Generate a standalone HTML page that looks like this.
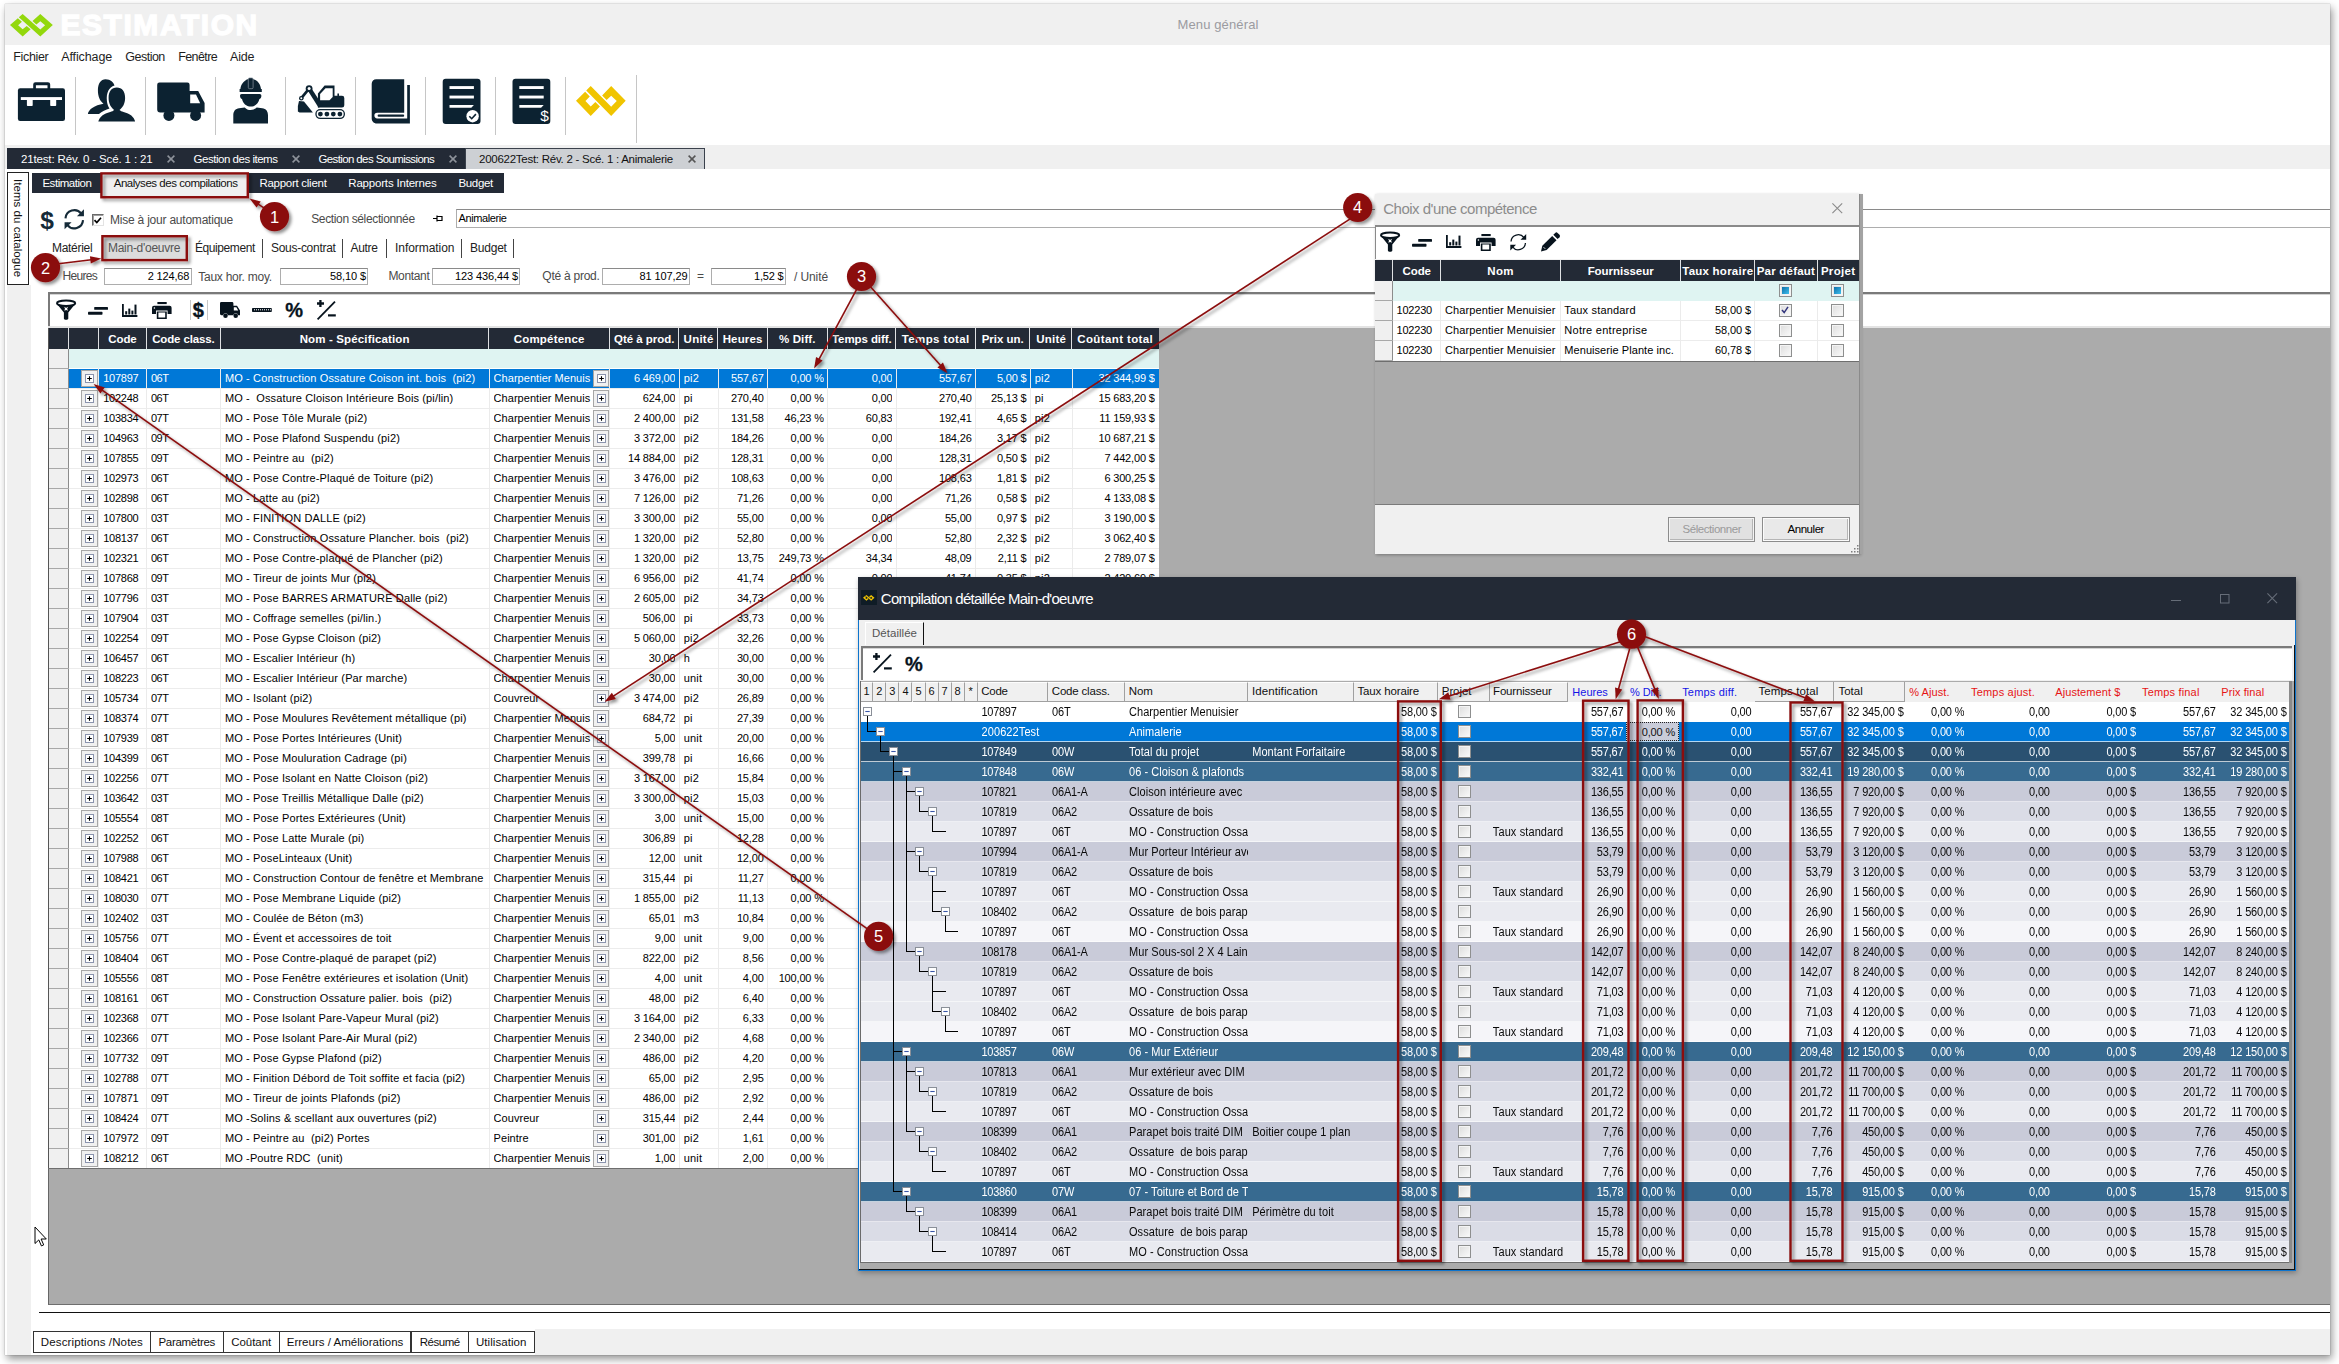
<!DOCTYPE html>
<html><head><meta charset="utf-8"><title>Estimation</title><style>html,body{margin:0;padding:0;background:#fff}
body{width:2339px;height:1364px;position:relative;overflow:hidden;font-family:"Liberation Sans",sans-serif}
#r{position:absolute;left:0;top:0;width:2339px;height:1364px;overflow:hidden}
#r div{position:absolute}
#r svg{pointer-events:none}
.t{white-space:nowrap;color:#000}
.d{height:20px;line-height:20px;font-size:11px;white-space:pre;overflow:hidden;transform:scaleY(1.11);transform-origin:50% 70%}
.g{height:20px;line-height:20px;font-size:11px;white-space:pre;overflow:hidden}
</style></head><body><div id="r">
<div style="left:5px;top:4px;width:2325px;height:1351px;background:#fff;box-shadow:0 0 1px rgba(0,0,0,.4),2px 4px 8px rgba(0,0,0,.42);"></div>
<div style="left:5px;top:4px;width:2325px;height:41px;background:#f0f0f0;"></div>
<div class="t" style="left:60.4px;top:8px;width:230px;height:34px;line-height:34px;font-size:30px;color:#fff;font-weight:bold;letter-spacing:1.57px;-webkit-text-stroke:1.300px #fff;">ESTIMATION</div>
<div class="t" style="left:1118px;top:15px;width:200px;height:20px;line-height:20px;font-size:13px;color:#9b9ba0;text-align:center;letter-spacing:0.13px;">Menu général</div>
<div class="t" style="left:13.3px;top:47px;width:80px;height:20px;line-height:20px;font-size:12.5px;color:#1e1e1e;letter-spacing:-0.36px;">Fichier</div>
<div class="t" style="left:61.2px;top:47px;width:80px;height:20px;line-height:20px;font-size:12.5px;color:#1e1e1e;letter-spacing:-0.1px;">Affichage</div>
<div class="t" style="left:125.3px;top:47px;width:80px;height:20px;line-height:20px;font-size:12.5px;color:#1e1e1e;letter-spacing:-0.51px;">Gestion</div>
<div class="t" style="left:178.2px;top:47px;width:80px;height:20px;line-height:20px;font-size:12.5px;color:#1e1e1e;letter-spacing:-0.58px;">Fenêtre</div>
<div class="t" style="left:230px;top:47px;width:80px;height:20px;line-height:20px;font-size:12.5px;color:#1e1e1e;letter-spacing:-0.18px;">Aide</div>
<div style="left:75px;top:77px;width:1px;height:58px;background:#c6c6c6;"></div>
<div style="left:145px;top:77px;width:1px;height:58px;background:#c6c6c6;"></div>
<div style="left:215px;top:77px;width:1px;height:58px;background:#c6c6c6;"></div>
<div style="left:285px;top:77px;width:1px;height:58px;background:#c6c6c6;"></div>
<div style="left:355px;top:77px;width:1px;height:58px;background:#c6c6c6;"></div>
<div style="left:425px;top:77px;width:1px;height:58px;background:#c6c6c6;"></div>
<div style="left:495px;top:77px;width:1px;height:58px;background:#c6c6c6;"></div>
<div style="left:565px;top:77px;width:1px;height:58px;background:#c6c6c6;"></div>
<div style="left:636px;top:75px;width:1px;height:68px;background:#c6c6c6;"></div>
<div style="left:5px;top:144.5px;width:2325px;height:24.5px;background:#f0f0f0;"></div>
<div style="left:7px;top:148px;width:458px;height:20.5px;background:#232a36;"></div>
<div style="left:464.5px;top:148px;width:240.5px;height:20.5px;background:#cdd0d4;border:1px solid #3a414c;border-bottom:none;box-sizing:border-box;"></div>
<div class="t" style="left:20.9px;top:148.5px;width:300px;height:20px;line-height:20px;font-size:11.5px;color:#fff;letter-spacing:-0.13px;">21test: Rév. 0 - Scé. 1 : 21</div>
<div class="t" style="left:193.6px;top:148.5px;width:300px;height:20px;line-height:20px;font-size:11.5px;color:#fff;letter-spacing:-0.48px;">Gestion des items</div>
<div class="t" style="left:318.4px;top:148.5px;width:300px;height:20px;line-height:20px;font-size:11.5px;color:#fff;letter-spacing:-0.61px;">Gestion des Soumissions</div>
<div class="t" style="left:479px;top:148.5px;width:300px;height:20px;line-height:20px;font-size:11.5px;color:#111;letter-spacing:-0.26px;">200622Test: Rév. 2 - Scé. 1 : Animalerie</div>
<svg style="position:absolute;left:166.7px;top:155px" width="8" height="8" viewBox="0 0 8 8"><path d="M.6 .6 7.4 7.4M7.4 .6 .6 7.4" stroke="#8e939b" stroke-width="1.5"/></svg>
<svg style="position:absolute;left:291.5px;top:155px" width="8" height="8" viewBox="0 0 8 8"><path d="M.6 .6 7.4 7.4M7.4 .6 .6 7.4" stroke="#8e939b" stroke-width="1.5"/></svg>
<svg style="position:absolute;left:448.7px;top:155px" width="8" height="8" viewBox="0 0 8 8"><path d="M.6 .6 7.4 7.4M7.4 .6 .6 7.4" stroke="#8e939b" stroke-width="1.5"/></svg>
<svg style="position:absolute;left:687.5px;top:155px" width="8" height="8" viewBox="0 0 8 8"><path d="M.6 .6 7.4 7.4M7.4 .6 .6 7.4" stroke="#555" stroke-width="1.5"/></svg>
<div style="left:6.8px;top:285px;width:24.1px;height:1070px;background:#f0f0f0;"></div>
<div style="left:7px;top:172px;width:22px;height:113px;background:#fff;border:1px solid #222;box-sizing:border-box;"></div>
<div class="t" style="left:7px;top:179.400px;width:22px;height:104px;writing-mode:vertical-rl;font-size:11.500px;line-height:22px;color:#111;letter-spacing:0.05px">Items du catalogue</div>
<div style="left:32px;top:172.5px;width:472px;height:20.5px;background:#232a36;"></div>
<div style="left:101px;top:173px;width:147.5px;height:25px;background:#f0f0f0;"></div>
<div class="t" style="left:42.4px;top:172.5px;width:200px;height:20.5px;line-height:20.5px;font-size:11.5px;color:#fff;letter-spacing:-0.46px;">Estimation</div>
<div class="t" style="left:113.7px;top:172.5px;width:200px;height:20.5px;line-height:20.5px;font-size:11.5px;color:#111;letter-spacing:-0.47px;">Analyses des compilations</div>
<div class="t" style="left:259.4px;top:172.5px;width:200px;height:20.5px;line-height:20.5px;font-size:11.5px;color:#fff;letter-spacing:-0.27px;">Rapport client</div>
<div class="t" style="left:348.3px;top:172.5px;width:200px;height:20.5px;line-height:20.5px;font-size:11.5px;color:#fff;letter-spacing:-0.19px;">Rapports Internes</div>
<div class="t" style="left:458.5px;top:172.5px;width:200px;height:20.5px;line-height:20.5px;font-size:11.5px;color:#fff;letter-spacing:-0.36px;">Budget</div>
<div style="left:534.6px;top:1329px;width:1795.4px;height:26px;background:#f0f0f0;"></div>
<div style="left:39px;top:1312px;width:2291px;height:1px;background:#111;"></div>
<div style="left:33px;top:1331px;width:117.7px;height:22px;background:#fff;border:1px solid #333;box-sizing:border-box;"></div>
<div class="t" style="left:33px;top:1331px;width:117.7px;height:22px;line-height:22px;font-size:11.5px;color:#111;text-align:center;letter-spacing:0.12px;">Descriptions /Notes</div>
<div style="left:149.7px;top:1331px;width:74.1px;height:22px;background:#fff;border:1px solid #333;box-sizing:border-box;"></div>
<div class="t" style="left:149.7px;top:1331px;width:74.1px;height:22px;line-height:22px;font-size:11.5px;color:#111;text-align:center;letter-spacing:-0.29px;">Paramètres</div>
<div style="left:222.8px;top:1331px;width:56.8px;height:22px;background:#fff;border:1px solid #333;box-sizing:border-box;"></div>
<div class="t" style="left:222.8px;top:1331px;width:56.8px;height:22px;line-height:22px;font-size:11.5px;color:#111;text-align:center;letter-spacing:-0.04px;">Coûtant</div>
<div style="left:278.6px;top:1331px;width:132.9px;height:22px;background:#fff;border:1px solid #333;box-sizing:border-box;"></div>
<div class="t" style="left:278.6px;top:1331px;width:132.9px;height:22px;line-height:22px;font-size:11.5px;color:#111;text-align:center;letter-spacing:0.01px;">Erreurs / Améliorations</div>
<div style="left:410.5px;top:1331px;width:58.4px;height:22px;background:#fff;border:1px solid #333;box-sizing:border-box;"></div>
<div class="t" style="left:410.5px;top:1331px;width:58.4px;height:22px;line-height:22px;font-size:11.5px;color:#111;text-align:center;letter-spacing:-0.47px;">Résumé</div>
<div style="left:467.9px;top:1331px;width:66.7px;height:22px;background:#fff;border:1px solid #333;box-sizing:border-box;"></div>
<div class="t" style="left:467.9px;top:1331px;width:66.7px;height:22px;line-height:22px;font-size:11.5px;color:#111;text-align:center;letter-spacing:0.06px;">Utilisation</div>
<svg style="position:absolute;left:9.75px;top:13.75px;overflow:visible" width="42.8" height="22.4" viewBox="0 0 50 29.9" preserveAspectRatio="none"><g fill="#93d80c"><polygon points="0,14.8 9.2,5.8 13.9,10.4 9.5,15 14.8,20.5 19.5,15.9 24.1,20.5 14.8,29.9"/><polygon points="14.8,0 35.4,20.7 41,15 35.4,9.6 30.8,14 26.3,9.4 35.4,0 50,14.8 35.4,29.9 10.3,4.5"/></g></svg>
<svg style="position:absolute;left:0px;top:0px;overflow:visible" width="700" height="140" viewBox="0 0 700 140"><g fill="#0c2231"><rect x="17.9" y="88.2" width="47.1" height="32.7" rx="2.2"/><path d="M33.2 89V84.6a2.3 2.3 0 0 1 2.3-2.3h12.4a2.3 2.3 0 0 1 2.3 2.3V89h-2.7v-3.7H35.9V89z"/></g><g fill="#fff"><rect x="20.8" y="97.1" width="41.2" height="2.9"/><rect x="26.9" y="99" width="5.8" height="7.1" rx=".8"/><rect x="50.2" y="99" width="6" height="7.1" rx=".8"/></g><g fill="#0c2231"><path d="M105.5 79.3c5.2 0 8.2 3.2 9 6.3-5.6 1.6-8.4 7.4-7.6 15.3.4 3.4 1.2 5.6 2.6 7.6-3.6 1.2-7.7 3-10.5 5.6H87.9c.6-5 6.8-8.8 15.6-10.4-3.6-2.6-5.6-7.2-5.6-13.4 0-6.600 3-11 7.600-11z"/><path d="M116.8 87.6c5.3 0 8.300 4.100 8.300 10.300 0 5.400-2.300 9.600-5.600 12 1 .9 2.200 1.500 4 2 6.500 1.600 10.600 4.800 11.700 9.700H98.300c1.300-4.900 5.400-8.100 11.900-9.700 1.800-.5 3-1.100 4-2-3.300-2.400-5.600-6.600-5.600-12 0-6.200 3-10.300 8.200-10.300z"/></g><g fill="#0c2231"><path d="M159.400 82.600h28a2.200 2.200 0 0 1 2.200 2.200v6.200h8.600l6.400 12v9.600h-44.400a3 3 0 0 1-3-3V84.800a2.200 2.200 0 0 1 2.200-2.200z"/><circle cx="168.900" cy="115.400" r="5.500"/><circle cx="195.600" cy="115.400" r="5.500"/></g><path d="M190.200 94.400h5.800l4.200 8.800h-10z" fill="#fff"/><g fill="#0c2231"><path d="M239.600 91.900v-3h.8c.6-5.400 4.600-9.800 10.300-10.400 5.700.6 9.700 5 10.300 10.400h.8v3z"/><rect x="248.300" y="77.900" width="4.800" height="10.800" rx="1.200" stroke="#8e9aa3" stroke-width=".7"/><path d="M241.800 94.100h17.800c1.600 0 1.900 1.200 1.700 2.500-.2 1.400-1 2.300-1.900 2.400-.9 4.300-4.300 7.600-8.700 7.600s-7.800-3.300-8.700-7.600c-.9-.1-1.700-1-1.900-2.400-.2-1.300.100-2.500 1.700-2.500z"/><path d="M233.300 123.600v-8c0-4.600 2.200-7 5.800-7.400l5.600-.8c1.400 1.600 3.600 2.600 6 2.600s4.600-1 6-2.600l5.600.8c3.600.4 5.700 2.800 5.700 7.400v8z"/></g><g fill="#0c2231"><path d="M317.900 107.500V93.500l6.700-8h9.900v10.300h2.900v-2.400h1.600v2.400h3a2.300 2.300 0 0 1 2.300 2.300v7.100a2.300 2.300 0 0 1-2.300 2.300z"/><path d="M309.100 88.600 320.500 106.500" stroke="#0c2231" stroke-width="4.400" fill="none"/><path d="M309.100 88.600 301.300 98.200" stroke="#0c2231" stroke-width="2.700" fill="none"/><circle cx="309.100" cy="88.600" r="3.400"/><circle cx="301.300" cy="98.200" r="2.300"/><path d="M299 100.900l5 .7 8.900 11h-13.400l-1.600-1.100v-5.500z"/><rect x="315.300" y="109" width="29.700" height="10.100" rx="5"/></g><g fill="#fff"><circle cx="309.100" cy="88.600" r="1.500"/><circle cx="301.300" cy="98.200" r="1"/><path d="M320.100 94l5.400-5.800h7.200v8.900l-3.200 3.200h-9.400z"/><rect x="316.600" y="110.300" width="27.100" height="7.500" rx="3.700"/></g><g fill="#0c2231"><circle cx="320.400" cy="114.100" r="2.400"/><circle cx="326.900" cy="114.100" r="2.400"/><circle cx="333.300" cy="114.100" r="2.400"/><circle cx="339.900" cy="114.100" r="2.400"/></g><g fill="#0c2231"><path d="M376.200 79.200h28v33.600h-27a2.800 2.800 0 0 0 0 5.600h30v-33.400h2.700v38.600h-33.200c-2.800 0-5-2.200-5-5V83.700c0-2.500 2-4.500 4.500-4.500z"/><rect x="377.600" y="114.600" width="26.600" height="2.200" rx="1.100"/></g><rect x="442.7" y="78.700" width="37.800" height="45.300" rx="3" fill="#0c2231"/><rect x="449.5" y="86.1" width="24.400" height="2.900" fill="#fff"/><rect x="449.5" y="95.6" width="24.400" height="2.900" fill="#fff"/><path d="M449.5 104.900h24.400l-2.600 2.900h-21.800z" fill="#fff"/><rect x="512.5" y="78.700" width="37.800" height="45.300" rx="3" fill="#0c2231"/><rect x="519.3" y="86.1" width="24.400" height="2.900" fill="#fff"/><rect x="519.3" y="95.6" width="24.400" height="2.900" fill="#fff"/><path d="M519.3 104.900h24.400l-2.600 2.900h-21.800z" fill="#fff"/><circle cx="472.600" cy="116.200" r="6.200" fill="#fff"/><path d="M469.300 116.300l2.400 2.400 4.200-4.600" fill="none" stroke="#0c2231" stroke-width="1.600"/></svg>
<div class="t" style="left:537.6px;top:105.6px;width:14px;height:20px;line-height:20px;font-size:15.5px;color:#fff;text-align:center;">$</div>
<svg style="position:absolute;left:576px;top:86px;overflow:visible" width="49.7" height="30" viewBox="0 0 50 29.9" preserveAspectRatio="none"><g fill="#f0c400"><polygon points="0,14.8 9.2,5.8 13.9,10.4 9.5,15 14.8,20.5 19.5,15.9 24.1,20.5 14.8,29.9"/><polygon points="14.8,0 35.4,20.7 41,15 35.4,9.6 30.8,14 26.3,9.4 35.4,0 50,14.8 35.4,29.9 10.3,4.5"/></g></svg>
<div style="left:48px;top:327.6px;width:2282px;height:977.3px;background:#ababab;border-bottom:1px solid #6e6e6e;border-left:1px solid #666;box-sizing:border-box;"></div>
<div class="t" style="left:37px;top:206.5px;width:20px;height:27px;line-height:27px;font-size:24.5px;color:#152a38;text-align:center;font-weight:bold;">$</div>
<svg style="position:absolute;left:63px;top:207.5px;overflow:visible" width="22.5" height="22.5" viewBox="0 0 20 20"><g fill="none" stroke="#152a38" stroke-width="1.9"><path d="M2.200 9.200A7.800 7.800 0 0 1 16.200 5"/><path d="M17.800 10.800A7.800 7.800 0 0 1 3.800 15"/></g><path d="M18.600 1.200V7.400H12.400z" fill="#152a38"/><path d="M1.400 18.800V12.600H7.600z" fill="#152a38"/></svg>
<div style="left:92.3px;top:214.3px;width:11.5px;height:11.5px;background:#fff;border:1px solid #6a6a6a;border-right-color:#e3e3e3;border-bottom-color:#e3e3e3;box-shadow:inset 1px 1px 0 #a0a0a0;box-sizing:border-box;"></div>
<svg style="position:absolute;left:94.3px;top:216.6px;overflow:visible" width="7.5" height="7" viewBox="0 0 7.5 7"><path d="M.5 3.200 2.800 5.600 7 .8" fill="none" stroke="#000" stroke-width="1.700"/></svg>
<div class="t" style="left:110px;top:211px;width:200px;height:18px;line-height:18px;font-size:12px;color:#4a4a4a;letter-spacing:-0.22px;">Mise à jour automatique</div>
<div class="t" style="left:311.2px;top:210px;width:200px;height:18px;line-height:18px;font-size:12px;color:#4a4a4a;letter-spacing:-0.36px;">Section sélectionnée</div>
<svg style="position:absolute;left:433px;top:213.5px;overflow:visible" width="10" height="9" viewBox="0 0 10 9"><path d="M0 4.500H4M4 1.500V7.500M4 2.500H9V6.500H4" fill="none" stroke="#000" stroke-width="1.200"/></svg>
<div style="left:456px;top:209px;width:1874px;height:18.5px;background:#fff;border:1px solid #adadad;border-top-color:#8a8a8a;box-sizing:border-box;border-right:none;"></div>
<div class="t" style="left:458.5px;top:209px;width:1874px;height:18.5px;line-height:18.5px;font-size:11px;letter-spacing:-0.4px;">Animalerie</div>
<div style="left:102.5px;top:236.5px;width:84.5px;height:24px;background:#dcdcdc;"></div>
<div class="t" style="left:52px;top:238px;width:120px;height:20px;line-height:20px;font-size:12px;color:#222;letter-spacing:-0.3px;">Matériel</div>
<div class="t" style="left:108px;top:238px;width:120px;height:20px;line-height:20px;font-size:12px;color:#555;letter-spacing:-0.28px;">Main-d'oeuvre</div>
<div class="t" style="left:195px;top:238px;width:120px;height:20px;line-height:20px;font-size:12px;color:#222;letter-spacing:-0.42px;">Équipement</div>
<div class="t" style="left:271px;top:238px;width:120px;height:20px;line-height:20px;font-size:12px;color:#222;letter-spacing:-0.29px;">Sous-contrat</div>
<div class="t" style="left:350.5px;top:238px;width:120px;height:20px;line-height:20px;font-size:12px;color:#222;letter-spacing:-0.34px;">Autre</div>
<div class="t" style="left:395px;top:238px;width:120px;height:20px;line-height:20px;font-size:12px;color:#222;letter-spacing:-0.05px;">Information</div>
<div class="t" style="left:470px;top:238px;width:120px;height:20px;line-height:20px;font-size:12px;color:#222;letter-spacing:-0.22px;">Budget</div>
<div style="left:261.9px;top:239px;width:1.2px;height:18.5px;background:#444;"></div>
<div style="left:341.9px;top:239px;width:1.2px;height:18.5px;background:#444;"></div>
<div style="left:385.8px;top:239px;width:1.2px;height:18.5px;background:#444;"></div>
<div style="left:460.9px;top:239px;width:1.2px;height:18.5px;background:#444;"></div>
<div style="left:512.9px;top:239px;width:1.2px;height:18.5px;background:#444;"></div>
<div class="t" style="left:62.4px;top:267.5px;width:80px;height:17.2px;line-height:17.2px;font-size:12px;color:#4a4a4a;letter-spacing:-0.66px;">Heures</div>
<div style="left:104.1px;top:267.5px;width:87.6px;height:17.2px;background:#fff;border:1px solid #adadad;border-top-color:#8a8a8a;box-sizing:border-box;"></div>
<div class="t" style="left:104.1px;top:267.5px;width:85.1px;height:17.2px;line-height:17.2px;font-size:11px;text-align:right;letter-spacing:-0.17px;">2 124,68</div>
<div class="t" style="left:198.3px;top:268.5px;width:90px;height:17.2px;line-height:17.2px;font-size:12px;color:#4a4a4a;letter-spacing:-0.26px;">Taux hor. moy.</div>
<div style="left:280px;top:267.5px;width:87.6px;height:17.2px;background:#fff;border:1px solid #adadad;border-top-color:#8a8a8a;box-sizing:border-box;"></div>
<div class="t" style="left:280px;top:267.5px;width:86px;height:17.2px;line-height:17.2px;font-size:11px;text-align:right;letter-spacing:-0.1px;">58,10 $</div>
<div class="t" style="left:388.4px;top:267.5px;width:80px;height:17.2px;line-height:17.2px;font-size:12px;color:#4a4a4a;letter-spacing:-0.34px;">Montant</div>
<div style="left:432.2px;top:267.5px;width:87.4px;height:17.2px;background:#fff;border:1px solid #adadad;border-top-color:#8a8a8a;box-sizing:border-box;"></div>
<div class="t" style="left:432.2px;top:267.5px;width:85.8px;height:17.2px;line-height:17.2px;font-size:11px;text-align:right;letter-spacing:-0.1px;">123 436,44 $</div>
<div class="t" style="left:542.3px;top:267.5px;width:80px;height:17.2px;line-height:17.2px;font-size:12px;color:#4a4a4a;letter-spacing:-0.25px;">Qté à prod.</div>
<div style="left:602.3px;top:267.5px;width:87.4px;height:17.2px;background:#fff;border:1px solid #adadad;border-top-color:#8a8a8a;box-sizing:border-box;"></div>
<div class="t" style="left:602.3px;top:267.5px;width:85.2px;height:17.2px;line-height:17.2px;font-size:11px;text-align:right;letter-spacing:-0.1px;">81 107,29</div>
<div class="t" style="left:697px;top:267.5px;width:20px;height:17.2px;line-height:17.2px;font-size:12px;color:#4a4a4a;">=</div>
<div style="left:711.2px;top:267.5px;width:74.5px;height:17.2px;background:#fff;border:1px solid #adadad;border-top-color:#8a8a8a;box-sizing:border-box;"></div>
<div class="t" style="left:711.2px;top:267.5px;width:72.3px;height:17.2px;line-height:17.2px;font-size:11px;text-align:right;letter-spacing:-0.18px;">1,52 $</div>
<div class="t" style="left:794px;top:269.2px;width:60px;height:17.2px;line-height:17.2px;font-size:12px;color:#4a4a4a;letter-spacing:-0.1px;">/ Unité</div>
<div style="left:48px;top:292px;width:2282px;height:35px;background:#fff;border-top:2px solid #7a7a7a;border-left:2px solid #7a7a7a;box-sizing:border-box;"></div>
<div style="left:50px;top:294px;width:2280px;height:1px;background:#d4d4d4;"></div>
<div style="left:48px;top:326.4px;width:2282px;height:1.2px;background:#e3e3e3;"></div>
<svg style="position:absolute;left:56px;top:300px;overflow:visible" width="20.2" height="19.7" viewBox="0 0 20.2 19.7"><g fill="none" stroke="#07131d"><ellipse cx="10.100" cy="3.300" rx="9.100" ry="2.700" stroke-width="2"/></g><path d="M.8 3.800 7.900 12.400V18.500c0 .7.600 1.200 1.300 1.200h1.800c.7 0 1.300-.5 1.300-1.200V12.400L19.400 3.800c-2 1.800-5.400 2.600-9.300 2.600S2.800 5.600.8 3.800z" fill="#07131d"/><path d="M8.600 7.400l3 3m0-3l-3 3" stroke="#fff" stroke-width="1.100"/></svg>
<svg style="position:absolute;left:88px;top:306.7px;overflow:visible" width="20" height="7.7" viewBox="0 0 20 7.7"><rect x="6.200" y="0" width="13.800" height="2.800" rx=".6" fill="#07131d"/><rect x="0" y="4.800" width="14.500" height="2.900" rx=".6" fill="#07131d"/></svg>
<svg style="position:absolute;left:122.4px;top:303.8px;overflow:visible" width="15.4" height="12.9" viewBox="0 0 15.4 12.9"><path d="M.9 0V12H15.400" fill="none" stroke="#07131d" stroke-width="1.800"/><g fill="#07131d"><rect x="3.200" y="7.200" width="2" height="3.300"/><rect x="6.300" y="4.600" width="2" height="5.900"/><rect x="9.400" y="6.600" width="2" height="3.900"/><rect x="12.500" y=".6" width="2" height="9.900"/></g></svg>
<svg style="position:absolute;left:152.1px;top:301.8px;overflow:visible" width="19.6" height="17" viewBox="0 0 19.6 17"><g fill="#07131d"><rect x="5.400" y="0" width="9.300" height="2.100"/><path d="M2 3.700h15.600a2 2 0 0 1 2 2v6.200h-4v-3.400H4v3.400H0V5.700a2 2 0 0 1 2-2z"/><path d="M4.800 9.400h10v7.600h-10z M6.400 10.600v4.800h6.800v-4.800z" fill-rule="evenodd"/></g><circle cx="2.400" cy="6" r=".8" fill="#fff"/></svg>
<div style="left:190px;top:300px;width:1px;height:20px;background:#c8c8c8;"></div>
<div style="left:206.5px;top:300px;width:1px;height:20px;background:#c8c8c8;"></div>
<div class="t" style="left:190.6px;top:299px;width:15.6px;height:23px;line-height:23px;font-size:20px;color:#07131d;text-align:center;font-weight:bold;-webkit-text-stroke:.4px #07131d;">$</div>
<svg style="position:absolute;left:220px;top:302.2px;overflow:visible" width="20" height="16" viewBox="0 0 20 16"><g fill="#07131d"><path d="M1.600 0h10.400a1.400 1.400 0 0 1 1.400 1.400v2.400h3.600l3 4.800v4.600h-1.800a2.600 2.600 0 0 0-5 0H8a2.600 2.600 0 0 0-5 0H1.400A1.400 1.400 0 0 1 0 11.800V1.400A1.400 1.400 0 0 1 1.600 0z"/><circle cx="5.500" cy="13.700" r="2.300"/><circle cx="15.700" cy="13.700" r="2.300"/></g><path d="M13.800 5.200h2.600l1.800 3.400h-4.400z" fill="#fff"/></svg>
<svg style="position:absolute;left:251.9px;top:308px;overflow:visible" width="19.8" height="4" viewBox="0 0 19.8 4"><rect x="0" y="0" width="19.800" height="4" rx=".8" fill="#07131d"/><rect x="2" y="1" width=".9" height="1.400" fill="#cfd3d6"/><rect x="4" y="1" width=".9" height="1.400" fill="#cfd3d6"/><rect x="6" y="1" width=".9" height="1.400" fill="#cfd3d6"/><rect x="8" y="1" width=".9" height="1.400" fill="#cfd3d6"/><rect x="10" y="1" width=".9" height="1.400" fill="#cfd3d6"/><rect x="12" y="1" width=".9" height="1.400" fill="#cfd3d6"/><rect x="14" y="1" width=".9" height="1.400" fill="#cfd3d6"/><rect x="16" y="1" width=".9" height="1.400" fill="#cfd3d6"/><rect x="18" y="1" width=".9" height="1.400" fill="#cfd3d6"/></svg>
<div class="t" style="left:282.2px;top:299.3px;width:24px;height:22px;line-height:22px;font-size:20px;color:#07131d;text-align:center;font-weight:bold;-webkit-text-stroke:.3px #07131d;">%</div>
<svg style="position:absolute;left:317px;top:300.3px;overflow:visible" width="18.8" height="19.4" viewBox="0 0 18.8 19.4"><g stroke="#07131d" fill="none"><path d="M3.400 0V7M0 3.500H7" stroke-width="2.300"/><path d="M.6 19.400 18 1.600" stroke-width="1.800"/><path d="M11 15.400H18.800" stroke-width="2.200"/></g></svg>
<div style="left:48.4px;top:328.4px;width:1110.2px;height:839.9px;background:#fff;"></div>
<div style="left:48.4px;top:328.4px;width:1110.2px;height:20.4px;background:#232a36;"></div>
<div style="left:67.9px;top:328.4px;width:1.1px;height:20.4px;background:#dfe1e4;"></div>
<div style="left:97.9px;top:328.4px;width:1.1px;height:20.4px;background:#dfe1e4;"></div>
<div style="left:145.6px;top:328.4px;width:1.1px;height:20.4px;background:#dfe1e4;"></div>
<div style="left:219.6px;top:328.4px;width:1.1px;height:20.4px;background:#dfe1e4;"></div>
<div style="left:488.3px;top:328.4px;width:1.1px;height:20.4px;background:#dfe1e4;"></div>
<div style="left:608.6px;top:328.4px;width:1.1px;height:20.4px;background:#dfe1e4;"></div>
<div style="left:678.4px;top:328.4px;width:1.1px;height:20.4px;background:#dfe1e4;"></div>
<div style="left:717.3px;top:328.4px;width:1.1px;height:20.4px;background:#dfe1e4;"></div>
<div style="left:766.5px;top:328.4px;width:1.1px;height:20.4px;background:#dfe1e4;"></div>
<div style="left:826.7px;top:328.4px;width:1.1px;height:20.4px;background:#dfe1e4;"></div>
<div style="left:895.4px;top:328.4px;width:1.1px;height:20.4px;background:#dfe1e4;"></div>
<div style="left:974.5px;top:328.4px;width:1.1px;height:20.4px;background:#dfe1e4;"></div>
<div style="left:1029.4px;top:328.4px;width:1.1px;height:20.4px;background:#dfe1e4;"></div>
<div style="left:1071.4px;top:328.4px;width:1.1px;height:20.4px;background:#dfe1e4;"></div>
<div class="t" style="left:98.9px;top:329.4px;width:47.2px;height:20.4px;line-height:20.4px;font-size:11.5px;color:#fff;text-align:center;font-weight:bold;letter-spacing:-0.11px;white-space:nowrap;">Code</div>
<div class="t" style="left:146.6px;top:329.4px;width:73.5px;height:20.4px;line-height:20.4px;font-size:11.5px;color:#fff;text-align:center;font-weight:bold;letter-spacing:-0.15px;white-space:nowrap;">Code class.</div>
<div class="t" style="left:220.6px;top:329.4px;width:268.2px;height:20.4px;line-height:20.4px;font-size:11.5px;color:#fff;text-align:center;font-weight:bold;letter-spacing:0.14px;white-space:nowrap;">Nom - Spécification</div>
<div class="t" style="left:489.3px;top:329.4px;width:119.8px;height:20.4px;line-height:20.4px;font-size:11.5px;color:#fff;text-align:center;font-weight:bold;letter-spacing:0.2px;white-space:nowrap;">Compétence</div>
<div class="t" style="left:609.6px;top:329.4px;width:69.3px;height:20.4px;line-height:20.4px;font-size:11.5px;color:#fff;text-align:center;font-weight:bold;letter-spacing:-0.02px;white-space:nowrap;">Qté à prod.</div>
<div class="t" style="left:679.4px;top:329.4px;width:38.4px;height:20.4px;line-height:20.4px;font-size:11.5px;color:#fff;text-align:center;font-weight:bold;letter-spacing:0.25px;white-space:nowrap;">Unité</div>
<div class="t" style="left:718.3px;top:329.4px;width:48.7px;height:20.4px;line-height:20.4px;font-size:11.5px;color:#fff;text-align:center;font-weight:bold;letter-spacing:0.17px;white-space:nowrap;">Heures</div>
<div class="t" style="left:767.5px;top:329.4px;width:59.7px;height:20.4px;line-height:20.4px;font-size:11.5px;color:#fff;text-align:center;font-weight:bold;letter-spacing:0.1px;white-space:nowrap;">% Diff.</div>
<div class="t" style="left:827.7px;top:329.4px;width:68.2px;height:20.4px;line-height:20.4px;font-size:11.5px;color:#fff;text-align:center;font-weight:bold;letter-spacing:-0.09px;white-space:nowrap;">Temps diff.</div>
<div class="t" style="left:896.4px;top:329.4px;width:78.6px;height:20.4px;line-height:20.4px;font-size:11.5px;color:#fff;text-align:center;font-weight:bold;letter-spacing:0.39px;white-space:nowrap;">Temps total</div>
<div class="t" style="left:975.5px;top:329.4px;width:54.4px;height:20.4px;line-height:20.4px;font-size:11.5px;color:#fff;text-align:center;font-weight:bold;letter-spacing:-0.02px;white-space:nowrap;">Prix un.</div>
<div class="t" style="left:1030.4px;top:329.4px;width:41.5px;height:20.4px;line-height:20.4px;font-size:11.5px;color:#fff;text-align:center;font-weight:bold;letter-spacing:0.25px;white-space:nowrap;">Unité</div>
<div class="t" style="left:1072.4px;top:329.4px;width:85.7px;height:20.4px;line-height:20.4px;font-size:11.5px;color:#fff;text-align:center;font-weight:bold;letter-spacing:0.39px;white-space:nowrap;">Coûtant total</div>
<div style="left:68.9px;top:348.8px;width:1089.7px;height:19.5px;background:#dff4f2;"></div>
<div style="left:48.4px;top:348.8px;width:20.5px;height:819.5px;background:#f0f0f0;border-right:1px solid #8c8c8c;box-sizing:border-box;"></div>
<div style="left:48.4px;top:367.8px;width:20.5px;height:1px;background:#a8a8a8"></div><div style="left:48.4px;top:387.8px;width:20.5px;height:1px;background:#a8a8a8"></div><div style="left:68.9px;top:387.8px;width:1089.7px;height:1px;background:#ececec"></div><div style="left:48.4px;top:407.8px;width:20.5px;height:1px;background:#a8a8a8"></div><div style="left:68.9px;top:407.8px;width:1089.7px;height:1px;background:#ececec"></div><div style="left:48.4px;top:427.8px;width:20.5px;height:1px;background:#a8a8a8"></div><div style="left:68.9px;top:427.8px;width:1089.7px;height:1px;background:#ececec"></div><div style="left:48.4px;top:447.8px;width:20.5px;height:1px;background:#a8a8a8"></div><div style="left:68.9px;top:447.8px;width:1089.7px;height:1px;background:#ececec"></div><div style="left:48.4px;top:467.8px;width:20.5px;height:1px;background:#a8a8a8"></div><div style="left:68.9px;top:467.8px;width:1089.7px;height:1px;background:#ececec"></div><div style="left:48.4px;top:487.8px;width:20.5px;height:1px;background:#a8a8a8"></div><div style="left:68.9px;top:487.8px;width:1089.7px;height:1px;background:#ececec"></div><div style="left:48.4px;top:507.8px;width:20.5px;height:1px;background:#a8a8a8"></div><div style="left:68.9px;top:507.8px;width:1089.7px;height:1px;background:#ececec"></div><div style="left:48.4px;top:527.8px;width:20.5px;height:1px;background:#a8a8a8"></div><div style="left:68.9px;top:527.8px;width:1089.7px;height:1px;background:#ececec"></div><div style="left:48.4px;top:547.8px;width:20.5px;height:1px;background:#a8a8a8"></div><div style="left:68.9px;top:547.8px;width:1089.7px;height:1px;background:#ececec"></div><div style="left:48.4px;top:567.8px;width:20.5px;height:1px;background:#a8a8a8"></div><div style="left:68.9px;top:567.8px;width:1089.7px;height:1px;background:#ececec"></div><div style="left:48.4px;top:587.8px;width:20.5px;height:1px;background:#a8a8a8"></div><div style="left:68.9px;top:587.8px;width:1089.7px;height:1px;background:#ececec"></div><div style="left:48.4px;top:607.8px;width:20.5px;height:1px;background:#a8a8a8"></div><div style="left:68.9px;top:607.8px;width:1089.7px;height:1px;background:#ececec"></div><div style="left:48.4px;top:627.8px;width:20.5px;height:1px;background:#a8a8a8"></div><div style="left:68.9px;top:627.8px;width:1089.7px;height:1px;background:#ececec"></div><div style="left:48.4px;top:647.8px;width:20.5px;height:1px;background:#a8a8a8"></div><div style="left:68.9px;top:647.8px;width:1089.7px;height:1px;background:#ececec"></div><div style="left:48.4px;top:667.8px;width:20.5px;height:1px;background:#a8a8a8"></div><div style="left:68.9px;top:667.8px;width:1089.7px;height:1px;background:#ececec"></div><div style="left:48.4px;top:687.8px;width:20.5px;height:1px;background:#a8a8a8"></div><div style="left:68.9px;top:687.8px;width:1089.7px;height:1px;background:#ececec"></div><div style="left:48.4px;top:707.8px;width:20.5px;height:1px;background:#a8a8a8"></div><div style="left:68.9px;top:707.8px;width:1089.7px;height:1px;background:#ececec"></div><div style="left:48.4px;top:727.8px;width:20.5px;height:1px;background:#a8a8a8"></div><div style="left:68.9px;top:727.8px;width:1089.7px;height:1px;background:#ececec"></div><div style="left:48.4px;top:747.8px;width:20.5px;height:1px;background:#a8a8a8"></div><div style="left:68.9px;top:747.8px;width:1089.7px;height:1px;background:#ececec"></div><div style="left:48.4px;top:767.8px;width:20.5px;height:1px;background:#a8a8a8"></div><div style="left:68.9px;top:767.8px;width:1089.7px;height:1px;background:#ececec"></div><div style="left:48.4px;top:787.8px;width:20.5px;height:1px;background:#a8a8a8"></div><div style="left:68.9px;top:787.8px;width:1089.7px;height:1px;background:#ececec"></div><div style="left:48.4px;top:807.8px;width:20.5px;height:1px;background:#a8a8a8"></div><div style="left:68.9px;top:807.8px;width:1089.7px;height:1px;background:#ececec"></div><div style="left:48.4px;top:827.8px;width:20.5px;height:1px;background:#a8a8a8"></div><div style="left:68.9px;top:827.8px;width:1089.7px;height:1px;background:#ececec"></div><div style="left:48.4px;top:847.8px;width:20.5px;height:1px;background:#a8a8a8"></div><div style="left:68.9px;top:847.8px;width:1089.7px;height:1px;background:#ececec"></div><div style="left:48.4px;top:867.8px;width:20.5px;height:1px;background:#a8a8a8"></div><div style="left:68.9px;top:867.8px;width:1089.7px;height:1px;background:#ececec"></div><div style="left:48.4px;top:887.8px;width:20.5px;height:1px;background:#a8a8a8"></div><div style="left:68.9px;top:887.8px;width:1089.7px;height:1px;background:#ececec"></div><div style="left:48.4px;top:907.8px;width:20.5px;height:1px;background:#a8a8a8"></div><div style="left:68.9px;top:907.8px;width:1089.7px;height:1px;background:#ececec"></div><div style="left:48.4px;top:927.8px;width:20.5px;height:1px;background:#a8a8a8"></div><div style="left:68.9px;top:927.8px;width:1089.7px;height:1px;background:#ececec"></div><div style="left:48.4px;top:947.8px;width:20.5px;height:1px;background:#a8a8a8"></div><div style="left:68.9px;top:947.8px;width:1089.7px;height:1px;background:#ececec"></div><div style="left:48.4px;top:967.8px;width:20.5px;height:1px;background:#a8a8a8"></div><div style="left:68.9px;top:967.8px;width:1089.7px;height:1px;background:#ececec"></div><div style="left:48.4px;top:987.8px;width:20.5px;height:1px;background:#a8a8a8"></div><div style="left:68.9px;top:987.8px;width:1089.7px;height:1px;background:#ececec"></div><div style="left:48.4px;top:1007.8px;width:20.5px;height:1px;background:#a8a8a8"></div><div style="left:68.9px;top:1007.8px;width:1089.7px;height:1px;background:#ececec"></div><div style="left:48.4px;top:1027.8px;width:20.5px;height:1px;background:#a8a8a8"></div><div style="left:68.9px;top:1027.8px;width:1089.7px;height:1px;background:#ececec"></div><div style="left:48.4px;top:1047.8px;width:20.5px;height:1px;background:#a8a8a8"></div><div style="left:68.9px;top:1047.8px;width:1089.7px;height:1px;background:#ececec"></div><div style="left:48.4px;top:1067.8px;width:20.5px;height:1px;background:#a8a8a8"></div><div style="left:68.9px;top:1067.8px;width:1089.7px;height:1px;background:#ececec"></div><div style="left:48.4px;top:1087.8px;width:20.5px;height:1px;background:#a8a8a8"></div><div style="left:68.9px;top:1087.8px;width:1089.7px;height:1px;background:#ececec"></div><div style="left:48.4px;top:1107.8px;width:20.5px;height:1px;background:#a8a8a8"></div><div style="left:68.9px;top:1107.8px;width:1089.7px;height:1px;background:#ececec"></div><div style="left:48.4px;top:1127.8px;width:20.5px;height:1px;background:#a8a8a8"></div><div style="left:68.9px;top:1127.8px;width:1089.7px;height:1px;background:#ececec"></div><div style="left:48.4px;top:1147.8px;width:20.5px;height:1px;background:#a8a8a8"></div><div style="left:68.9px;top:1147.8px;width:1089.7px;height:1px;background:#ececec"></div><div style="left:48.4px;top:1167.8px;width:20.5px;height:1px;background:#a8a8a8"></div>
<div style="left:68.9px;top:369.1px;width:1089.7px;height:19.2px;background:#0078d7;"></div>
<div style="left:98.1px;top:368.3px;width:1px;height:800px;background:#ebebeb;"></div>
<div style="left:145.8px;top:368.3px;width:1px;height:800px;background:#ebebeb;"></div>
<div style="left:219.8px;top:368.3px;width:1px;height:800px;background:#ebebeb;"></div>
<div style="left:488.5px;top:368.3px;width:1px;height:800px;background:#ebebeb;"></div>
<div style="left:608.8px;top:368.3px;width:1px;height:800px;background:#ebebeb;"></div>
<div style="left:678.6px;top:368.3px;width:1px;height:800px;background:#ebebeb;"></div>
<div style="left:717.5px;top:368.3px;width:1px;height:800px;background:#ebebeb;"></div>
<div style="left:766.7px;top:368.3px;width:1px;height:800px;background:#ebebeb;"></div>
<div style="left:826.9px;top:368.3px;width:1px;height:800px;background:#ebebeb;"></div>
<div style="left:895.6px;top:368.3px;width:1px;height:800px;background:#ebebeb;"></div>
<div style="left:974.7px;top:368.3px;width:1px;height:800px;background:#ebebeb;"></div>
<div style="left:1029.6px;top:368.3px;width:1px;height:800px;background:#ebebeb;"></div>
<div style="left:1071.6px;top:368.3px;width:1px;height:800px;background:#ebebeb;"></div>
<div style="left:47.9px;top:328.4px;width:1px;height:839.9px;background:#555;"></div>
<div style="left:48.4px;top:1168px;width:1110.2px;height:1.1px;background:#6e6e6e;"></div>
<div style="left:81.3px;top:369.6px;width:16.6px;height:17.6px;background:#f0f0f0;border:1px solid #a6a6a6;box-sizing:border-box;"></div>
<svg style="position:absolute;left:85.2px;top:374px;overflow:visible" width="9" height="9" viewBox="0 0 9 9"><rect x=".5" y=".5" width="8" height="8" fill="#fff" stroke="#8a93ad"/><path d="M2.200 4.500H6.800M4.500 2.200V6.800" stroke="#000" stroke-width="1.100"/></svg>
<div style="left:592.6px;top:369.6px;width:16.6px;height:17.6px;background:#f0f0f0;border:1px solid #a6a6a6;box-sizing:border-box;"></div>
<svg style="position:absolute;left:596.5px;top:374px;overflow:visible" width="9" height="9" viewBox="0 0 9 9"><rect x=".5" y=".5" width="8" height="8" fill="#fff" stroke="#8a93ad"/><path d="M2.200 4.500H6.800M4.500 2.200V6.800" stroke="#000" stroke-width="1.100"/></svg>
<div class="t g" style="left:103.2px;top:368.3px;width:43.7px;color:#fff;letter-spacing:-0.25px;">107897</div>
<div class="t g" style="left:150.9px;top:368.3px;width:70px;color:#fff;letter-spacing:-0.4px;">06T</div>
<div class="t g" style="left:224.9px;top:368.3px;width:264.7px;color:#fff;letter-spacing:0.14px;">MO - Construction Ossature Coison int. bois  (pi2)</div>
<div class="t g" style="left:493.6px;top:368.3px;width:98.7px;color:#fff;letter-spacing:0.04px;">Charpentier Menuis</div>
<div class="t g" style="left:609.6px;top:368.3px;width:65.9px;color:#fff;text-align:right;letter-spacing:-0.17px;">6 469,00</div>
<div class="t g" style="left:683.7px;top:368.3px;width:34.9px;color:#fff;letter-spacing:0.2px;">pi2</div>
<div class="t g" style="left:718.3px;top:368.3px;width:45.3px;color:#fff;text-align:right;letter-spacing:-0.17px;">557,67</div>
<div class="t g" style="left:767.5px;top:368.3px;width:56.3px;color:#fff;text-align:right;letter-spacing:-0.17px;">0,00 %</div>
<div class="t g" style="left:827.7px;top:368.3px;width:64.8px;color:#fff;text-align:right;letter-spacing:-0.17px;">0,00</div>
<div class="t g" style="left:896.4px;top:368.3px;width:75.2px;color:#fff;text-align:right;letter-spacing:-0.17px;">557,67</div>
<div class="t g" style="left:975.5px;top:368.3px;width:51px;color:#fff;text-align:right;letter-spacing:-0.17px;">5,00 $</div>
<div class="t g" style="left:1034.7px;top:368.3px;width:38px;color:#fff;letter-spacing:0.2px;">pi2</div>
<div class="t g" style="left:1072.4px;top:368.3px;width:82.3px;color:#fff;text-align:right;letter-spacing:-0.17px;">32 344,99 $</div>
<div style="left:81.3px;top:389.6px;width:16.6px;height:17.6px;background:#f0f0f0;border:1px solid #a6a6a6;box-sizing:border-box;"></div>
<svg style="position:absolute;left:85.2px;top:394px;overflow:visible" width="9" height="9" viewBox="0 0 9 9"><rect x=".5" y=".5" width="8" height="8" fill="#fff" stroke="#8a93ad"/><path d="M2.200 4.500H6.800M4.500 2.200V6.800" stroke="#000" stroke-width="1.100"/></svg>
<div style="left:592.6px;top:389.6px;width:16.6px;height:17.6px;background:#f0f0f0;border:1px solid #a6a6a6;box-sizing:border-box;"></div>
<svg style="position:absolute;left:596.5px;top:394px;overflow:visible" width="9" height="9" viewBox="0 0 9 9"><rect x=".5" y=".5" width="8" height="8" fill="#fff" stroke="#8a93ad"/><path d="M2.200 4.500H6.800M4.500 2.200V6.800" stroke="#000" stroke-width="1.100"/></svg>
<div class="t g" style="left:103.2px;top:388.3px;width:43.7px;letter-spacing:-0.25px;">102248</div>
<div class="t g" style="left:150.9px;top:388.3px;width:70px;letter-spacing:-0.4px;">06T</div>
<div class="t g" style="left:224.9px;top:388.3px;width:264.7px;letter-spacing:0.14px;">MO -  Ossature Cloison Intérieure Bois (pi/lin)</div>
<div class="t g" style="left:493.6px;top:388.3px;width:98.7px;letter-spacing:0.04px;">Charpentier Menuis</div>
<div class="t g" style="left:609.6px;top:388.3px;width:65.9px;text-align:right;letter-spacing:-0.17px;">624,00</div>
<div class="t g" style="left:683.7px;top:388.3px;width:34.9px;letter-spacing:0.2px;">pi</div>
<div class="t g" style="left:718.3px;top:388.3px;width:45.3px;text-align:right;letter-spacing:-0.17px;">270,40</div>
<div class="t g" style="left:767.5px;top:388.3px;width:56.3px;text-align:right;letter-spacing:-0.17px;">0,00 %</div>
<div class="t g" style="left:827.7px;top:388.3px;width:64.8px;text-align:right;letter-spacing:-0.17px;">0,00</div>
<div class="t g" style="left:896.4px;top:388.3px;width:75.2px;text-align:right;letter-spacing:-0.17px;">270,40</div>
<div class="t g" style="left:975.5px;top:388.3px;width:51px;text-align:right;letter-spacing:-0.17px;">25,13 $</div>
<div class="t g" style="left:1034.7px;top:388.3px;width:38px;letter-spacing:0.2px;">pi</div>
<div class="t g" style="left:1072.4px;top:388.3px;width:82.3px;text-align:right;letter-spacing:-0.17px;">15 683,20 $</div>
<div style="left:81.3px;top:409.6px;width:16.6px;height:17.6px;background:#f0f0f0;border:1px solid #a6a6a6;box-sizing:border-box;"></div>
<svg style="position:absolute;left:85.2px;top:414px;overflow:visible" width="9" height="9" viewBox="0 0 9 9"><rect x=".5" y=".5" width="8" height="8" fill="#fff" stroke="#8a93ad"/><path d="M2.200 4.500H6.800M4.500 2.200V6.800" stroke="#000" stroke-width="1.100"/></svg>
<div style="left:592.6px;top:409.6px;width:16.6px;height:17.6px;background:#f0f0f0;border:1px solid #a6a6a6;box-sizing:border-box;"></div>
<svg style="position:absolute;left:596.5px;top:414px;overflow:visible" width="9" height="9" viewBox="0 0 9 9"><rect x=".5" y=".5" width="8" height="8" fill="#fff" stroke="#8a93ad"/><path d="M2.200 4.500H6.800M4.500 2.200V6.800" stroke="#000" stroke-width="1.100"/></svg>
<div class="t g" style="left:103.2px;top:408.3px;width:43.7px;letter-spacing:-0.25px;">103834</div>
<div class="t g" style="left:150.9px;top:408.3px;width:70px;letter-spacing:-0.4px;">07T</div>
<div class="t g" style="left:224.9px;top:408.3px;width:264.7px;letter-spacing:0.14px;">MO - Pose Tôle Murale (pi2)</div>
<div class="t g" style="left:493.6px;top:408.3px;width:98.7px;letter-spacing:0.04px;">Charpentier Menuis</div>
<div class="t g" style="left:609.6px;top:408.3px;width:65.9px;text-align:right;letter-spacing:-0.17px;">2 400,00</div>
<div class="t g" style="left:683.7px;top:408.3px;width:34.9px;letter-spacing:0.2px;">pi2</div>
<div class="t g" style="left:718.3px;top:408.3px;width:45.3px;text-align:right;letter-spacing:-0.17px;">131,58</div>
<div class="t g" style="left:767.5px;top:408.3px;width:56.3px;text-align:right;letter-spacing:-0.17px;">46,23 %</div>
<div class="t g" style="left:827.7px;top:408.3px;width:64.8px;text-align:right;letter-spacing:-0.17px;">60,83</div>
<div class="t g" style="left:896.4px;top:408.3px;width:75.2px;text-align:right;letter-spacing:-0.17px;">192,41</div>
<div class="t g" style="left:975.5px;top:408.3px;width:51px;text-align:right;letter-spacing:-0.17px;">4,65 $</div>
<div class="t g" style="left:1034.7px;top:408.3px;width:38px;letter-spacing:0.2px;">pi2</div>
<div class="t g" style="left:1072.4px;top:408.3px;width:82.3px;text-align:right;letter-spacing:-0.17px;">11 159,93 $</div>
<div style="left:81.3px;top:429.6px;width:16.6px;height:17.6px;background:#f0f0f0;border:1px solid #a6a6a6;box-sizing:border-box;"></div>
<svg style="position:absolute;left:85.2px;top:434px;overflow:visible" width="9" height="9" viewBox="0 0 9 9"><rect x=".5" y=".5" width="8" height="8" fill="#fff" stroke="#8a93ad"/><path d="M2.200 4.500H6.800M4.500 2.200V6.800" stroke="#000" stroke-width="1.100"/></svg>
<div style="left:592.6px;top:429.6px;width:16.6px;height:17.6px;background:#f0f0f0;border:1px solid #a6a6a6;box-sizing:border-box;"></div>
<svg style="position:absolute;left:596.5px;top:434px;overflow:visible" width="9" height="9" viewBox="0 0 9 9"><rect x=".5" y=".5" width="8" height="8" fill="#fff" stroke="#8a93ad"/><path d="M2.200 4.500H6.800M4.500 2.200V6.800" stroke="#000" stroke-width="1.100"/></svg>
<div class="t g" style="left:103.2px;top:428.3px;width:43.7px;letter-spacing:-0.25px;">104963</div>
<div class="t g" style="left:150.9px;top:428.3px;width:70px;letter-spacing:-0.4px;">09T</div>
<div class="t g" style="left:224.9px;top:428.3px;width:264.7px;letter-spacing:0.14px;">MO - Pose Plafond Suspendu (pi2)</div>
<div class="t g" style="left:493.6px;top:428.3px;width:98.7px;letter-spacing:0.04px;">Charpentier Menuis</div>
<div class="t g" style="left:609.6px;top:428.3px;width:65.9px;text-align:right;letter-spacing:-0.17px;">3 372,00</div>
<div class="t g" style="left:683.7px;top:428.3px;width:34.9px;letter-spacing:0.2px;">pi2</div>
<div class="t g" style="left:718.3px;top:428.3px;width:45.3px;text-align:right;letter-spacing:-0.17px;">184,26</div>
<div class="t g" style="left:767.5px;top:428.3px;width:56.3px;text-align:right;letter-spacing:-0.17px;">0,00 %</div>
<div class="t g" style="left:827.7px;top:428.3px;width:64.8px;text-align:right;letter-spacing:-0.17px;">0,00</div>
<div class="t g" style="left:896.4px;top:428.3px;width:75.2px;text-align:right;letter-spacing:-0.17px;">184,26</div>
<div class="t g" style="left:975.5px;top:428.3px;width:51px;text-align:right;letter-spacing:-0.17px;">3,17 $</div>
<div class="t g" style="left:1034.7px;top:428.3px;width:38px;letter-spacing:0.2px;">pi2</div>
<div class="t g" style="left:1072.4px;top:428.3px;width:82.3px;text-align:right;letter-spacing:-0.17px;">10 687,21 $</div>
<div style="left:81.3px;top:449.6px;width:16.6px;height:17.6px;background:#f0f0f0;border:1px solid #a6a6a6;box-sizing:border-box;"></div>
<svg style="position:absolute;left:85.2px;top:454px;overflow:visible" width="9" height="9" viewBox="0 0 9 9"><rect x=".5" y=".5" width="8" height="8" fill="#fff" stroke="#8a93ad"/><path d="M2.200 4.500H6.800M4.500 2.200V6.800" stroke="#000" stroke-width="1.100"/></svg>
<div style="left:592.6px;top:449.6px;width:16.6px;height:17.6px;background:#f0f0f0;border:1px solid #a6a6a6;box-sizing:border-box;"></div>
<svg style="position:absolute;left:596.5px;top:454px;overflow:visible" width="9" height="9" viewBox="0 0 9 9"><rect x=".5" y=".5" width="8" height="8" fill="#fff" stroke="#8a93ad"/><path d="M2.200 4.500H6.800M4.500 2.200V6.800" stroke="#000" stroke-width="1.100"/></svg>
<div class="t g" style="left:103.2px;top:448.3px;width:43.7px;letter-spacing:-0.25px;">107855</div>
<div class="t g" style="left:150.9px;top:448.3px;width:70px;letter-spacing:-0.4px;">09T</div>
<div class="t g" style="left:224.9px;top:448.3px;width:264.7px;letter-spacing:0.14px;">MO - Peintre au  (pi2)</div>
<div class="t g" style="left:493.6px;top:448.3px;width:98.7px;letter-spacing:0.04px;">Charpentier Menuis</div>
<div class="t g" style="left:609.6px;top:448.3px;width:65.9px;text-align:right;letter-spacing:-0.17px;">14 884,00</div>
<div class="t g" style="left:683.7px;top:448.3px;width:34.9px;letter-spacing:0.2px;">pi2</div>
<div class="t g" style="left:718.3px;top:448.3px;width:45.3px;text-align:right;letter-spacing:-0.17px;">128,31</div>
<div class="t g" style="left:767.5px;top:448.3px;width:56.3px;text-align:right;letter-spacing:-0.17px;">0,00 %</div>
<div class="t g" style="left:827.7px;top:448.3px;width:64.8px;text-align:right;letter-spacing:-0.17px;">0,00</div>
<div class="t g" style="left:896.4px;top:448.3px;width:75.2px;text-align:right;letter-spacing:-0.17px;">128,31</div>
<div class="t g" style="left:975.5px;top:448.3px;width:51px;text-align:right;letter-spacing:-0.17px;">0,50 $</div>
<div class="t g" style="left:1034.7px;top:448.3px;width:38px;letter-spacing:0.2px;">pi2</div>
<div class="t g" style="left:1072.4px;top:448.3px;width:82.3px;text-align:right;letter-spacing:-0.17px;">7 442,00 $</div>
<div style="left:81.3px;top:469.6px;width:16.6px;height:17.6px;background:#f0f0f0;border:1px solid #a6a6a6;box-sizing:border-box;"></div>
<svg style="position:absolute;left:85.2px;top:474px;overflow:visible" width="9" height="9" viewBox="0 0 9 9"><rect x=".5" y=".5" width="8" height="8" fill="#fff" stroke="#8a93ad"/><path d="M2.200 4.500H6.800M4.500 2.200V6.800" stroke="#000" stroke-width="1.100"/></svg>
<div style="left:592.6px;top:469.6px;width:16.6px;height:17.6px;background:#f0f0f0;border:1px solid #a6a6a6;box-sizing:border-box;"></div>
<svg style="position:absolute;left:596.5px;top:474px;overflow:visible" width="9" height="9" viewBox="0 0 9 9"><rect x=".5" y=".5" width="8" height="8" fill="#fff" stroke="#8a93ad"/><path d="M2.200 4.500H6.800M4.500 2.200V6.800" stroke="#000" stroke-width="1.100"/></svg>
<div class="t g" style="left:103.2px;top:468.3px;width:43.7px;letter-spacing:-0.25px;">102973</div>
<div class="t g" style="left:150.9px;top:468.3px;width:70px;letter-spacing:-0.4px;">06T</div>
<div class="t g" style="left:224.9px;top:468.3px;width:264.7px;letter-spacing:0.14px;">MO - Pose Contre-Plaqué de Toiture (pi2)</div>
<div class="t g" style="left:493.6px;top:468.3px;width:98.7px;letter-spacing:0.04px;">Charpentier Menuis</div>
<div class="t g" style="left:609.6px;top:468.3px;width:65.9px;text-align:right;letter-spacing:-0.17px;">3 476,00</div>
<div class="t g" style="left:683.7px;top:468.3px;width:34.9px;letter-spacing:0.2px;">pi2</div>
<div class="t g" style="left:718.3px;top:468.3px;width:45.3px;text-align:right;letter-spacing:-0.17px;">108,63</div>
<div class="t g" style="left:767.5px;top:468.3px;width:56.3px;text-align:right;letter-spacing:-0.17px;">0,00 %</div>
<div class="t g" style="left:827.7px;top:468.3px;width:64.8px;text-align:right;letter-spacing:-0.17px;">0,00</div>
<div class="t g" style="left:896.4px;top:468.3px;width:75.2px;text-align:right;letter-spacing:-0.17px;">108,63</div>
<div class="t g" style="left:975.5px;top:468.3px;width:51px;text-align:right;letter-spacing:-0.17px;">1,81 $</div>
<div class="t g" style="left:1034.7px;top:468.3px;width:38px;letter-spacing:0.2px;">pi2</div>
<div class="t g" style="left:1072.4px;top:468.3px;width:82.3px;text-align:right;letter-spacing:-0.17px;">6 300,25 $</div>
<div style="left:81.3px;top:489.6px;width:16.6px;height:17.6px;background:#f0f0f0;border:1px solid #a6a6a6;box-sizing:border-box;"></div>
<svg style="position:absolute;left:85.2px;top:494px;overflow:visible" width="9" height="9" viewBox="0 0 9 9"><rect x=".5" y=".5" width="8" height="8" fill="#fff" stroke="#8a93ad"/><path d="M2.200 4.500H6.800M4.500 2.200V6.800" stroke="#000" stroke-width="1.100"/></svg>
<div style="left:592.6px;top:489.6px;width:16.6px;height:17.6px;background:#f0f0f0;border:1px solid #a6a6a6;box-sizing:border-box;"></div>
<svg style="position:absolute;left:596.5px;top:494px;overflow:visible" width="9" height="9" viewBox="0 0 9 9"><rect x=".5" y=".5" width="8" height="8" fill="#fff" stroke="#8a93ad"/><path d="M2.200 4.500H6.800M4.500 2.200V6.800" stroke="#000" stroke-width="1.100"/></svg>
<div class="t g" style="left:103.2px;top:488.3px;width:43.7px;letter-spacing:-0.25px;">102898</div>
<div class="t g" style="left:150.9px;top:488.3px;width:70px;letter-spacing:-0.4px;">06T</div>
<div class="t g" style="left:224.9px;top:488.3px;width:264.7px;letter-spacing:0.14px;">MO - Latte au (pi2)</div>
<div class="t g" style="left:493.6px;top:488.3px;width:98.7px;letter-spacing:0.04px;">Charpentier Menuis</div>
<div class="t g" style="left:609.6px;top:488.3px;width:65.9px;text-align:right;letter-spacing:-0.17px;">7 126,00</div>
<div class="t g" style="left:683.7px;top:488.3px;width:34.9px;letter-spacing:0.2px;">pi2</div>
<div class="t g" style="left:718.3px;top:488.3px;width:45.3px;text-align:right;letter-spacing:-0.17px;">71,26</div>
<div class="t g" style="left:767.5px;top:488.3px;width:56.3px;text-align:right;letter-spacing:-0.17px;">0,00 %</div>
<div class="t g" style="left:827.7px;top:488.3px;width:64.8px;text-align:right;letter-spacing:-0.17px;">0,00</div>
<div class="t g" style="left:896.4px;top:488.3px;width:75.2px;text-align:right;letter-spacing:-0.17px;">71,26</div>
<div class="t g" style="left:975.5px;top:488.3px;width:51px;text-align:right;letter-spacing:-0.17px;">0,58 $</div>
<div class="t g" style="left:1034.7px;top:488.3px;width:38px;letter-spacing:0.2px;">pi2</div>
<div class="t g" style="left:1072.4px;top:488.3px;width:82.3px;text-align:right;letter-spacing:-0.17px;">4 133,08 $</div>
<div style="left:81.3px;top:509.6px;width:16.6px;height:17.6px;background:#f0f0f0;border:1px solid #a6a6a6;box-sizing:border-box;"></div>
<svg style="position:absolute;left:85.2px;top:514px;overflow:visible" width="9" height="9" viewBox="0 0 9 9"><rect x=".5" y=".5" width="8" height="8" fill="#fff" stroke="#8a93ad"/><path d="M2.200 4.500H6.800M4.500 2.200V6.800" stroke="#000" stroke-width="1.100"/></svg>
<div style="left:592.6px;top:509.6px;width:16.6px;height:17.6px;background:#f0f0f0;border:1px solid #a6a6a6;box-sizing:border-box;"></div>
<svg style="position:absolute;left:596.5px;top:514px;overflow:visible" width="9" height="9" viewBox="0 0 9 9"><rect x=".5" y=".5" width="8" height="8" fill="#fff" stroke="#8a93ad"/><path d="M2.200 4.500H6.800M4.500 2.200V6.800" stroke="#000" stroke-width="1.100"/></svg>
<div class="t g" style="left:103.2px;top:508.3px;width:43.7px;letter-spacing:-0.25px;">107800</div>
<div class="t g" style="left:150.9px;top:508.3px;width:70px;letter-spacing:-0.4px;">03T</div>
<div class="t g" style="left:224.9px;top:508.3px;width:264.7px;letter-spacing:0.14px;">MO - FINITION DALLE (pi2)</div>
<div class="t g" style="left:493.6px;top:508.3px;width:98.7px;letter-spacing:0.04px;">Charpentier Menuis</div>
<div class="t g" style="left:609.6px;top:508.3px;width:65.9px;text-align:right;letter-spacing:-0.17px;">3 300,00</div>
<div class="t g" style="left:683.7px;top:508.3px;width:34.9px;letter-spacing:0.2px;">pi2</div>
<div class="t g" style="left:718.3px;top:508.3px;width:45.3px;text-align:right;letter-spacing:-0.17px;">55,00</div>
<div class="t g" style="left:767.5px;top:508.3px;width:56.3px;text-align:right;letter-spacing:-0.17px;">0,00 %</div>
<div class="t g" style="left:827.7px;top:508.3px;width:64.8px;text-align:right;letter-spacing:-0.17px;">0,00</div>
<div class="t g" style="left:896.4px;top:508.3px;width:75.2px;text-align:right;letter-spacing:-0.17px;">55,00</div>
<div class="t g" style="left:975.5px;top:508.3px;width:51px;text-align:right;letter-spacing:-0.17px;">0,97 $</div>
<div class="t g" style="left:1034.7px;top:508.3px;width:38px;letter-spacing:0.2px;">pi2</div>
<div class="t g" style="left:1072.4px;top:508.3px;width:82.3px;text-align:right;letter-spacing:-0.17px;">3 190,00 $</div>
<div style="left:81.3px;top:529.6px;width:16.6px;height:17.6px;background:#f0f0f0;border:1px solid #a6a6a6;box-sizing:border-box;"></div>
<svg style="position:absolute;left:85.2px;top:534px;overflow:visible" width="9" height="9" viewBox="0 0 9 9"><rect x=".5" y=".5" width="8" height="8" fill="#fff" stroke="#8a93ad"/><path d="M2.200 4.500H6.800M4.500 2.200V6.800" stroke="#000" stroke-width="1.100"/></svg>
<div style="left:592.6px;top:529.6px;width:16.6px;height:17.6px;background:#f0f0f0;border:1px solid #a6a6a6;box-sizing:border-box;"></div>
<svg style="position:absolute;left:596.5px;top:534px;overflow:visible" width="9" height="9" viewBox="0 0 9 9"><rect x=".5" y=".5" width="8" height="8" fill="#fff" stroke="#8a93ad"/><path d="M2.200 4.500H6.800M4.500 2.200V6.800" stroke="#000" stroke-width="1.100"/></svg>
<div class="t g" style="left:103.2px;top:528.3px;width:43.7px;letter-spacing:-0.25px;">108137</div>
<div class="t g" style="left:150.9px;top:528.3px;width:70px;letter-spacing:-0.4px;">06T</div>
<div class="t g" style="left:224.9px;top:528.3px;width:264.7px;letter-spacing:0.14px;">MO - Construction Ossature Plancher. bois  (pi2)</div>
<div class="t g" style="left:493.6px;top:528.3px;width:98.7px;letter-spacing:0.04px;">Charpentier Menuis</div>
<div class="t g" style="left:609.6px;top:528.3px;width:65.9px;text-align:right;letter-spacing:-0.17px;">1 320,00</div>
<div class="t g" style="left:683.7px;top:528.3px;width:34.9px;letter-spacing:0.2px;">pi2</div>
<div class="t g" style="left:718.3px;top:528.3px;width:45.3px;text-align:right;letter-spacing:-0.17px;">52,80</div>
<div class="t g" style="left:767.5px;top:528.3px;width:56.3px;text-align:right;letter-spacing:-0.17px;">0,00 %</div>
<div class="t g" style="left:827.7px;top:528.3px;width:64.8px;text-align:right;letter-spacing:-0.17px;">0,00</div>
<div class="t g" style="left:896.4px;top:528.3px;width:75.2px;text-align:right;letter-spacing:-0.17px;">52,80</div>
<div class="t g" style="left:975.5px;top:528.3px;width:51px;text-align:right;letter-spacing:-0.17px;">2,32 $</div>
<div class="t g" style="left:1034.7px;top:528.3px;width:38px;letter-spacing:0.2px;">pi2</div>
<div class="t g" style="left:1072.4px;top:528.3px;width:82.3px;text-align:right;letter-spacing:-0.17px;">3 062,40 $</div>
<div style="left:81.3px;top:549.6px;width:16.6px;height:17.6px;background:#f0f0f0;border:1px solid #a6a6a6;box-sizing:border-box;"></div>
<svg style="position:absolute;left:85.2px;top:554px;overflow:visible" width="9" height="9" viewBox="0 0 9 9"><rect x=".5" y=".5" width="8" height="8" fill="#fff" stroke="#8a93ad"/><path d="M2.200 4.500H6.800M4.500 2.200V6.800" stroke="#000" stroke-width="1.100"/></svg>
<div style="left:592.6px;top:549.6px;width:16.6px;height:17.6px;background:#f0f0f0;border:1px solid #a6a6a6;box-sizing:border-box;"></div>
<svg style="position:absolute;left:596.5px;top:554px;overflow:visible" width="9" height="9" viewBox="0 0 9 9"><rect x=".5" y=".5" width="8" height="8" fill="#fff" stroke="#8a93ad"/><path d="M2.200 4.500H6.800M4.500 2.200V6.800" stroke="#000" stroke-width="1.100"/></svg>
<div class="t g" style="left:103.2px;top:548.3px;width:43.7px;letter-spacing:-0.25px;">102321</div>
<div class="t g" style="left:150.9px;top:548.3px;width:70px;letter-spacing:-0.4px;">06T</div>
<div class="t g" style="left:224.9px;top:548.3px;width:264.7px;letter-spacing:0.14px;">MO - Pose Contre-plaqué de Plancher (pi2)</div>
<div class="t g" style="left:493.6px;top:548.3px;width:98.7px;letter-spacing:0.04px;">Charpentier Menuis</div>
<div class="t g" style="left:609.6px;top:548.3px;width:65.9px;text-align:right;letter-spacing:-0.17px;">1 320,00</div>
<div class="t g" style="left:683.7px;top:548.3px;width:34.9px;letter-spacing:0.2px;">pi2</div>
<div class="t g" style="left:718.3px;top:548.3px;width:45.3px;text-align:right;letter-spacing:-0.17px;">13,75</div>
<div class="t g" style="left:767.5px;top:548.3px;width:56.3px;text-align:right;letter-spacing:-0.17px;">249,73 %</div>
<div class="t g" style="left:827.7px;top:548.3px;width:64.8px;text-align:right;letter-spacing:-0.17px;">34,34</div>
<div class="t g" style="left:896.4px;top:548.3px;width:75.2px;text-align:right;letter-spacing:-0.17px;">48,09</div>
<div class="t g" style="left:975.5px;top:548.3px;width:51px;text-align:right;letter-spacing:-0.17px;">2,11 $</div>
<div class="t g" style="left:1034.7px;top:548.3px;width:38px;letter-spacing:0.2px;">pi2</div>
<div class="t g" style="left:1072.4px;top:548.3px;width:82.3px;text-align:right;letter-spacing:-0.17px;">2 789,07 $</div>
<div style="left:81.3px;top:569.6px;width:16.6px;height:17.6px;background:#f0f0f0;border:1px solid #a6a6a6;box-sizing:border-box;"></div>
<svg style="position:absolute;left:85.2px;top:574px;overflow:visible" width="9" height="9" viewBox="0 0 9 9"><rect x=".5" y=".5" width="8" height="8" fill="#fff" stroke="#8a93ad"/><path d="M2.200 4.500H6.800M4.500 2.200V6.800" stroke="#000" stroke-width="1.100"/></svg>
<div style="left:592.6px;top:569.6px;width:16.6px;height:17.6px;background:#f0f0f0;border:1px solid #a6a6a6;box-sizing:border-box;"></div>
<svg style="position:absolute;left:596.5px;top:574px;overflow:visible" width="9" height="9" viewBox="0 0 9 9"><rect x=".5" y=".5" width="8" height="8" fill="#fff" stroke="#8a93ad"/><path d="M2.200 4.500H6.800M4.500 2.200V6.800" stroke="#000" stroke-width="1.100"/></svg>
<div class="t g" style="left:103.2px;top:568.3px;width:43.7px;letter-spacing:-0.25px;">107868</div>
<div class="t g" style="left:150.9px;top:568.3px;width:70px;letter-spacing:-0.4px;">09T</div>
<div class="t g" style="left:224.9px;top:568.3px;width:264.7px;letter-spacing:0.14px;">MO - Tireur de joints Mur (pi2)</div>
<div class="t g" style="left:493.6px;top:568.3px;width:98.7px;letter-spacing:0.04px;">Charpentier Menuis</div>
<div class="t g" style="left:609.6px;top:568.3px;width:65.9px;text-align:right;letter-spacing:-0.17px;">6 956,00</div>
<div class="t g" style="left:683.7px;top:568.3px;width:34.9px;letter-spacing:0.2px;">pi2</div>
<div class="t g" style="left:718.3px;top:568.3px;width:45.3px;text-align:right;letter-spacing:-0.17px;">41,74</div>
<div class="t g" style="left:767.5px;top:568.3px;width:56.3px;text-align:right;letter-spacing:-0.17px;">0,00 %</div>
<div class="t g" style="left:827.7px;top:568.3px;width:64.8px;text-align:right;letter-spacing:-0.17px;">0,00</div>
<div class="t g" style="left:896.4px;top:568.3px;width:75.2px;text-align:right;letter-spacing:-0.17px;">41,74</div>
<div class="t g" style="left:975.5px;top:568.3px;width:51px;text-align:right;letter-spacing:-0.17px;">0,35 $</div>
<div class="t g" style="left:1034.7px;top:568.3px;width:38px;letter-spacing:0.2px;">pi2</div>
<div class="t g" style="left:1072.4px;top:568.3px;width:82.3px;text-align:right;letter-spacing:-0.17px;">2 420,69 $</div>
<div style="left:81.3px;top:589.6px;width:16.6px;height:17.6px;background:#f0f0f0;border:1px solid #a6a6a6;box-sizing:border-box;"></div>
<svg style="position:absolute;left:85.2px;top:594px;overflow:visible" width="9" height="9" viewBox="0 0 9 9"><rect x=".5" y=".5" width="8" height="8" fill="#fff" stroke="#8a93ad"/><path d="M2.200 4.500H6.800M4.500 2.200V6.800" stroke="#000" stroke-width="1.100"/></svg>
<div style="left:592.6px;top:589.6px;width:16.6px;height:17.6px;background:#f0f0f0;border:1px solid #a6a6a6;box-sizing:border-box;"></div>
<svg style="position:absolute;left:596.5px;top:594px;overflow:visible" width="9" height="9" viewBox="0 0 9 9"><rect x=".5" y=".5" width="8" height="8" fill="#fff" stroke="#8a93ad"/><path d="M2.200 4.500H6.800M4.500 2.200V6.800" stroke="#000" stroke-width="1.100"/></svg>
<div class="t g" style="left:103.2px;top:588.3px;width:43.7px;letter-spacing:-0.25px;">107796</div>
<div class="t g" style="left:150.9px;top:588.3px;width:70px;letter-spacing:-0.4px;">03T</div>
<div class="t g" style="left:224.9px;top:588.3px;width:264.7px;letter-spacing:0.14px;">MO - Pose BARRES ARMATURE Dalle (pi2)</div>
<div class="t g" style="left:493.6px;top:588.3px;width:98.7px;letter-spacing:0.04px;">Charpentier Menuis</div>
<div class="t g" style="left:609.6px;top:588.3px;width:65.9px;text-align:right;letter-spacing:-0.17px;">2 605,00</div>
<div class="t g" style="left:683.7px;top:588.3px;width:34.9px;letter-spacing:0.2px;">pi2</div>
<div class="t g" style="left:718.3px;top:588.3px;width:45.3px;text-align:right;letter-spacing:-0.17px;">34,73</div>
<div class="t g" style="left:767.5px;top:588.3px;width:56.3px;text-align:right;letter-spacing:-0.17px;">0,00 %</div>
<div class="t g" style="left:827.7px;top:588.3px;width:64.8px;text-align:right;letter-spacing:-0.17px;">0,00</div>
<div class="t g" style="left:896.4px;top:588.3px;width:75.2px;text-align:right;letter-spacing:-0.17px;">34,73</div>
<div class="t g" style="left:975.5px;top:588.3px;width:51px;text-align:right;letter-spacing:-0.17px;">0,77 $</div>
<div class="t g" style="left:1034.7px;top:588.3px;width:38px;letter-spacing:0.2px;">pi2</div>
<div class="t g" style="left:1072.4px;top:588.3px;width:82.3px;text-align:right;letter-spacing:-0.17px;">2 014,34 $</div>
<div style="left:81.3px;top:609.6px;width:16.6px;height:17.6px;background:#f0f0f0;border:1px solid #a6a6a6;box-sizing:border-box;"></div>
<svg style="position:absolute;left:85.2px;top:614px;overflow:visible" width="9" height="9" viewBox="0 0 9 9"><rect x=".5" y=".5" width="8" height="8" fill="#fff" stroke="#8a93ad"/><path d="M2.200 4.500H6.800M4.500 2.200V6.800" stroke="#000" stroke-width="1.100"/></svg>
<div style="left:592.6px;top:609.6px;width:16.6px;height:17.6px;background:#f0f0f0;border:1px solid #a6a6a6;box-sizing:border-box;"></div>
<svg style="position:absolute;left:596.5px;top:614px;overflow:visible" width="9" height="9" viewBox="0 0 9 9"><rect x=".5" y=".5" width="8" height="8" fill="#fff" stroke="#8a93ad"/><path d="M2.200 4.500H6.800M4.500 2.200V6.800" stroke="#000" stroke-width="1.100"/></svg>
<div class="t g" style="left:103.2px;top:608.3px;width:43.7px;letter-spacing:-0.25px;">107904</div>
<div class="t g" style="left:150.9px;top:608.3px;width:70px;letter-spacing:-0.4px;">03T</div>
<div class="t g" style="left:224.9px;top:608.3px;width:264.7px;letter-spacing:0.14px;">MO - Coffrage semelles (pi/lin.)</div>
<div class="t g" style="left:493.6px;top:608.3px;width:98.7px;letter-spacing:0.04px;">Charpentier Menuis</div>
<div class="t g" style="left:609.6px;top:608.3px;width:65.9px;text-align:right;letter-spacing:-0.17px;">506,00</div>
<div class="t g" style="left:683.7px;top:608.3px;width:34.9px;letter-spacing:0.2px;">pi</div>
<div class="t g" style="left:718.3px;top:608.3px;width:45.3px;text-align:right;letter-spacing:-0.17px;">33,73</div>
<div class="t g" style="left:767.5px;top:608.3px;width:56.3px;text-align:right;letter-spacing:-0.17px;">0,00 %</div>
<div class="t g" style="left:827.7px;top:608.3px;width:64.8px;text-align:right;letter-spacing:-0.17px;">0,00</div>
<div class="t g" style="left:896.4px;top:608.3px;width:75.2px;text-align:right;letter-spacing:-0.17px;">33,73</div>
<div class="t g" style="left:975.5px;top:608.3px;width:51px;text-align:right;letter-spacing:-0.17px;">3,87 $</div>
<div class="t g" style="left:1034.7px;top:608.3px;width:38px;letter-spacing:0.2px;">pi</div>
<div class="t g" style="left:1072.4px;top:608.3px;width:82.3px;text-align:right;letter-spacing:-0.17px;">1 956,34 $</div>
<div style="left:81.3px;top:629.6px;width:16.6px;height:17.6px;background:#f0f0f0;border:1px solid #a6a6a6;box-sizing:border-box;"></div>
<svg style="position:absolute;left:85.2px;top:634px;overflow:visible" width="9" height="9" viewBox="0 0 9 9"><rect x=".5" y=".5" width="8" height="8" fill="#fff" stroke="#8a93ad"/><path d="M2.200 4.500H6.800M4.500 2.200V6.800" stroke="#000" stroke-width="1.100"/></svg>
<div style="left:592.6px;top:629.6px;width:16.6px;height:17.6px;background:#f0f0f0;border:1px solid #a6a6a6;box-sizing:border-box;"></div>
<svg style="position:absolute;left:596.5px;top:634px;overflow:visible" width="9" height="9" viewBox="0 0 9 9"><rect x=".5" y=".5" width="8" height="8" fill="#fff" stroke="#8a93ad"/><path d="M2.200 4.500H6.800M4.500 2.200V6.800" stroke="#000" stroke-width="1.100"/></svg>
<div class="t g" style="left:103.2px;top:628.3px;width:43.7px;letter-spacing:-0.25px;">102254</div>
<div class="t g" style="left:150.9px;top:628.3px;width:70px;letter-spacing:-0.4px;">09T</div>
<div class="t g" style="left:224.9px;top:628.3px;width:264.7px;letter-spacing:0.14px;">MO - Pose Gypse Cloison (pi2)</div>
<div class="t g" style="left:493.6px;top:628.3px;width:98.7px;letter-spacing:0.04px;">Charpentier Menuis</div>
<div class="t g" style="left:609.6px;top:628.3px;width:65.9px;text-align:right;letter-spacing:-0.17px;">5 060,00</div>
<div class="t g" style="left:683.7px;top:628.3px;width:34.9px;letter-spacing:0.2px;">pi2</div>
<div class="t g" style="left:718.3px;top:628.3px;width:45.3px;text-align:right;letter-spacing:-0.17px;">32,26</div>
<div class="t g" style="left:767.5px;top:628.3px;width:56.3px;text-align:right;letter-spacing:-0.17px;">0,00 %</div>
<div class="t g" style="left:827.7px;top:628.3px;width:64.8px;text-align:right;letter-spacing:-0.17px;">0,00</div>
<div class="t g" style="left:896.4px;top:628.3px;width:75.2px;text-align:right;letter-spacing:-0.17px;">32,26</div>
<div class="t g" style="left:975.5px;top:628.3px;width:51px;text-align:right;letter-spacing:-0.17px;">0,37 $</div>
<div class="t g" style="left:1034.7px;top:628.3px;width:38px;letter-spacing:0.2px;">pi2</div>
<div class="t g" style="left:1072.4px;top:628.3px;width:82.3px;text-align:right;letter-spacing:-0.17px;">1 871,08 $</div>
<div style="left:81.3px;top:649.6px;width:16.6px;height:17.6px;background:#f0f0f0;border:1px solid #a6a6a6;box-sizing:border-box;"></div>
<svg style="position:absolute;left:85.2px;top:654px;overflow:visible" width="9" height="9" viewBox="0 0 9 9"><rect x=".5" y=".5" width="8" height="8" fill="#fff" stroke="#8a93ad"/><path d="M2.200 4.500H6.800M4.500 2.200V6.800" stroke="#000" stroke-width="1.100"/></svg>
<div style="left:592.6px;top:649.6px;width:16.6px;height:17.6px;background:#f0f0f0;border:1px solid #a6a6a6;box-sizing:border-box;"></div>
<svg style="position:absolute;left:596.5px;top:654px;overflow:visible" width="9" height="9" viewBox="0 0 9 9"><rect x=".5" y=".5" width="8" height="8" fill="#fff" stroke="#8a93ad"/><path d="M2.200 4.500H6.800M4.500 2.200V6.800" stroke="#000" stroke-width="1.100"/></svg>
<div class="t g" style="left:103.2px;top:648.3px;width:43.7px;letter-spacing:-0.25px;">106457</div>
<div class="t g" style="left:150.9px;top:648.3px;width:70px;letter-spacing:-0.4px;">06T</div>
<div class="t g" style="left:224.9px;top:648.3px;width:264.7px;letter-spacing:0.14px;">MO - Escalier Intérieur (h)</div>
<div class="t g" style="left:493.6px;top:648.3px;width:98.7px;letter-spacing:0.04px;">Charpentier Menuis</div>
<div class="t g" style="left:609.6px;top:648.3px;width:65.9px;text-align:right;letter-spacing:-0.17px;">30,00</div>
<div class="t g" style="left:683.7px;top:648.3px;width:34.9px;letter-spacing:0.2px;">h</div>
<div class="t g" style="left:718.3px;top:648.3px;width:45.3px;text-align:right;letter-spacing:-0.17px;">30,00</div>
<div class="t g" style="left:767.5px;top:648.3px;width:56.3px;text-align:right;letter-spacing:-0.17px;">0,00 %</div>
<div class="t g" style="left:827.7px;top:648.3px;width:64.8px;text-align:right;letter-spacing:-0.17px;">0,00</div>
<div class="t g" style="left:896.4px;top:648.3px;width:75.2px;text-align:right;letter-spacing:-0.17px;">30,00</div>
<div class="t g" style="left:975.5px;top:648.3px;width:51px;text-align:right;letter-spacing:-0.17px;">58,00 $</div>
<div class="t g" style="left:1034.7px;top:648.3px;width:38px;letter-spacing:0.2px;">h</div>
<div class="t g" style="left:1072.4px;top:648.3px;width:82.3px;text-align:right;letter-spacing:-0.17px;">1 740,00 $</div>
<div style="left:81.3px;top:669.6px;width:16.6px;height:17.6px;background:#f0f0f0;border:1px solid #a6a6a6;box-sizing:border-box;"></div>
<svg style="position:absolute;left:85.2px;top:674px;overflow:visible" width="9" height="9" viewBox="0 0 9 9"><rect x=".5" y=".5" width="8" height="8" fill="#fff" stroke="#8a93ad"/><path d="M2.200 4.500H6.800M4.500 2.200V6.800" stroke="#000" stroke-width="1.100"/></svg>
<div style="left:592.6px;top:669.6px;width:16.6px;height:17.6px;background:#f0f0f0;border:1px solid #a6a6a6;box-sizing:border-box;"></div>
<svg style="position:absolute;left:596.5px;top:674px;overflow:visible" width="9" height="9" viewBox="0 0 9 9"><rect x=".5" y=".5" width="8" height="8" fill="#fff" stroke="#8a93ad"/><path d="M2.200 4.500H6.800M4.500 2.200V6.800" stroke="#000" stroke-width="1.100"/></svg>
<div class="t g" style="left:103.2px;top:668.3px;width:43.7px;letter-spacing:-0.25px;">108223</div>
<div class="t g" style="left:150.9px;top:668.3px;width:70px;letter-spacing:-0.4px;">06T</div>
<div class="t g" style="left:224.9px;top:668.3px;width:264.7px;letter-spacing:0.14px;">MO - Escalier Intérieur (Par marche)</div>
<div class="t g" style="left:493.6px;top:668.3px;width:98.7px;letter-spacing:0.04px;">Charpentier Menuis</div>
<div class="t g" style="left:609.6px;top:668.3px;width:65.9px;text-align:right;letter-spacing:-0.17px;">30,00</div>
<div class="t g" style="left:683.7px;top:668.3px;width:34.9px;letter-spacing:0.2px;">unit</div>
<div class="t g" style="left:718.3px;top:668.3px;width:45.3px;text-align:right;letter-spacing:-0.17px;">30,00</div>
<div class="t g" style="left:767.5px;top:668.3px;width:56.3px;text-align:right;letter-spacing:-0.17px;">0,00 %</div>
<div class="t g" style="left:827.7px;top:668.3px;width:64.8px;text-align:right;letter-spacing:-0.17px;">0,00</div>
<div class="t g" style="left:896.4px;top:668.3px;width:75.2px;text-align:right;letter-spacing:-0.17px;">30,00</div>
<div class="t g" style="left:975.5px;top:668.3px;width:51px;text-align:right;letter-spacing:-0.17px;">58,00 $</div>
<div class="t g" style="left:1034.7px;top:668.3px;width:38px;letter-spacing:0.2px;">unit</div>
<div class="t g" style="left:1072.4px;top:668.3px;width:82.3px;text-align:right;letter-spacing:-0.17px;">1 740,00 $</div>
<div style="left:81.3px;top:689.6px;width:16.6px;height:17.6px;background:#f0f0f0;border:1px solid #a6a6a6;box-sizing:border-box;"></div>
<svg style="position:absolute;left:85.2px;top:694px;overflow:visible" width="9" height="9" viewBox="0 0 9 9"><rect x=".5" y=".5" width="8" height="8" fill="#fff" stroke="#8a93ad"/><path d="M2.200 4.500H6.800M4.500 2.200V6.800" stroke="#000" stroke-width="1.100"/></svg>
<div style="left:592.6px;top:689.6px;width:16.6px;height:17.6px;background:#f0f0f0;border:1px solid #a6a6a6;box-sizing:border-box;"></div>
<svg style="position:absolute;left:596.5px;top:694px;overflow:visible" width="9" height="9" viewBox="0 0 9 9"><rect x=".5" y=".5" width="8" height="8" fill="#fff" stroke="#8a93ad"/><path d="M2.200 4.500H6.800M4.500 2.200V6.800" stroke="#000" stroke-width="1.100"/></svg>
<div class="t g" style="left:103.2px;top:688.3px;width:43.7px;letter-spacing:-0.25px;">105734</div>
<div class="t g" style="left:150.9px;top:688.3px;width:70px;letter-spacing:-0.4px;">07T</div>
<div class="t g" style="left:224.9px;top:688.3px;width:264.7px;letter-spacing:0.14px;">MO - Isolant (pi2)</div>
<div class="t g" style="left:493.6px;top:688.3px;width:98.7px;letter-spacing:0.04px;">Couvreur</div>
<div class="t g" style="left:609.6px;top:688.3px;width:65.9px;text-align:right;letter-spacing:-0.17px;">3 474,00</div>
<div class="t g" style="left:683.7px;top:688.3px;width:34.9px;letter-spacing:0.2px;">pi2</div>
<div class="t g" style="left:718.3px;top:688.3px;width:45.3px;text-align:right;letter-spacing:-0.17px;">26,89</div>
<div class="t g" style="left:767.5px;top:688.3px;width:56.3px;text-align:right;letter-spacing:-0.17px;">0,00 %</div>
<div class="t g" style="left:827.7px;top:688.3px;width:64.8px;text-align:right;letter-spacing:-0.17px;">0,00</div>
<div class="t g" style="left:896.4px;top:688.3px;width:75.2px;text-align:right;letter-spacing:-0.17px;">26,89</div>
<div class="t g" style="left:975.5px;top:688.3px;width:51px;text-align:right;letter-spacing:-0.17px;">0,45 $</div>
<div class="t g" style="left:1034.7px;top:688.3px;width:38px;letter-spacing:0.2px;">pi2</div>
<div class="t g" style="left:1072.4px;top:688.3px;width:82.3px;text-align:right;letter-spacing:-0.17px;">1 559,62 $</div>
<div style="left:81.3px;top:709.6px;width:16.6px;height:17.6px;background:#f0f0f0;border:1px solid #a6a6a6;box-sizing:border-box;"></div>
<svg style="position:absolute;left:85.2px;top:714px;overflow:visible" width="9" height="9" viewBox="0 0 9 9"><rect x=".5" y=".5" width="8" height="8" fill="#fff" stroke="#8a93ad"/><path d="M2.200 4.500H6.800M4.500 2.200V6.800" stroke="#000" stroke-width="1.100"/></svg>
<div style="left:592.6px;top:709.6px;width:16.6px;height:17.6px;background:#f0f0f0;border:1px solid #a6a6a6;box-sizing:border-box;"></div>
<svg style="position:absolute;left:596.5px;top:714px;overflow:visible" width="9" height="9" viewBox="0 0 9 9"><rect x=".5" y=".5" width="8" height="8" fill="#fff" stroke="#8a93ad"/><path d="M2.200 4.500H6.800M4.500 2.200V6.800" stroke="#000" stroke-width="1.100"/></svg>
<div class="t g" style="left:103.2px;top:708.3px;width:43.7px;letter-spacing:-0.25px;">108374</div>
<div class="t g" style="left:150.9px;top:708.3px;width:70px;letter-spacing:-0.4px;">07T</div>
<div class="t g" style="left:224.9px;top:708.3px;width:264.7px;letter-spacing:0.14px;">MO - Pose Moulures Revêtement métallique (pi)</div>
<div class="t g" style="left:493.6px;top:708.3px;width:98.7px;letter-spacing:0.04px;">Charpentier Menuis</div>
<div class="t g" style="left:609.6px;top:708.3px;width:65.9px;text-align:right;letter-spacing:-0.17px;">684,72</div>
<div class="t g" style="left:683.7px;top:708.3px;width:34.9px;letter-spacing:0.2px;">pi</div>
<div class="t g" style="left:718.3px;top:708.3px;width:45.3px;text-align:right;letter-spacing:-0.17px;">27,39</div>
<div class="t g" style="left:767.5px;top:708.3px;width:56.3px;text-align:right;letter-spacing:-0.17px;">0,00 %</div>
<div class="t g" style="left:827.7px;top:708.3px;width:64.8px;text-align:right;letter-spacing:-0.17px;">0,00</div>
<div class="t g" style="left:896.4px;top:708.3px;width:75.2px;text-align:right;letter-spacing:-0.17px;">27,39</div>
<div class="t g" style="left:975.5px;top:708.3px;width:51px;text-align:right;letter-spacing:-0.17px;">2,32 $</div>
<div class="t g" style="left:1034.7px;top:708.3px;width:38px;letter-spacing:0.2px;">pi</div>
<div class="t g" style="left:1072.4px;top:708.3px;width:82.3px;text-align:right;letter-spacing:-0.17px;">1 588,62 $</div>
<div style="left:81.3px;top:729.6px;width:16.6px;height:17.6px;background:#f0f0f0;border:1px solid #a6a6a6;box-sizing:border-box;"></div>
<svg style="position:absolute;left:85.2px;top:734px;overflow:visible" width="9" height="9" viewBox="0 0 9 9"><rect x=".5" y=".5" width="8" height="8" fill="#fff" stroke="#8a93ad"/><path d="M2.200 4.500H6.800M4.500 2.200V6.800" stroke="#000" stroke-width="1.100"/></svg>
<div style="left:592.6px;top:729.6px;width:16.6px;height:17.6px;background:#f0f0f0;border:1px solid #a6a6a6;box-sizing:border-box;"></div>
<svg style="position:absolute;left:596.5px;top:734px;overflow:visible" width="9" height="9" viewBox="0 0 9 9"><rect x=".5" y=".5" width="8" height="8" fill="#fff" stroke="#8a93ad"/><path d="M2.200 4.500H6.800M4.500 2.200V6.800" stroke="#000" stroke-width="1.100"/></svg>
<div class="t g" style="left:103.2px;top:728.3px;width:43.7px;letter-spacing:-0.25px;">107939</div>
<div class="t g" style="left:150.9px;top:728.3px;width:70px;letter-spacing:-0.4px;">08T</div>
<div class="t g" style="left:224.9px;top:728.3px;width:264.7px;letter-spacing:0.14px;">MO - Pose Portes Intérieures (Unit)</div>
<div class="t g" style="left:493.6px;top:728.3px;width:98.7px;letter-spacing:0.04px;">Charpentier Menuis</div>
<div class="t g" style="left:609.6px;top:728.3px;width:65.9px;text-align:right;letter-spacing:-0.17px;">5,00</div>
<div class="t g" style="left:683.7px;top:728.3px;width:34.9px;letter-spacing:0.2px;">unit</div>
<div class="t g" style="left:718.3px;top:728.3px;width:45.3px;text-align:right;letter-spacing:-0.17px;">20,00</div>
<div class="t g" style="left:767.5px;top:728.3px;width:56.3px;text-align:right;letter-spacing:-0.17px;">0,00 %</div>
<div class="t g" style="left:827.7px;top:728.3px;width:64.8px;text-align:right;letter-spacing:-0.17px;">0,00</div>
<div class="t g" style="left:896.4px;top:728.3px;width:75.2px;text-align:right;letter-spacing:-0.17px;">20,00</div>
<div class="t g" style="left:975.5px;top:728.3px;width:51px;text-align:right;letter-spacing:-0.17px;">232,00 $</div>
<div class="t g" style="left:1034.7px;top:728.3px;width:38px;letter-spacing:0.2px;">unit</div>
<div class="t g" style="left:1072.4px;top:728.3px;width:82.3px;text-align:right;letter-spacing:-0.17px;">1 160,00 $</div>
<div style="left:81.3px;top:749.6px;width:16.6px;height:17.6px;background:#f0f0f0;border:1px solid #a6a6a6;box-sizing:border-box;"></div>
<svg style="position:absolute;left:85.2px;top:754px;overflow:visible" width="9" height="9" viewBox="0 0 9 9"><rect x=".5" y=".5" width="8" height="8" fill="#fff" stroke="#8a93ad"/><path d="M2.200 4.500H6.800M4.500 2.200V6.800" stroke="#000" stroke-width="1.100"/></svg>
<div style="left:592.6px;top:749.6px;width:16.6px;height:17.6px;background:#f0f0f0;border:1px solid #a6a6a6;box-sizing:border-box;"></div>
<svg style="position:absolute;left:596.5px;top:754px;overflow:visible" width="9" height="9" viewBox="0 0 9 9"><rect x=".5" y=".5" width="8" height="8" fill="#fff" stroke="#8a93ad"/><path d="M2.200 4.500H6.800M4.500 2.200V6.800" stroke="#000" stroke-width="1.100"/></svg>
<div class="t g" style="left:103.2px;top:748.3px;width:43.7px;letter-spacing:-0.25px;">104399</div>
<div class="t g" style="left:150.9px;top:748.3px;width:70px;letter-spacing:-0.4px;">06T</div>
<div class="t g" style="left:224.9px;top:748.3px;width:264.7px;letter-spacing:0.14px;">MO - Pose Mouluration Cadrage (pi)</div>
<div class="t g" style="left:493.6px;top:748.3px;width:98.7px;letter-spacing:0.04px;">Charpentier Menuis</div>
<div class="t g" style="left:609.6px;top:748.3px;width:65.9px;text-align:right;letter-spacing:-0.17px;">399,78</div>
<div class="t g" style="left:683.7px;top:748.3px;width:34.9px;letter-spacing:0.2px;">pi</div>
<div class="t g" style="left:718.3px;top:748.3px;width:45.3px;text-align:right;letter-spacing:-0.17px;">16,66</div>
<div class="t g" style="left:767.5px;top:748.3px;width:56.3px;text-align:right;letter-spacing:-0.17px;">0,00 %</div>
<div class="t g" style="left:827.7px;top:748.3px;width:64.8px;text-align:right;letter-spacing:-0.17px;">0,00</div>
<div class="t g" style="left:896.4px;top:748.3px;width:75.2px;text-align:right;letter-spacing:-0.17px;">16,66</div>
<div class="t g" style="left:975.5px;top:748.3px;width:51px;text-align:right;letter-spacing:-0.17px;">2,42 $</div>
<div class="t g" style="left:1034.7px;top:748.3px;width:38px;letter-spacing:0.2px;">pi</div>
<div class="t g" style="left:1072.4px;top:748.3px;width:82.3px;text-align:right;letter-spacing:-0.17px;">966,28 $</div>
<div style="left:81.3px;top:769.6px;width:16.6px;height:17.6px;background:#f0f0f0;border:1px solid #a6a6a6;box-sizing:border-box;"></div>
<svg style="position:absolute;left:85.2px;top:774px;overflow:visible" width="9" height="9" viewBox="0 0 9 9"><rect x=".5" y=".5" width="8" height="8" fill="#fff" stroke="#8a93ad"/><path d="M2.200 4.500H6.800M4.500 2.200V6.800" stroke="#000" stroke-width="1.100"/></svg>
<div style="left:592.6px;top:769.6px;width:16.6px;height:17.6px;background:#f0f0f0;border:1px solid #a6a6a6;box-sizing:border-box;"></div>
<svg style="position:absolute;left:596.5px;top:774px;overflow:visible" width="9" height="9" viewBox="0 0 9 9"><rect x=".5" y=".5" width="8" height="8" fill="#fff" stroke="#8a93ad"/><path d="M2.200 4.500H6.800M4.500 2.200V6.800" stroke="#000" stroke-width="1.100"/></svg>
<div class="t g" style="left:103.2px;top:768.3px;width:43.7px;letter-spacing:-0.25px;">102256</div>
<div class="t g" style="left:150.9px;top:768.3px;width:70px;letter-spacing:-0.4px;">07T</div>
<div class="t g" style="left:224.9px;top:768.3px;width:264.7px;letter-spacing:0.14px;">MO - Pose Isolant en Natte Cloison (pi2)</div>
<div class="t g" style="left:493.6px;top:768.3px;width:98.7px;letter-spacing:0.04px;">Charpentier Menuis</div>
<div class="t g" style="left:609.6px;top:768.3px;width:65.9px;text-align:right;letter-spacing:-0.17px;">3 167,00</div>
<div class="t g" style="left:683.7px;top:768.3px;width:34.9px;letter-spacing:0.2px;">pi2</div>
<div class="t g" style="left:718.3px;top:768.3px;width:45.3px;text-align:right;letter-spacing:-0.17px;">15,84</div>
<div class="t g" style="left:767.5px;top:768.3px;width:56.3px;text-align:right;letter-spacing:-0.17px;">0,00 %</div>
<div class="t g" style="left:827.7px;top:768.3px;width:64.8px;text-align:right;letter-spacing:-0.17px;">0,00</div>
<div class="t g" style="left:896.4px;top:768.3px;width:75.2px;text-align:right;letter-spacing:-0.17px;">15,84</div>
<div class="t g" style="left:975.5px;top:768.3px;width:51px;text-align:right;letter-spacing:-0.17px;">0,29 $</div>
<div class="t g" style="left:1034.7px;top:768.3px;width:38px;letter-spacing:0.2px;">pi2</div>
<div class="t g" style="left:1072.4px;top:768.3px;width:82.3px;text-align:right;letter-spacing:-0.17px;">918,72 $</div>
<div style="left:81.3px;top:789.6px;width:16.6px;height:17.6px;background:#f0f0f0;border:1px solid #a6a6a6;box-sizing:border-box;"></div>
<svg style="position:absolute;left:85.2px;top:794px;overflow:visible" width="9" height="9" viewBox="0 0 9 9"><rect x=".5" y=".5" width="8" height="8" fill="#fff" stroke="#8a93ad"/><path d="M2.200 4.500H6.800M4.500 2.200V6.800" stroke="#000" stroke-width="1.100"/></svg>
<div style="left:592.6px;top:789.6px;width:16.6px;height:17.6px;background:#f0f0f0;border:1px solid #a6a6a6;box-sizing:border-box;"></div>
<svg style="position:absolute;left:596.5px;top:794px;overflow:visible" width="9" height="9" viewBox="0 0 9 9"><rect x=".5" y=".5" width="8" height="8" fill="#fff" stroke="#8a93ad"/><path d="M2.200 4.500H6.800M4.500 2.200V6.800" stroke="#000" stroke-width="1.100"/></svg>
<div class="t g" style="left:103.2px;top:788.3px;width:43.7px;letter-spacing:-0.25px;">103642</div>
<div class="t g" style="left:150.9px;top:788.3px;width:70px;letter-spacing:-0.4px;">03T</div>
<div class="t g" style="left:224.9px;top:788.3px;width:264.7px;letter-spacing:0.14px;">MO - Pose Treillis Métallique Dalle (pi2)</div>
<div class="t g" style="left:493.6px;top:788.3px;width:98.7px;letter-spacing:0.04px;">Charpentier Menuis</div>
<div class="t g" style="left:609.6px;top:788.3px;width:65.9px;text-align:right;letter-spacing:-0.17px;">3 300,00</div>
<div class="t g" style="left:683.7px;top:788.3px;width:34.9px;letter-spacing:0.2px;">pi2</div>
<div class="t g" style="left:718.3px;top:788.3px;width:45.3px;text-align:right;letter-spacing:-0.17px;">15,03</div>
<div class="t g" style="left:767.5px;top:788.3px;width:56.3px;text-align:right;letter-spacing:-0.17px;">0,00 %</div>
<div class="t g" style="left:827.7px;top:788.3px;width:64.8px;text-align:right;letter-spacing:-0.17px;">0,00</div>
<div class="t g" style="left:896.4px;top:788.3px;width:75.2px;text-align:right;letter-spacing:-0.17px;">15,03</div>
<div class="t g" style="left:975.5px;top:788.3px;width:51px;text-align:right;letter-spacing:-0.17px;">0,26 $</div>
<div class="t g" style="left:1034.7px;top:788.3px;width:38px;letter-spacing:0.2px;">pi2</div>
<div class="t g" style="left:1072.4px;top:788.3px;width:82.3px;text-align:right;letter-spacing:-0.17px;">871,74 $</div>
<div style="left:81.3px;top:809.6px;width:16.6px;height:17.6px;background:#f0f0f0;border:1px solid #a6a6a6;box-sizing:border-box;"></div>
<svg style="position:absolute;left:85.2px;top:814px;overflow:visible" width="9" height="9" viewBox="0 0 9 9"><rect x=".5" y=".5" width="8" height="8" fill="#fff" stroke="#8a93ad"/><path d="M2.200 4.500H6.800M4.500 2.200V6.800" stroke="#000" stroke-width="1.100"/></svg>
<div style="left:592.6px;top:809.6px;width:16.6px;height:17.6px;background:#f0f0f0;border:1px solid #a6a6a6;box-sizing:border-box;"></div>
<svg style="position:absolute;left:596.5px;top:814px;overflow:visible" width="9" height="9" viewBox="0 0 9 9"><rect x=".5" y=".5" width="8" height="8" fill="#fff" stroke="#8a93ad"/><path d="M2.200 4.500H6.800M4.500 2.200V6.800" stroke="#000" stroke-width="1.100"/></svg>
<div class="t g" style="left:103.2px;top:808.3px;width:43.7px;letter-spacing:-0.25px;">105554</div>
<div class="t g" style="left:150.9px;top:808.3px;width:70px;letter-spacing:-0.4px;">08T</div>
<div class="t g" style="left:224.9px;top:808.3px;width:264.7px;letter-spacing:0.14px;">MO - Pose Portes Extérieures (Unit)</div>
<div class="t g" style="left:493.6px;top:808.3px;width:98.7px;letter-spacing:0.04px;">Charpentier Menuis</div>
<div class="t g" style="left:609.6px;top:808.3px;width:65.9px;text-align:right;letter-spacing:-0.17px;">3,00</div>
<div class="t g" style="left:683.7px;top:808.3px;width:34.9px;letter-spacing:0.2px;">unit</div>
<div class="t g" style="left:718.3px;top:808.3px;width:45.3px;text-align:right;letter-spacing:-0.17px;">15,00</div>
<div class="t g" style="left:767.5px;top:808.3px;width:56.3px;text-align:right;letter-spacing:-0.17px;">0,00 %</div>
<div class="t g" style="left:827.7px;top:808.3px;width:64.8px;text-align:right;letter-spacing:-0.17px;">0,00</div>
<div class="t g" style="left:896.4px;top:808.3px;width:75.2px;text-align:right;letter-spacing:-0.17px;">15,00</div>
<div class="t g" style="left:975.5px;top:808.3px;width:51px;text-align:right;letter-spacing:-0.17px;">290,00 $</div>
<div class="t g" style="left:1034.7px;top:808.3px;width:38px;letter-spacing:0.2px;">unit</div>
<div class="t g" style="left:1072.4px;top:808.3px;width:82.3px;text-align:right;letter-spacing:-0.17px;">870,00 $</div>
<div style="left:81.3px;top:829.6px;width:16.6px;height:17.6px;background:#f0f0f0;border:1px solid #a6a6a6;box-sizing:border-box;"></div>
<svg style="position:absolute;left:85.2px;top:834px;overflow:visible" width="9" height="9" viewBox="0 0 9 9"><rect x=".5" y=".5" width="8" height="8" fill="#fff" stroke="#8a93ad"/><path d="M2.200 4.500H6.800M4.500 2.200V6.800" stroke="#000" stroke-width="1.100"/></svg>
<div style="left:592.6px;top:829.6px;width:16.6px;height:17.6px;background:#f0f0f0;border:1px solid #a6a6a6;box-sizing:border-box;"></div>
<svg style="position:absolute;left:596.5px;top:834px;overflow:visible" width="9" height="9" viewBox="0 0 9 9"><rect x=".5" y=".5" width="8" height="8" fill="#fff" stroke="#8a93ad"/><path d="M2.200 4.500H6.800M4.500 2.200V6.800" stroke="#000" stroke-width="1.100"/></svg>
<div class="t g" style="left:103.2px;top:828.3px;width:43.7px;letter-spacing:-0.25px;">102252</div>
<div class="t g" style="left:150.9px;top:828.3px;width:70px;letter-spacing:-0.4px;">06T</div>
<div class="t g" style="left:224.9px;top:828.3px;width:264.7px;letter-spacing:0.14px;">MO - Pose Latte Murale (pi)</div>
<div class="t g" style="left:493.6px;top:828.3px;width:98.7px;letter-spacing:0.04px;">Charpentier Menuis</div>
<div class="t g" style="left:609.6px;top:828.3px;width:65.9px;text-align:right;letter-spacing:-0.17px;">306,89</div>
<div class="t g" style="left:683.7px;top:828.3px;width:34.9px;letter-spacing:0.2px;">pi</div>
<div class="t g" style="left:718.3px;top:828.3px;width:45.3px;text-align:right;letter-spacing:-0.17px;">12,28</div>
<div class="t g" style="left:767.5px;top:828.3px;width:56.3px;text-align:right;letter-spacing:-0.17px;">0,00 %</div>
<div class="t g" style="left:827.7px;top:828.3px;width:64.8px;text-align:right;letter-spacing:-0.17px;">0,00</div>
<div class="t g" style="left:896.4px;top:828.3px;width:75.2px;text-align:right;letter-spacing:-0.17px;">12,28</div>
<div class="t g" style="left:975.5px;top:828.3px;width:51px;text-align:right;letter-spacing:-0.17px;">2,32 $</div>
<div class="t g" style="left:1034.7px;top:828.3px;width:38px;letter-spacing:0.2px;">pi</div>
<div class="t g" style="left:1072.4px;top:828.3px;width:82.3px;text-align:right;letter-spacing:-0.17px;">712,24 $</div>
<div style="left:81.3px;top:849.6px;width:16.6px;height:17.6px;background:#f0f0f0;border:1px solid #a6a6a6;box-sizing:border-box;"></div>
<svg style="position:absolute;left:85.2px;top:854px;overflow:visible" width="9" height="9" viewBox="0 0 9 9"><rect x=".5" y=".5" width="8" height="8" fill="#fff" stroke="#8a93ad"/><path d="M2.200 4.500H6.800M4.500 2.200V6.800" stroke="#000" stroke-width="1.100"/></svg>
<div style="left:592.6px;top:849.6px;width:16.6px;height:17.6px;background:#f0f0f0;border:1px solid #a6a6a6;box-sizing:border-box;"></div>
<svg style="position:absolute;left:596.5px;top:854px;overflow:visible" width="9" height="9" viewBox="0 0 9 9"><rect x=".5" y=".5" width="8" height="8" fill="#fff" stroke="#8a93ad"/><path d="M2.200 4.500H6.800M4.500 2.200V6.800" stroke="#000" stroke-width="1.100"/></svg>
<div class="t g" style="left:103.2px;top:848.3px;width:43.7px;letter-spacing:-0.25px;">107988</div>
<div class="t g" style="left:150.9px;top:848.3px;width:70px;letter-spacing:-0.4px;">06T</div>
<div class="t g" style="left:224.9px;top:848.3px;width:264.7px;letter-spacing:0.14px;">MO - PoseLinteaux (Unit)</div>
<div class="t g" style="left:493.6px;top:848.3px;width:98.7px;letter-spacing:0.04px;">Charpentier Menuis</div>
<div class="t g" style="left:609.6px;top:848.3px;width:65.9px;text-align:right;letter-spacing:-0.17px;">12,00</div>
<div class="t g" style="left:683.7px;top:848.3px;width:34.9px;letter-spacing:0.2px;">unit</div>
<div class="t g" style="left:718.3px;top:848.3px;width:45.3px;text-align:right;letter-spacing:-0.17px;">12,00</div>
<div class="t g" style="left:767.5px;top:848.3px;width:56.3px;text-align:right;letter-spacing:-0.17px;">0,00 %</div>
<div class="t g" style="left:827.7px;top:848.3px;width:64.8px;text-align:right;letter-spacing:-0.17px;">0,00</div>
<div class="t g" style="left:896.4px;top:848.3px;width:75.2px;text-align:right;letter-spacing:-0.17px;">12,00</div>
<div class="t g" style="left:975.5px;top:848.3px;width:51px;text-align:right;letter-spacing:-0.17px;">58,00 $</div>
<div class="t g" style="left:1034.7px;top:848.3px;width:38px;letter-spacing:0.2px;">unit</div>
<div class="t g" style="left:1072.4px;top:848.3px;width:82.3px;text-align:right;letter-spacing:-0.17px;">696,00 $</div>
<div style="left:81.3px;top:869.6px;width:16.6px;height:17.6px;background:#f0f0f0;border:1px solid #a6a6a6;box-sizing:border-box;"></div>
<svg style="position:absolute;left:85.2px;top:874px;overflow:visible" width="9" height="9" viewBox="0 0 9 9"><rect x=".5" y=".5" width="8" height="8" fill="#fff" stroke="#8a93ad"/><path d="M2.200 4.500H6.800M4.500 2.200V6.800" stroke="#000" stroke-width="1.100"/></svg>
<div style="left:592.6px;top:869.6px;width:16.6px;height:17.6px;background:#f0f0f0;border:1px solid #a6a6a6;box-sizing:border-box;"></div>
<svg style="position:absolute;left:596.5px;top:874px;overflow:visible" width="9" height="9" viewBox="0 0 9 9"><rect x=".5" y=".5" width="8" height="8" fill="#fff" stroke="#8a93ad"/><path d="M2.200 4.500H6.800M4.500 2.200V6.800" stroke="#000" stroke-width="1.100"/></svg>
<div class="t g" style="left:103.2px;top:868.3px;width:43.7px;letter-spacing:-0.25px;">108421</div>
<div class="t g" style="left:150.9px;top:868.3px;width:70px;letter-spacing:-0.4px;">06T</div>
<div class="t g" style="left:224.9px;top:868.3px;width:264.7px;letter-spacing:0.14px;">MO - Construction Contour de fenêtre et Membrane</div>
<div class="t g" style="left:493.6px;top:868.3px;width:98.7px;letter-spacing:0.04px;">Charpentier Menuis</div>
<div class="t g" style="left:609.6px;top:868.3px;width:65.9px;text-align:right;letter-spacing:-0.17px;">315,44</div>
<div class="t g" style="left:683.7px;top:868.3px;width:34.9px;letter-spacing:0.2px;">pi</div>
<div class="t g" style="left:718.3px;top:868.3px;width:45.3px;text-align:right;letter-spacing:-0.17px;">11,27</div>
<div class="t g" style="left:767.5px;top:868.3px;width:56.3px;text-align:right;letter-spacing:-0.17px;">0,00 %</div>
<div class="t g" style="left:827.7px;top:868.3px;width:64.8px;text-align:right;letter-spacing:-0.17px;">0,00</div>
<div class="t g" style="left:896.4px;top:868.3px;width:75.2px;text-align:right;letter-spacing:-0.17px;">11,27</div>
<div class="t g" style="left:975.5px;top:868.3px;width:51px;text-align:right;letter-spacing:-0.17px;">2,07 $</div>
<div class="t g" style="left:1034.7px;top:868.3px;width:38px;letter-spacing:0.2px;">pi</div>
<div class="t g" style="left:1072.4px;top:868.3px;width:82.3px;text-align:right;letter-spacing:-0.17px;">653,66 $</div>
<div style="left:81.3px;top:889.6px;width:16.6px;height:17.6px;background:#f0f0f0;border:1px solid #a6a6a6;box-sizing:border-box;"></div>
<svg style="position:absolute;left:85.2px;top:894px;overflow:visible" width="9" height="9" viewBox="0 0 9 9"><rect x=".5" y=".5" width="8" height="8" fill="#fff" stroke="#8a93ad"/><path d="M2.200 4.500H6.800M4.500 2.200V6.800" stroke="#000" stroke-width="1.100"/></svg>
<div style="left:592.6px;top:889.6px;width:16.6px;height:17.6px;background:#f0f0f0;border:1px solid #a6a6a6;box-sizing:border-box;"></div>
<svg style="position:absolute;left:596.5px;top:894px;overflow:visible" width="9" height="9" viewBox="0 0 9 9"><rect x=".5" y=".5" width="8" height="8" fill="#fff" stroke="#8a93ad"/><path d="M2.200 4.500H6.800M4.500 2.200V6.800" stroke="#000" stroke-width="1.100"/></svg>
<div class="t g" style="left:103.2px;top:888.3px;width:43.7px;letter-spacing:-0.25px;">108030</div>
<div class="t g" style="left:150.9px;top:888.3px;width:70px;letter-spacing:-0.4px;">07T</div>
<div class="t g" style="left:224.9px;top:888.3px;width:264.7px;letter-spacing:0.14px;">MO - Pose Membrane Liquide (pi2)</div>
<div class="t g" style="left:493.6px;top:888.3px;width:98.7px;letter-spacing:0.04px;">Charpentier Menuis</div>
<div class="t g" style="left:609.6px;top:888.3px;width:65.9px;text-align:right;letter-spacing:-0.17px;">1 855,00</div>
<div class="t g" style="left:683.7px;top:888.3px;width:34.9px;letter-spacing:0.2px;">pi2</div>
<div class="t g" style="left:718.3px;top:888.3px;width:45.3px;text-align:right;letter-spacing:-0.17px;">11,13</div>
<div class="t g" style="left:767.5px;top:888.3px;width:56.3px;text-align:right;letter-spacing:-0.17px;">0,00 %</div>
<div class="t g" style="left:827.7px;top:888.3px;width:64.8px;text-align:right;letter-spacing:-0.17px;">0,00</div>
<div class="t g" style="left:896.4px;top:888.3px;width:75.2px;text-align:right;letter-spacing:-0.17px;">11,13</div>
<div class="t g" style="left:975.5px;top:888.3px;width:51px;text-align:right;letter-spacing:-0.17px;">0,35 $</div>
<div class="t g" style="left:1034.7px;top:888.3px;width:38px;letter-spacing:0.2px;">pi2</div>
<div class="t g" style="left:1072.4px;top:888.3px;width:82.3px;text-align:right;letter-spacing:-0.17px;">645,54 $</div>
<div style="left:81.3px;top:909.6px;width:16.6px;height:17.6px;background:#f0f0f0;border:1px solid #a6a6a6;box-sizing:border-box;"></div>
<svg style="position:absolute;left:85.2px;top:914px;overflow:visible" width="9" height="9" viewBox="0 0 9 9"><rect x=".5" y=".5" width="8" height="8" fill="#fff" stroke="#8a93ad"/><path d="M2.200 4.500H6.800M4.500 2.200V6.800" stroke="#000" stroke-width="1.100"/></svg>
<div style="left:592.6px;top:909.6px;width:16.6px;height:17.6px;background:#f0f0f0;border:1px solid #a6a6a6;box-sizing:border-box;"></div>
<svg style="position:absolute;left:596.5px;top:914px;overflow:visible" width="9" height="9" viewBox="0 0 9 9"><rect x=".5" y=".5" width="8" height="8" fill="#fff" stroke="#8a93ad"/><path d="M2.200 4.500H6.800M4.500 2.200V6.800" stroke="#000" stroke-width="1.100"/></svg>
<div class="t g" style="left:103.2px;top:908.3px;width:43.7px;letter-spacing:-0.25px;">102402</div>
<div class="t g" style="left:150.9px;top:908.3px;width:70px;letter-spacing:-0.4px;">03T</div>
<div class="t g" style="left:224.9px;top:908.3px;width:264.7px;letter-spacing:0.14px;">MO - Coulée de Béton (m3)</div>
<div class="t g" style="left:493.6px;top:908.3px;width:98.7px;letter-spacing:0.04px;">Charpentier Menuis</div>
<div class="t g" style="left:609.6px;top:908.3px;width:65.9px;text-align:right;letter-spacing:-0.17px;">65,01</div>
<div class="t g" style="left:683.7px;top:908.3px;width:34.9px;letter-spacing:0.2px;">m3</div>
<div class="t g" style="left:718.3px;top:908.3px;width:45.3px;text-align:right;letter-spacing:-0.17px;">10,84</div>
<div class="t g" style="left:767.5px;top:908.3px;width:56.3px;text-align:right;letter-spacing:-0.17px;">0,00 %</div>
<div class="t g" style="left:827.7px;top:908.3px;width:64.8px;text-align:right;letter-spacing:-0.17px;">0,00</div>
<div class="t g" style="left:896.4px;top:908.3px;width:75.2px;text-align:right;letter-spacing:-0.17px;">10,84</div>
<div class="t g" style="left:975.5px;top:908.3px;width:51px;text-align:right;letter-spacing:-0.17px;">9,67 $</div>
<div class="t g" style="left:1034.7px;top:908.3px;width:38px;letter-spacing:0.2px;">m3</div>
<div class="t g" style="left:1072.4px;top:908.3px;width:82.3px;text-align:right;letter-spacing:-0.17px;">628,72 $</div>
<div style="left:81.3px;top:929.6px;width:16.6px;height:17.6px;background:#f0f0f0;border:1px solid #a6a6a6;box-sizing:border-box;"></div>
<svg style="position:absolute;left:85.2px;top:934px;overflow:visible" width="9" height="9" viewBox="0 0 9 9"><rect x=".5" y=".5" width="8" height="8" fill="#fff" stroke="#8a93ad"/><path d="M2.200 4.500H6.800M4.500 2.200V6.800" stroke="#000" stroke-width="1.100"/></svg>
<div style="left:592.6px;top:929.6px;width:16.6px;height:17.6px;background:#f0f0f0;border:1px solid #a6a6a6;box-sizing:border-box;"></div>
<svg style="position:absolute;left:596.5px;top:934px;overflow:visible" width="9" height="9" viewBox="0 0 9 9"><rect x=".5" y=".5" width="8" height="8" fill="#fff" stroke="#8a93ad"/><path d="M2.200 4.500H6.800M4.500 2.200V6.800" stroke="#000" stroke-width="1.100"/></svg>
<div class="t g" style="left:103.2px;top:928.3px;width:43.7px;letter-spacing:-0.25px;">105756</div>
<div class="t g" style="left:150.9px;top:928.3px;width:70px;letter-spacing:-0.4px;">07T</div>
<div class="t g" style="left:224.9px;top:928.3px;width:264.7px;letter-spacing:0.14px;">MO - Évent et accessoires de toit</div>
<div class="t g" style="left:493.6px;top:928.3px;width:98.7px;letter-spacing:0.04px;">Charpentier Menuis</div>
<div class="t g" style="left:609.6px;top:928.3px;width:65.9px;text-align:right;letter-spacing:-0.17px;">9,00</div>
<div class="t g" style="left:683.7px;top:928.3px;width:34.9px;letter-spacing:0.2px;">unit</div>
<div class="t g" style="left:718.3px;top:928.3px;width:45.3px;text-align:right;letter-spacing:-0.17px;">9,00</div>
<div class="t g" style="left:767.5px;top:928.3px;width:56.3px;text-align:right;letter-spacing:-0.17px;">0,00 %</div>
<div class="t g" style="left:827.7px;top:928.3px;width:64.8px;text-align:right;letter-spacing:-0.17px;">0,00</div>
<div class="t g" style="left:896.4px;top:928.3px;width:75.2px;text-align:right;letter-spacing:-0.17px;">9,00</div>
<div class="t g" style="left:975.5px;top:928.3px;width:51px;text-align:right;letter-spacing:-0.17px;">58,00 $</div>
<div class="t g" style="left:1034.7px;top:928.3px;width:38px;letter-spacing:0.2px;">unit</div>
<div class="t g" style="left:1072.4px;top:928.3px;width:82.3px;text-align:right;letter-spacing:-0.17px;">522,00 $</div>
<div style="left:81.3px;top:949.6px;width:16.6px;height:17.6px;background:#f0f0f0;border:1px solid #a6a6a6;box-sizing:border-box;"></div>
<svg style="position:absolute;left:85.2px;top:954px;overflow:visible" width="9" height="9" viewBox="0 0 9 9"><rect x=".5" y=".5" width="8" height="8" fill="#fff" stroke="#8a93ad"/><path d="M2.200 4.500H6.800M4.500 2.200V6.800" stroke="#000" stroke-width="1.100"/></svg>
<div style="left:592.6px;top:949.6px;width:16.6px;height:17.6px;background:#f0f0f0;border:1px solid #a6a6a6;box-sizing:border-box;"></div>
<svg style="position:absolute;left:596.5px;top:954px;overflow:visible" width="9" height="9" viewBox="0 0 9 9"><rect x=".5" y=".5" width="8" height="8" fill="#fff" stroke="#8a93ad"/><path d="M2.200 4.500H6.800M4.500 2.200V6.800" stroke="#000" stroke-width="1.100"/></svg>
<div class="t g" style="left:103.2px;top:948.3px;width:43.7px;letter-spacing:-0.25px;">108404</div>
<div class="t g" style="left:150.9px;top:948.3px;width:70px;letter-spacing:-0.4px;">06T</div>
<div class="t g" style="left:224.9px;top:948.3px;width:264.7px;letter-spacing:0.14px;">MO - Pose Contre-plaqué de parapet (pi2)</div>
<div class="t g" style="left:493.6px;top:948.3px;width:98.7px;letter-spacing:0.04px;">Charpentier Menuis</div>
<div class="t g" style="left:609.6px;top:948.3px;width:65.9px;text-align:right;letter-spacing:-0.17px;">822,00</div>
<div class="t g" style="left:683.7px;top:948.3px;width:34.9px;letter-spacing:0.2px;">pi2</div>
<div class="t g" style="left:718.3px;top:948.3px;width:45.3px;text-align:right;letter-spacing:-0.17px;">8,56</div>
<div class="t g" style="left:767.5px;top:948.3px;width:56.3px;text-align:right;letter-spacing:-0.17px;">0,00 %</div>
<div class="t g" style="left:827.7px;top:948.3px;width:64.8px;text-align:right;letter-spacing:-0.17px;">0,00</div>
<div class="t g" style="left:896.4px;top:948.3px;width:75.2px;text-align:right;letter-spacing:-0.17px;">8,56</div>
<div class="t g" style="left:975.5px;top:948.3px;width:51px;text-align:right;letter-spacing:-0.17px;">0,60 $</div>
<div class="t g" style="left:1034.7px;top:948.3px;width:38px;letter-spacing:0.2px;">pi2</div>
<div class="t g" style="left:1072.4px;top:948.3px;width:82.3px;text-align:right;letter-spacing:-0.17px;">496,48 $</div>
<div style="left:81.3px;top:969.6px;width:16.6px;height:17.6px;background:#f0f0f0;border:1px solid #a6a6a6;box-sizing:border-box;"></div>
<svg style="position:absolute;left:85.2px;top:974px;overflow:visible" width="9" height="9" viewBox="0 0 9 9"><rect x=".5" y=".5" width="8" height="8" fill="#fff" stroke="#8a93ad"/><path d="M2.200 4.500H6.800M4.500 2.200V6.800" stroke="#000" stroke-width="1.100"/></svg>
<div style="left:592.6px;top:969.6px;width:16.6px;height:17.6px;background:#f0f0f0;border:1px solid #a6a6a6;box-sizing:border-box;"></div>
<svg style="position:absolute;left:596.5px;top:974px;overflow:visible" width="9" height="9" viewBox="0 0 9 9"><rect x=".5" y=".5" width="8" height="8" fill="#fff" stroke="#8a93ad"/><path d="M2.200 4.500H6.800M4.500 2.200V6.800" stroke="#000" stroke-width="1.100"/></svg>
<div class="t g" style="left:103.2px;top:968.3px;width:43.7px;letter-spacing:-0.25px;">105556</div>
<div class="t g" style="left:150.9px;top:968.3px;width:70px;letter-spacing:-0.4px;">08T</div>
<div class="t g" style="left:224.9px;top:968.3px;width:264.7px;letter-spacing:0.14px;">MO - Pose Fenêtre extérieures et isolation (Unit)</div>
<div class="t g" style="left:493.6px;top:968.3px;width:98.7px;letter-spacing:0.04px;">Charpentier Menuis</div>
<div class="t g" style="left:609.6px;top:968.3px;width:65.9px;text-align:right;letter-spacing:-0.17px;">4,00</div>
<div class="t g" style="left:683.7px;top:968.3px;width:34.9px;letter-spacing:0.2px;">unit</div>
<div class="t g" style="left:718.3px;top:968.3px;width:45.3px;text-align:right;letter-spacing:-0.17px;">4,00</div>
<div class="t g" style="left:767.5px;top:968.3px;width:56.3px;text-align:right;letter-spacing:-0.17px;">100,00 %</div>
<div class="t g" style="left:827.7px;top:968.3px;width:64.8px;text-align:right;letter-spacing:-0.17px;">4,00</div>
<div class="t g" style="left:896.4px;top:968.3px;width:75.2px;text-align:right;letter-spacing:-0.17px;">8,00</div>
<div class="t g" style="left:975.5px;top:968.3px;width:51px;text-align:right;letter-spacing:-0.17px;">116,00 $</div>
<div class="t g" style="left:1034.7px;top:968.3px;width:38px;letter-spacing:0.2px;">unit</div>
<div class="t g" style="left:1072.4px;top:968.3px;width:82.3px;text-align:right;letter-spacing:-0.17px;">464,00 $</div>
<div style="left:81.3px;top:989.6px;width:16.6px;height:17.6px;background:#f0f0f0;border:1px solid #a6a6a6;box-sizing:border-box;"></div>
<svg style="position:absolute;left:85.2px;top:994px;overflow:visible" width="9" height="9" viewBox="0 0 9 9"><rect x=".5" y=".5" width="8" height="8" fill="#fff" stroke="#8a93ad"/><path d="M2.200 4.500H6.800M4.500 2.200V6.800" stroke="#000" stroke-width="1.100"/></svg>
<div style="left:592.6px;top:989.6px;width:16.6px;height:17.6px;background:#f0f0f0;border:1px solid #a6a6a6;box-sizing:border-box;"></div>
<svg style="position:absolute;left:596.5px;top:994px;overflow:visible" width="9" height="9" viewBox="0 0 9 9"><rect x=".5" y=".5" width="8" height="8" fill="#fff" stroke="#8a93ad"/><path d="M2.200 4.500H6.800M4.500 2.200V6.800" stroke="#000" stroke-width="1.100"/></svg>
<div class="t g" style="left:103.2px;top:988.3px;width:43.7px;letter-spacing:-0.25px;">108161</div>
<div class="t g" style="left:150.9px;top:988.3px;width:70px;letter-spacing:-0.4px;">06T</div>
<div class="t g" style="left:224.9px;top:988.3px;width:264.7px;letter-spacing:0.14px;">MO - Construction Ossature palier. bois  (pi2)</div>
<div class="t g" style="left:493.6px;top:988.3px;width:98.7px;letter-spacing:0.04px;">Charpentier Menuis</div>
<div class="t g" style="left:609.6px;top:988.3px;width:65.9px;text-align:right;letter-spacing:-0.17px;">48,00</div>
<div class="t g" style="left:683.7px;top:988.3px;width:34.9px;letter-spacing:0.2px;">pi2</div>
<div class="t g" style="left:718.3px;top:988.3px;width:45.3px;text-align:right;letter-spacing:-0.17px;">6,40</div>
<div class="t g" style="left:767.5px;top:988.3px;width:56.3px;text-align:right;letter-spacing:-0.17px;">0,00 %</div>
<div class="t g" style="left:827.7px;top:988.3px;width:64.8px;text-align:right;letter-spacing:-0.17px;">0,00</div>
<div class="t g" style="left:896.4px;top:988.3px;width:75.2px;text-align:right;letter-spacing:-0.17px;">6,40</div>
<div class="t g" style="left:975.5px;top:988.3px;width:51px;text-align:right;letter-spacing:-0.17px;">7,73 $</div>
<div class="t g" style="left:1034.7px;top:988.3px;width:38px;letter-spacing:0.2px;">pi2</div>
<div class="t g" style="left:1072.4px;top:988.3px;width:82.3px;text-align:right;letter-spacing:-0.17px;">371,20 $</div>
<div style="left:81.3px;top:1009.6px;width:16.6px;height:17.6px;background:#f0f0f0;border:1px solid #a6a6a6;box-sizing:border-box;"></div>
<svg style="position:absolute;left:85.2px;top:1014px;overflow:visible" width="9" height="9" viewBox="0 0 9 9"><rect x=".5" y=".5" width="8" height="8" fill="#fff" stroke="#8a93ad"/><path d="M2.200 4.500H6.800M4.500 2.200V6.800" stroke="#000" stroke-width="1.100"/></svg>
<div style="left:592.6px;top:1009.6px;width:16.6px;height:17.6px;background:#f0f0f0;border:1px solid #a6a6a6;box-sizing:border-box;"></div>
<svg style="position:absolute;left:596.5px;top:1014px;overflow:visible" width="9" height="9" viewBox="0 0 9 9"><rect x=".5" y=".5" width="8" height="8" fill="#fff" stroke="#8a93ad"/><path d="M2.200 4.500H6.800M4.500 2.200V6.800" stroke="#000" stroke-width="1.100"/></svg>
<div class="t g" style="left:103.2px;top:1008.3px;width:43.7px;letter-spacing:-0.25px;">102368</div>
<div class="t g" style="left:150.9px;top:1008.3px;width:70px;letter-spacing:-0.4px;">07T</div>
<div class="t g" style="left:224.9px;top:1008.3px;width:264.7px;letter-spacing:0.14px;">MO - Pose Isolant Pare-Vapeur Mural (pi2)</div>
<div class="t g" style="left:493.6px;top:1008.3px;width:98.7px;letter-spacing:0.04px;">Charpentier Menuis</div>
<div class="t g" style="left:609.6px;top:1008.3px;width:65.9px;text-align:right;letter-spacing:-0.17px;">3 164,00</div>
<div class="t g" style="left:683.7px;top:1008.3px;width:34.9px;letter-spacing:0.2px;">pi2</div>
<div class="t g" style="left:718.3px;top:1008.3px;width:45.3px;text-align:right;letter-spacing:-0.17px;">6,33</div>
<div class="t g" style="left:767.5px;top:1008.3px;width:56.3px;text-align:right;letter-spacing:-0.17px;">0,00 %</div>
<div class="t g" style="left:827.7px;top:1008.3px;width:64.8px;text-align:right;letter-spacing:-0.17px;">0,00</div>
<div class="t g" style="left:896.4px;top:1008.3px;width:75.2px;text-align:right;letter-spacing:-0.17px;">6,33</div>
<div class="t g" style="left:975.5px;top:1008.3px;width:51px;text-align:right;letter-spacing:-0.17px;">0,12 $</div>
<div class="t g" style="left:1034.7px;top:1008.3px;width:38px;letter-spacing:0.2px;">pi2</div>
<div class="t g" style="left:1072.4px;top:1008.3px;width:82.3px;text-align:right;letter-spacing:-0.17px;">367,14 $</div>
<div style="left:81.3px;top:1029.6px;width:16.6px;height:17.6px;background:#f0f0f0;border:1px solid #a6a6a6;box-sizing:border-box;"></div>
<svg style="position:absolute;left:85.2px;top:1034px;overflow:visible" width="9" height="9" viewBox="0 0 9 9"><rect x=".5" y=".5" width="8" height="8" fill="#fff" stroke="#8a93ad"/><path d="M2.200 4.500H6.800M4.500 2.200V6.800" stroke="#000" stroke-width="1.100"/></svg>
<div style="left:592.6px;top:1029.6px;width:16.6px;height:17.6px;background:#f0f0f0;border:1px solid #a6a6a6;box-sizing:border-box;"></div>
<svg style="position:absolute;left:596.5px;top:1034px;overflow:visible" width="9" height="9" viewBox="0 0 9 9"><rect x=".5" y=".5" width="8" height="8" fill="#fff" stroke="#8a93ad"/><path d="M2.200 4.500H6.800M4.500 2.200V6.800" stroke="#000" stroke-width="1.100"/></svg>
<div class="t g" style="left:103.2px;top:1028.3px;width:43.7px;letter-spacing:-0.25px;">102366</div>
<div class="t g" style="left:150.9px;top:1028.3px;width:70px;letter-spacing:-0.4px;">07T</div>
<div class="t g" style="left:224.9px;top:1028.3px;width:264.7px;letter-spacing:0.14px;">MO - Pose Isolant Pare-Air Mural (pi2)</div>
<div class="t g" style="left:493.6px;top:1028.3px;width:98.7px;letter-spacing:0.04px;">Charpentier Menuis</div>
<div class="t g" style="left:609.6px;top:1028.3px;width:65.9px;text-align:right;letter-spacing:-0.17px;">2 340,00</div>
<div class="t g" style="left:683.7px;top:1028.3px;width:34.9px;letter-spacing:0.2px;">pi2</div>
<div class="t g" style="left:718.3px;top:1028.3px;width:45.3px;text-align:right;letter-spacing:-0.17px;">4,68</div>
<div class="t g" style="left:767.5px;top:1028.3px;width:56.3px;text-align:right;letter-spacing:-0.17px;">0,00 %</div>
<div class="t g" style="left:827.7px;top:1028.3px;width:64.8px;text-align:right;letter-spacing:-0.17px;">0,00</div>
<div class="t g" style="left:896.4px;top:1028.3px;width:75.2px;text-align:right;letter-spacing:-0.17px;">4,68</div>
<div class="t g" style="left:975.5px;top:1028.3px;width:51px;text-align:right;letter-spacing:-0.17px;">0,12 $</div>
<div class="t g" style="left:1034.7px;top:1028.3px;width:38px;letter-spacing:0.2px;">pi2</div>
<div class="t g" style="left:1072.4px;top:1028.3px;width:82.3px;text-align:right;letter-spacing:-0.17px;">271,44 $</div>
<div style="left:81.3px;top:1049.6px;width:16.6px;height:17.6px;background:#f0f0f0;border:1px solid #a6a6a6;box-sizing:border-box;"></div>
<svg style="position:absolute;left:85.2px;top:1054px;overflow:visible" width="9" height="9" viewBox="0 0 9 9"><rect x=".5" y=".5" width="8" height="8" fill="#fff" stroke="#8a93ad"/><path d="M2.200 4.500H6.800M4.500 2.200V6.800" stroke="#000" stroke-width="1.100"/></svg>
<div style="left:592.6px;top:1049.6px;width:16.6px;height:17.6px;background:#f0f0f0;border:1px solid #a6a6a6;box-sizing:border-box;"></div>
<svg style="position:absolute;left:596.5px;top:1054px;overflow:visible" width="9" height="9" viewBox="0 0 9 9"><rect x=".5" y=".5" width="8" height="8" fill="#fff" stroke="#8a93ad"/><path d="M2.200 4.500H6.800M4.500 2.200V6.800" stroke="#000" stroke-width="1.100"/></svg>
<div class="t g" style="left:103.2px;top:1048.3px;width:43.7px;letter-spacing:-0.25px;">107732</div>
<div class="t g" style="left:150.9px;top:1048.3px;width:70px;letter-spacing:-0.4px;">09T</div>
<div class="t g" style="left:224.9px;top:1048.3px;width:264.7px;letter-spacing:0.14px;">MO - Pose Gypse Plafond (pi2)</div>
<div class="t g" style="left:493.6px;top:1048.3px;width:98.7px;letter-spacing:0.04px;">Charpentier Menuis</div>
<div class="t g" style="left:609.6px;top:1048.3px;width:65.9px;text-align:right;letter-spacing:-0.17px;">486,00</div>
<div class="t g" style="left:683.7px;top:1048.3px;width:34.9px;letter-spacing:0.2px;">pi2</div>
<div class="t g" style="left:718.3px;top:1048.3px;width:45.3px;text-align:right;letter-spacing:-0.17px;">4,20</div>
<div class="t g" style="left:767.5px;top:1048.3px;width:56.3px;text-align:right;letter-spacing:-0.17px;">0,00 %</div>
<div class="t g" style="left:827.7px;top:1048.3px;width:64.8px;text-align:right;letter-spacing:-0.17px;">0,00</div>
<div class="t g" style="left:896.4px;top:1048.3px;width:75.2px;text-align:right;letter-spacing:-0.17px;">4,20</div>
<div class="t g" style="left:975.5px;top:1048.3px;width:51px;text-align:right;letter-spacing:-0.17px;">0,50 $</div>
<div class="t g" style="left:1034.7px;top:1048.3px;width:38px;letter-spacing:0.2px;">pi2</div>
<div class="t g" style="left:1072.4px;top:1048.3px;width:82.3px;text-align:right;letter-spacing:-0.17px;">243,60 $</div>
<div style="left:81.3px;top:1069.6px;width:16.6px;height:17.6px;background:#f0f0f0;border:1px solid #a6a6a6;box-sizing:border-box;"></div>
<svg style="position:absolute;left:85.2px;top:1074px;overflow:visible" width="9" height="9" viewBox="0 0 9 9"><rect x=".5" y=".5" width="8" height="8" fill="#fff" stroke="#8a93ad"/><path d="M2.200 4.500H6.800M4.500 2.200V6.800" stroke="#000" stroke-width="1.100"/></svg>
<div style="left:592.6px;top:1069.6px;width:16.6px;height:17.6px;background:#f0f0f0;border:1px solid #a6a6a6;box-sizing:border-box;"></div>
<svg style="position:absolute;left:596.5px;top:1074px;overflow:visible" width="9" height="9" viewBox="0 0 9 9"><rect x=".5" y=".5" width="8" height="8" fill="#fff" stroke="#8a93ad"/><path d="M2.200 4.500H6.800M4.500 2.200V6.800" stroke="#000" stroke-width="1.100"/></svg>
<div class="t g" style="left:103.2px;top:1068.3px;width:43.7px;letter-spacing:-0.25px;">102788</div>
<div class="t g" style="left:150.9px;top:1068.3px;width:70px;letter-spacing:-0.4px;">07T</div>
<div class="t g" style="left:224.9px;top:1068.3px;width:264.7px;letter-spacing:0.14px;">MO - Finition Débord de Toit soffite et facia (pi2)</div>
<div class="t g" style="left:493.6px;top:1068.3px;width:98.7px;letter-spacing:0.04px;">Charpentier Menuis</div>
<div class="t g" style="left:609.6px;top:1068.3px;width:65.9px;text-align:right;letter-spacing:-0.17px;">65,00</div>
<div class="t g" style="left:683.7px;top:1068.3px;width:34.9px;letter-spacing:0.2px;">pi2</div>
<div class="t g" style="left:718.3px;top:1068.3px;width:45.3px;text-align:right;letter-spacing:-0.17px;">2,95</div>
<div class="t g" style="left:767.5px;top:1068.3px;width:56.3px;text-align:right;letter-spacing:-0.17px;">0,00 %</div>
<div class="t g" style="left:827.7px;top:1068.3px;width:64.8px;text-align:right;letter-spacing:-0.17px;">0,00</div>
<div class="t g" style="left:896.4px;top:1068.3px;width:75.2px;text-align:right;letter-spacing:-0.17px;">2,95</div>
<div class="t g" style="left:975.5px;top:1068.3px;width:51px;text-align:right;letter-spacing:-0.17px;">2,63 $</div>
<div class="t g" style="left:1034.7px;top:1068.3px;width:38px;letter-spacing:0.2px;">pi2</div>
<div class="t g" style="left:1072.4px;top:1068.3px;width:82.3px;text-align:right;letter-spacing:-0.17px;">171,10 $</div>
<div style="left:81.3px;top:1089.6px;width:16.6px;height:17.6px;background:#f0f0f0;border:1px solid #a6a6a6;box-sizing:border-box;"></div>
<svg style="position:absolute;left:85.2px;top:1094px;overflow:visible" width="9" height="9" viewBox="0 0 9 9"><rect x=".5" y=".5" width="8" height="8" fill="#fff" stroke="#8a93ad"/><path d="M2.200 4.500H6.800M4.500 2.200V6.800" stroke="#000" stroke-width="1.100"/></svg>
<div style="left:592.6px;top:1089.6px;width:16.6px;height:17.6px;background:#f0f0f0;border:1px solid #a6a6a6;box-sizing:border-box;"></div>
<svg style="position:absolute;left:596.5px;top:1094px;overflow:visible" width="9" height="9" viewBox="0 0 9 9"><rect x=".5" y=".5" width="8" height="8" fill="#fff" stroke="#8a93ad"/><path d="M2.200 4.500H6.800M4.500 2.200V6.800" stroke="#000" stroke-width="1.100"/></svg>
<div class="t g" style="left:103.2px;top:1088.3px;width:43.7px;letter-spacing:-0.25px;">107871</div>
<div class="t g" style="left:150.9px;top:1088.3px;width:70px;letter-spacing:-0.4px;">09T</div>
<div class="t g" style="left:224.9px;top:1088.3px;width:264.7px;letter-spacing:0.14px;">MO - Tireur de joints Plafonds (pi2)</div>
<div class="t g" style="left:493.6px;top:1088.3px;width:98.7px;letter-spacing:0.04px;">Charpentier Menuis</div>
<div class="t g" style="left:609.6px;top:1088.3px;width:65.9px;text-align:right;letter-spacing:-0.17px;">486,00</div>
<div class="t g" style="left:683.7px;top:1088.3px;width:34.9px;letter-spacing:0.2px;">pi2</div>
<div class="t g" style="left:718.3px;top:1088.3px;width:45.3px;text-align:right;letter-spacing:-0.17px;">2,92</div>
<div class="t g" style="left:767.5px;top:1088.3px;width:56.3px;text-align:right;letter-spacing:-0.17px;">0,00 %</div>
<div class="t g" style="left:827.7px;top:1088.3px;width:64.8px;text-align:right;letter-spacing:-0.17px;">0,00</div>
<div class="t g" style="left:896.4px;top:1088.3px;width:75.2px;text-align:right;letter-spacing:-0.17px;">2,92</div>
<div class="t g" style="left:975.5px;top:1088.3px;width:51px;text-align:right;letter-spacing:-0.17px;">0,35 $</div>
<div class="t g" style="left:1034.7px;top:1088.3px;width:38px;letter-spacing:0.2px;">pi2</div>
<div class="t g" style="left:1072.4px;top:1088.3px;width:82.3px;text-align:right;letter-spacing:-0.17px;">169,36 $</div>
<div style="left:81.3px;top:1109.6px;width:16.6px;height:17.6px;background:#f0f0f0;border:1px solid #a6a6a6;box-sizing:border-box;"></div>
<svg style="position:absolute;left:85.2px;top:1114px;overflow:visible" width="9" height="9" viewBox="0 0 9 9"><rect x=".5" y=".5" width="8" height="8" fill="#fff" stroke="#8a93ad"/><path d="M2.200 4.500H6.800M4.500 2.200V6.800" stroke="#000" stroke-width="1.100"/></svg>
<div style="left:592.6px;top:1109.6px;width:16.6px;height:17.6px;background:#f0f0f0;border:1px solid #a6a6a6;box-sizing:border-box;"></div>
<svg style="position:absolute;left:596.5px;top:1114px;overflow:visible" width="9" height="9" viewBox="0 0 9 9"><rect x=".5" y=".5" width="8" height="8" fill="#fff" stroke="#8a93ad"/><path d="M2.200 4.500H6.800M4.500 2.200V6.800" stroke="#000" stroke-width="1.100"/></svg>
<div class="t g" style="left:103.2px;top:1108.3px;width:43.7px;letter-spacing:-0.25px;">108424</div>
<div class="t g" style="left:150.9px;top:1108.3px;width:70px;letter-spacing:-0.4px;">07T</div>
<div class="t g" style="left:224.9px;top:1108.3px;width:264.7px;letter-spacing:0.14px;">MO -Solins &amp; scellant aux ouvertures (pi2)</div>
<div class="t g" style="left:493.6px;top:1108.3px;width:98.7px;letter-spacing:0.04px;">Couvreur</div>
<div class="t g" style="left:609.6px;top:1108.3px;width:65.9px;text-align:right;letter-spacing:-0.17px;">315,44</div>
<div class="t g" style="left:683.7px;top:1108.3px;width:34.9px;letter-spacing:0.2px;">pi2</div>
<div class="t g" style="left:718.3px;top:1108.3px;width:45.3px;text-align:right;letter-spacing:-0.17px;">2,44</div>
<div class="t g" style="left:767.5px;top:1108.3px;width:56.3px;text-align:right;letter-spacing:-0.17px;">0,00 %</div>
<div class="t g" style="left:827.7px;top:1108.3px;width:64.8px;text-align:right;letter-spacing:-0.17px;">0,00</div>
<div class="t g" style="left:896.4px;top:1108.3px;width:75.2px;text-align:right;letter-spacing:-0.17px;">2,44</div>
<div class="t g" style="left:975.5px;top:1108.3px;width:51px;text-align:right;letter-spacing:-0.17px;">0,45 $</div>
<div class="t g" style="left:1034.7px;top:1108.3px;width:38px;letter-spacing:0.2px;">pi2</div>
<div class="t g" style="left:1072.4px;top:1108.3px;width:82.3px;text-align:right;letter-spacing:-0.17px;">141,52 $</div>
<div style="left:81.3px;top:1129.6px;width:16.6px;height:17.6px;background:#f0f0f0;border:1px solid #a6a6a6;box-sizing:border-box;"></div>
<svg style="position:absolute;left:85.2px;top:1134px;overflow:visible" width="9" height="9" viewBox="0 0 9 9"><rect x=".5" y=".5" width="8" height="8" fill="#fff" stroke="#8a93ad"/><path d="M2.200 4.500H6.800M4.500 2.200V6.800" stroke="#000" stroke-width="1.100"/></svg>
<div style="left:592.6px;top:1129.6px;width:16.6px;height:17.6px;background:#f0f0f0;border:1px solid #a6a6a6;box-sizing:border-box;"></div>
<svg style="position:absolute;left:596.5px;top:1134px;overflow:visible" width="9" height="9" viewBox="0 0 9 9"><rect x=".5" y=".5" width="8" height="8" fill="#fff" stroke="#8a93ad"/><path d="M2.200 4.500H6.800M4.500 2.200V6.800" stroke="#000" stroke-width="1.100"/></svg>
<div class="t g" style="left:103.2px;top:1128.3px;width:43.7px;letter-spacing:-0.25px;">107972</div>
<div class="t g" style="left:150.9px;top:1128.3px;width:70px;letter-spacing:-0.4px;">09T</div>
<div class="t g" style="left:224.9px;top:1128.3px;width:264.7px;letter-spacing:0.14px;">MO - Peintre au  (pi2) Portes</div>
<div class="t g" style="left:493.6px;top:1128.3px;width:98.7px;letter-spacing:0.04px;">Peintre</div>
<div class="t g" style="left:609.6px;top:1128.3px;width:65.9px;text-align:right;letter-spacing:-0.17px;">301,00</div>
<div class="t g" style="left:683.7px;top:1128.3px;width:34.9px;letter-spacing:0.2px;">pi2</div>
<div class="t g" style="left:718.3px;top:1128.3px;width:45.3px;text-align:right;letter-spacing:-0.17px;">1,61</div>
<div class="t g" style="left:767.5px;top:1128.3px;width:56.3px;text-align:right;letter-spacing:-0.17px;">0,00 %</div>
<div class="t g" style="left:827.7px;top:1128.3px;width:64.8px;text-align:right;letter-spacing:-0.17px;">0,00</div>
<div class="t g" style="left:896.4px;top:1128.3px;width:75.2px;text-align:right;letter-spacing:-0.17px;">1,61</div>
<div class="t g" style="left:975.5px;top:1128.3px;width:51px;text-align:right;letter-spacing:-0.17px;">0,27 $</div>
<div class="t g" style="left:1034.7px;top:1128.3px;width:38px;letter-spacing:0.2px;">pi2</div>
<div class="t g" style="left:1072.4px;top:1128.3px;width:82.3px;text-align:right;letter-spacing:-0.17px;">80,50 $</div>
<div style="left:81.3px;top:1149.6px;width:16.6px;height:17.6px;background:#f0f0f0;border:1px solid #a6a6a6;box-sizing:border-box;"></div>
<svg style="position:absolute;left:85.2px;top:1154px;overflow:visible" width="9" height="9" viewBox="0 0 9 9"><rect x=".5" y=".5" width="8" height="8" fill="#fff" stroke="#8a93ad"/><path d="M2.200 4.500H6.800M4.500 2.200V6.800" stroke="#000" stroke-width="1.100"/></svg>
<div style="left:592.6px;top:1149.6px;width:16.6px;height:17.6px;background:#f0f0f0;border:1px solid #a6a6a6;box-sizing:border-box;"></div>
<svg style="position:absolute;left:596.5px;top:1154px;overflow:visible" width="9" height="9" viewBox="0 0 9 9"><rect x=".5" y=".5" width="8" height="8" fill="#fff" stroke="#8a93ad"/><path d="M2.200 4.500H6.800M4.500 2.200V6.800" stroke="#000" stroke-width="1.100"/></svg>
<div class="t g" style="left:103.2px;top:1148.3px;width:43.7px;letter-spacing:-0.25px;">108212</div>
<div class="t g" style="left:150.9px;top:1148.3px;width:70px;letter-spacing:-0.4px;">06T</div>
<div class="t g" style="left:224.9px;top:1148.3px;width:264.7px;letter-spacing:0.14px;">MO -Poutre RDC  (unit)</div>
<div class="t g" style="left:493.6px;top:1148.3px;width:98.7px;letter-spacing:0.04px;">Charpentier Menuis</div>
<div class="t g" style="left:609.6px;top:1148.3px;width:65.9px;text-align:right;letter-spacing:-0.17px;">1,00</div>
<div class="t g" style="left:683.7px;top:1148.3px;width:34.9px;letter-spacing:0.2px;">unit</div>
<div class="t g" style="left:718.3px;top:1148.3px;width:45.3px;text-align:right;letter-spacing:-0.17px;">2,00</div>
<div class="t g" style="left:767.5px;top:1148.3px;width:56.3px;text-align:right;letter-spacing:-0.17px;">0,00 %</div>
<div class="t g" style="left:827.7px;top:1148.3px;width:64.8px;text-align:right;letter-spacing:-0.17px;">0,00</div>
<div class="t g" style="left:896.4px;top:1148.3px;width:75.2px;text-align:right;letter-spacing:-0.17px;">2,00</div>
<div class="t g" style="left:975.5px;top:1148.3px;width:51px;text-align:right;letter-spacing:-0.17px;">116,00 $</div>
<div class="t g" style="left:1034.7px;top:1148.3px;width:38px;letter-spacing:0.2px;">unit</div>
<div class="t g" style="left:1072.4px;top:1148.3px;width:82.3px;text-align:right;letter-spacing:-0.17px;">116,00 $</div>
<div style="left:1375px;top:194px;width:485px;height:360px;background:#f0f0f0;box-shadow:1px 1px 3px rgba(0,0,0,.3);border-right:1px solid #8a8a8a;box-sizing:border-box;"></div>
<div class="t" style="left:1383.3px;top:193px;width:300px;height:31px;line-height:31px;font-size:15px;color:#8c8c8c;letter-spacing:-0.51px;">Choix d'une compétence</div>
<svg style="position:absolute;left:1832px;top:203px;overflow:visible" width="10.6" height="10.6" viewBox="0 0 10.6 10.6"><path d="M.4 .4 10.200 10.200M10.200 .4 .4 10.200" stroke="#8a8a8a" stroke-width="1.100"/></svg>
<div style="left:1375px;top:224.6px;width:484px;height:34.6px;background:#fff;border-top:2px solid #8a8a8a;border-left:1px solid #8a8a8a;box-sizing:border-box;"></div>
<svg style="position:absolute;left:1379.7px;top:232px;overflow:visible" width="20.2" height="19.7" viewBox="0 0 20.2 19.7"><g fill="none" stroke="#07131d"><ellipse cx="10.100" cy="3.300" rx="9.100" ry="2.700" stroke-width="2"/></g><path d="M.8 3.800 7.900 12.400V18.500c0 .7.600 1.200 1.300 1.200h1.800c.7 0 1.300-.5 1.300-1.200V12.400L19.400 3.800c-2 1.800-5.400 2.600-9.300 2.600S2.800 5.600.8 3.800z" fill="#07131d"/><path d="M8.600 7.400l3 3m0-3l-3 3" stroke="#fff" stroke-width="1.100"/></svg>
<svg style="position:absolute;left:1411.8px;top:238.5px;overflow:visible" width="20" height="7.7" viewBox="0 0 20 7.7"><rect x="6.200" y="0" width="13.800" height="2.800" rx=".6" fill="#07131d"/><rect x="0" y="4.800" width="14.500" height="2.900" rx=".6" fill="#07131d"/></svg>
<svg style="position:absolute;left:1445.8px;top:235.2px;overflow:visible" width="15.4" height="12.9" viewBox="0 0 15.4 12.9"><path d="M.9 0V12H15.400" fill="none" stroke="#07131d" stroke-width="1.800"/><g fill="#07131d"><rect x="3.200" y="7.200" width="2" height="3.300"/><rect x="6.300" y="4.600" width="2" height="5.900"/><rect x="9.400" y="6.600" width="2" height="3.900"/><rect x="12.500" y=".6" width="2" height="9.900"/></g></svg>
<svg style="position:absolute;left:1475.8px;top:233.6px;overflow:visible" width="19.6" height="17" viewBox="0 0 19.6 17"><g fill="#07131d"><rect x="5.400" y="0" width="9.300" height="2.100"/><path d="M2 3.700h15.600a2 2 0 0 1 2 2v6.200h-4v-3.400H4v3.400H0V5.700a2 2 0 0 1 2-2z"/><path d="M4.800 9.400h10v7.600h-10z M6.400 10.600v4.800h6.800v-4.800z" fill-rule="evenodd"/></g><circle cx="2.400" cy="6" r=".8" fill="#fff"/></svg>
<svg style="position:absolute;left:1508.9px;top:232.5px;overflow:visible" width="18.5" height="18.5" viewBox="0 0 20 20"><g fill="none" stroke="#07131d" stroke-width="1.4"><path d="M2.200 9.200A7.800 7.800 0 0 1 16.200 5"/><path d="M17.800 10.800A7.800 7.800 0 0 1 3.800 15"/></g><path d="M18.600 1.200V7.400H12.400z" fill="#07131d"/><path d="M1.400 18.800V12.600H7.600z" fill="#07131d"/></svg>
<svg style="position:absolute;left:1540.5px;top:232px;overflow:visible" width="19.4" height="19.4" viewBox="0 0 19.4 19.4"><g fill="#07131d"><path d="M0 19.400l1.300-5.600 9.900-9.900 4.300 4.300-9.900 9.900z"/><path d="M12.300 2.800l1.900-1.900a1.700 1.700 0 0 1 2.400 0l1.900 1.900a1.700 1.700 0 0 1 0 2.400l-1.900 1.900z"/></g><path d="M2.600 15.200l1.600 1.600" stroke="#fff" stroke-width=".9"/></svg>
<div style="left:1375px;top:260.2px;width:484px;height:21px;background:#232a36;"></div>
<div style="left:1391.8px;top:260.2px;width:1.1px;height:21px;background:#dfe1e4;"></div>
<div style="left:1440.1px;top:260.2px;width:1.1px;height:21px;background:#dfe1e4;"></div>
<div style="left:1559.5px;top:260.2px;width:1.1px;height:21px;background:#dfe1e4;"></div>
<div style="left:1680.2px;top:260.2px;width:1.1px;height:21px;background:#dfe1e4;"></div>
<div style="left:1753.7px;top:260.2px;width:1.1px;height:21px;background:#dfe1e4;"></div>
<div style="left:1816.5px;top:260.2px;width:1.1px;height:21px;background:#dfe1e4;"></div>
<div class="t" style="left:1392.6px;top:261.2px;width:48.3px;height:21px;line-height:21px;font-size:11.5px;color:#fff;text-align:center;font-weight:bold;letter-spacing:-0.11px;white-space:nowrap;">Code</div>
<div class="t" style="left:1440.9px;top:261.2px;width:119.4px;height:21px;line-height:21px;font-size:11.5px;color:#fff;text-align:center;font-weight:bold;letter-spacing:0.32px;white-space:nowrap;">Nom</div>
<div class="t" style="left:1560.3px;top:261.2px;width:120.7px;height:21px;line-height:21px;font-size:11.5px;color:#fff;text-align:center;font-weight:bold;letter-spacing:-0.04px;white-space:nowrap;">Fournisseur</div>
<div class="t" style="left:1681px;top:261.2px;width:73.5px;height:21px;line-height:21px;font-size:11.5px;color:#fff;text-align:center;font-weight:bold;letter-spacing:0.24px;white-space:nowrap;">Taux horaire</div>
<div class="t" style="left:1754.5px;top:261.2px;width:62.8px;height:21px;line-height:21px;font-size:11.5px;color:#fff;text-align:center;font-weight:bold;letter-spacing:0.23px;white-space:nowrap;">Par défaut</div>
<div class="t" style="left:1817.3px;top:261.2px;width:41.7px;height:21px;line-height:21px;font-size:11.5px;color:#fff;text-align:center;font-weight:bold;letter-spacing:0.32px;white-space:nowrap;">Projet</div>
<div style="left:1375px;top:281.2px;width:484px;height:19.6px;background:#dff4f2;"></div>
<div style="left:1375px;top:300.8px;width:484px;height:60.15px;background:#fff;"></div>
<div style="left:1375px;top:281.2px;width:17.6px;height:79.75px;background:#f0f0f0;border-right:1px solid #8c8c8c;box-sizing:border-box;"></div>
<div style="left:1375px;top:300.3px;width:17.6px;height:1px;background:#a8a8a8;"></div>
<div style="left:1375px;top:320.35px;width:17.6px;height:1px;background:#a8a8a8;"></div>
<div style="left:1392.6px;top:320.35px;width:466.4px;height:1px;background:#ececec;"></div>
<div style="left:1375px;top:340.4px;width:17.6px;height:1px;background:#a8a8a8;"></div>
<div style="left:1392.6px;top:340.4px;width:466.4px;height:1px;background:#ececec;"></div>
<div style="left:1375px;top:360.45px;width:17.6px;height:1px;background:#a8a8a8;"></div>
<div style="left:1440.1px;top:300.8px;width:1px;height:60.15px;background:#ebebeb;"></div>
<div style="left:1559.5px;top:300.8px;width:1px;height:60.15px;background:#ebebeb;"></div>
<div style="left:1680.2px;top:300.8px;width:1px;height:60.15px;background:#ebebeb;"></div>
<div style="left:1753.7px;top:300.8px;width:1px;height:60.15px;background:#ebebeb;"></div>
<div style="left:1816.5px;top:300.8px;width:1px;height:60.15px;background:#ebebeb;"></div>
<div style="left:1375px;top:360.65px;width:484px;height:1.1px;background:#6e6e6e;"></div>
<div style="left:1778.9px;top:284px;width:13px;height:13px;background:#f4f4f4;border:1px solid #8e8f8f;box-sizing:border-box;background:linear-gradient(135deg,#dcdcdc,#fbfbfb);box-shadow:inset 0 0 0 1px #f4f4f4;"></div>
<div style="left:1781.9px;top:287px;width:7px;height:7px;background:#1f9ad3;background:linear-gradient(135deg,#0f6fa8,#3fc0ee);"></div>
<div style="left:1830.9px;top:284px;width:13px;height:13px;background:#f4f4f4;border:1px solid #8e8f8f;box-sizing:border-box;background:linear-gradient(135deg,#dcdcdc,#fbfbfb);box-shadow:inset 0 0 0 1px #f4f4f4;"></div>
<div style="left:1833.9px;top:287px;width:7px;height:7px;background:#1f9ad3;background:linear-gradient(135deg,#0f6fa8,#3fc0ee);"></div>
<div class="t" style="left:1396.6px;top:299.8px;width:60px;height:20.05px;line-height:20.05px;font-size:11px;letter-spacing:-0.23px;">102230</div>
<div class="t" style="left:1444.9px;top:299.8px;width:120px;height:20.05px;line-height:20.05px;font-size:11px;letter-spacing:0.12px;">Charpentier Menuisier</div>
<div class="t" style="left:1564.3px;top:299.8px;width:120px;height:20.05px;line-height:20.05px;font-size:11px;letter-spacing:0.18px;">Taux standard</div>
<div class="t" style="left:1681px;top:299.8px;width:70px;height:20.05px;line-height:20.05px;font-size:11px;text-align:right;letter-spacing:-0.1px;">58,00 $</div>
<div style="left:1778.9px;top:303.6px;width:13px;height:13px;background:#f4f4f4;border:1px solid #8e8f8f;box-sizing:border-box;background:linear-gradient(135deg,#dcdcdc,#fbfbfb);box-shadow:inset 0 0 0 1px #f4f4f4;"></div>
<svg style="position:absolute;left:1781.4px;top:306.1px;overflow:visible" width="8" height="8" viewBox="0 0 8 8"><path d="M1 4 3.200 6.600 7 .8" fill="none" stroke="#31347c" stroke-width="1.500"/></svg>
<div style="left:1830.9px;top:303.6px;width:13px;height:13px;background:#f4f4f4;border:1px solid #8e8f8f;box-sizing:border-box;background:linear-gradient(135deg,#dcdcdc,#fbfbfb);box-shadow:inset 0 0 0 1px #f4f4f4;"></div>
<div class="t" style="left:1396.6px;top:319.85px;width:60px;height:20.05px;line-height:20.05px;font-size:11px;letter-spacing:-0.23px;">102230</div>
<div class="t" style="left:1444.9px;top:319.85px;width:120px;height:20.05px;line-height:20.05px;font-size:11px;letter-spacing:0.12px;">Charpentier Menuisier</div>
<div class="t" style="left:1564.3px;top:319.85px;width:120px;height:20.05px;line-height:20.05px;font-size:11px;letter-spacing:0.26px;">Notre entreprise</div>
<div class="t" style="left:1681px;top:319.85px;width:70px;height:20.05px;line-height:20.05px;font-size:11px;text-align:right;letter-spacing:-0.1px;">58,00 $</div>
<div style="left:1778.9px;top:323.65px;width:13px;height:13px;background:#f4f4f4;border:1px solid #8e8f8f;box-sizing:border-box;background:linear-gradient(135deg,#dcdcdc,#fbfbfb);box-shadow:inset 0 0 0 1px #f4f4f4;"></div>
<div style="left:1830.9px;top:323.65px;width:13px;height:13px;background:#f4f4f4;border:1px solid #8e8f8f;box-sizing:border-box;background:linear-gradient(135deg,#dcdcdc,#fbfbfb);box-shadow:inset 0 0 0 1px #f4f4f4;"></div>
<div class="t" style="left:1396.6px;top:339.9px;width:60px;height:20.05px;line-height:20.05px;font-size:11px;letter-spacing:-0.23px;">102230</div>
<div class="t" style="left:1444.9px;top:339.9px;width:120px;height:20.05px;line-height:20.05px;font-size:11px;letter-spacing:0.12px;">Charpentier Menuisier</div>
<div class="t" style="left:1564.3px;top:339.9px;width:120px;height:20.05px;line-height:20.05px;font-size:11px;letter-spacing:0.06px;">Menuiserie Plante inc.</div>
<div class="t" style="left:1681px;top:339.9px;width:70px;height:20.05px;line-height:20.05px;font-size:11px;text-align:right;letter-spacing:-0.1px;">60,78 $</div>
<div style="left:1778.9px;top:343.7px;width:13px;height:13px;background:#f4f4f4;border:1px solid #8e8f8f;box-sizing:border-box;background:linear-gradient(135deg,#dcdcdc,#fbfbfb);box-shadow:inset 0 0 0 1px #f4f4f4;"></div>
<div style="left:1830.9px;top:343.7px;width:13px;height:13px;background:#f4f4f4;border:1px solid #8e8f8f;box-sizing:border-box;background:linear-gradient(135deg,#dcdcdc,#fbfbfb);box-shadow:inset 0 0 0 1px #f4f4f4;"></div>
<div style="left:1859.5px;top:194px;width:3px;height:360px;background:#a3a3a3;"></div>
<div style="left:1375px;top:361.75px;width:484px;height:142.45px;background:#ababab;"></div>
<div style="left:1375px;top:504px;width:484px;height:1px;background:#7a7a7a;"></div>
<div style="left:1668.2px;top:517.2px;width:87.2px;height:24.6px;background:#e1e1e1;border:1px solid #8c8c8c;box-shadow:inset 0 0 0 1px #f4f4f4,inset -1px -1px 0 1px #b5b5b5;box-sizing:border-box;"></div>
<div class="t" style="left:1668.2px;top:517.2px;width:87.2px;height:24.6px;line-height:24.6px;font-size:11.5px;color:#9a9a9a;text-align:center;letter-spacing:-0.45px;">Sélectionner</div>
<div style="left:1762px;top:517.2px;width:87.5px;height:24.6px;background:#e9e9e9;border:1px solid #8c8c8c;box-shadow:inset 0 0 0 1px #fbfbfb,inset -1px -1px 0 1px #b5b5b5;box-sizing:border-box;"></div>
<div class="t" style="left:1762px;top:517.2px;width:87.5px;height:24.6px;line-height:24.6px;font-size:11.5px;text-align:center;letter-spacing:-0.45px;">Annuler</div>
<svg style="position:absolute;left:1851px;top:545px;overflow:visible" width="8" height="8" viewBox="0 0 8 8"><g fill="#7d7d7d"><rect x="6" y="0" width="1.500" height="1.500"/><rect x="3" y="3" width="1.500" height="1.500"/><rect x="6" y="3" width="1.500" height="1.500"/><rect x="0" y="6" width="1.500" height="1.500"/><rect x="3" y="6" width="1.500" height="1.500"/><rect x="6" y="6" width="1.500" height="1.500"/></g></svg>
<div style="left:858px;top:577px;width:1438.2px;height:694px;background:#f0f0f0;box-shadow:1px 2px 5px rgba(0,0,0,.28);border:1.200px solid #0d74cd;border-top:none;box-sizing:border-box;"></div>
<div style="left:858px;top:577px;width:1438.2px;height:42.6px;background:#232a36;"></div>
<div style="left:861px;top:590px;width:15.5px;height:15px;background:#0f1c26;"></div>
<svg style="position:absolute;left:863.2px;top:595.2px;overflow:visible" width="11.5" height="5.8" viewBox="0 0 50 29.9" preserveAspectRatio="none"><g fill="#f0c400"><polygon points="0,14.8 9.2,5.8 13.9,10.4 9.5,15 14.8,20.5 19.5,15.9 24.1,20.5 14.8,29.9"/><polygon points="14.8,0 35.4,20.7 41,15 35.4,9.6 30.8,14 26.3,9.4 35.4,0 50,14.8 35.4,29.9 10.3,4.5"/></g></svg>
<div class="t" style="left:880.8px;top:578px;width:400px;height:42px;line-height:42px;font-size:15px;color:#fff;letter-spacing:-0.74px;">Compilation détaillée Main-d'oeuvre</div>
<svg style="position:absolute;left:2171px;top:599.5px;overflow:visible" width="10" height="1" viewBox="0 0 10 1"><rect width="10" height="1" fill="#666d78"/></svg>
<svg style="position:absolute;left:2219.5px;top:594px;overflow:visible" width="9.5" height="9.5" viewBox="0 0 9.5 9.5"><rect x=".5" y=".5" width="8.500" height="8.500" fill="none" stroke="#666d78"/></svg>
<svg style="position:absolute;left:2267px;top:593px;overflow:visible" width="10.5" height="10.5" viewBox="0 0 10.5 10.5"><path d="M.4 .4 10.100 10.100M10.100 .4 .4 10.100" stroke="#666d78" stroke-width="1.100"/></svg>
<div style="left:864.5px;top:622px;width:59px;height:22.8px;background:#f0f0f0;border-right:1px solid #111;border-left:1px solid #fff;border-top:1px solid #fff;box-sizing:border-box;"></div>
<div class="t" style="left:872px;top:623px;width:60px;height:21px;line-height:21px;font-size:11.5px;color:#555;letter-spacing:0.03px;">Détaillée</div>
<div style="left:860.6px;top:645.8px;width:1431.4px;height:33.8px;background:#fff;border-top:2px solid #7a7a7a;border-left:2px solid #7a7a7a;box-sizing:border-box;"></div>
<div style="left:862.6px;top:647.8px;width:1429px;height:1px;background:#d4d4d4;"></div>
<svg style="position:absolute;left:872.6px;top:653.3px;overflow:visible" width="18.8" height="19.4" viewBox="0 0 18.8 19.4"><g stroke="#07131d" fill="none"><path d="M3.400 0V7M0 3.500H7" stroke-width="2.300"/><path d="M.6 19.400 18 1.600" stroke-width="1.800"/><path d="M11 15.400H18.800" stroke-width="2.200"/></g></svg>
<div class="t" style="left:901.8px;top:652.5px;width:24px;height:22px;line-height:22px;font-size:20px;color:#07131d;text-align:center;font-weight:bold;-webkit-text-stroke:.3px #07131d;">%</div>
<div style="left:859.2px;top:1268.7px;width:1436px;height:0.9px;background:#111;"></div>
<div style="left:2294px;top:645px;width:1px;height:624.5px;background:#111;"></div>
<div style="left:860.2px;top:681px;width:1433.8px;height:587.7px;background:#ababab;"></div>
<div style="left:860.2px;top:1261.7px;width:1429px;height:1.1px;background:#6e6e6e;"></div>
<div style="left:2289px;top:681px;width:3.2px;height:582px;background:#8a8a8a;"></div>
<div style="left:860.2px;top:681px;width:1px;height:581px;background:#6a6a6a;"></div>
<div style="left:860.6px;top:681.5px;width:1428.4px;height:20px;background:#f0f0f0;"></div>
<div style="left:860.6px;top:681.5px;width:12.8px;height:20px;background:#f0f0f0;border-right:1px solid #a0a0a0;border-bottom:1px solid #a0a0a0;border-top:1px solid #fdfdfd;box-sizing:border-box;"></div>
<div class="t" style="left:860.6px;top:680.7px;width:11.8px;height:20px;line-height:20px;font-size:11px;color:#111;text-align:center;">1</div>
<div style="left:873.4px;top:681.5px;width:13px;height:20px;background:#f0f0f0;border-right:1px solid #a0a0a0;border-bottom:1px solid #a0a0a0;border-top:1px solid #fdfdfd;box-sizing:border-box;"></div>
<div class="t" style="left:873.4px;top:680.7px;width:12px;height:20px;line-height:20px;font-size:11px;color:#111;text-align:center;">2</div>
<div style="left:886.4px;top:681.5px;width:13px;height:20px;background:#f0f0f0;border-right:1px solid #a0a0a0;border-bottom:1px solid #a0a0a0;border-top:1px solid #fdfdfd;box-sizing:border-box;"></div>
<div class="t" style="left:886.4px;top:680.7px;width:12px;height:20px;line-height:20px;font-size:11px;color:#111;text-align:center;">3</div>
<div style="left:899.4px;top:681.5px;width:13.1px;height:20px;background:#f0f0f0;border-right:1px solid #a0a0a0;border-bottom:1px solid #a0a0a0;border-top:1px solid #fdfdfd;box-sizing:border-box;"></div>
<div class="t" style="left:899.4px;top:680.7px;width:12.1px;height:20px;line-height:20px;font-size:11px;color:#111;text-align:center;">4</div>
<div style="left:912.5px;top:681.5px;width:13px;height:20px;background:#f0f0f0;border-right:1px solid #a0a0a0;border-bottom:1px solid #a0a0a0;border-top:1px solid #fdfdfd;box-sizing:border-box;"></div>
<div class="t" style="left:912.5px;top:680.7px;width:12px;height:20px;line-height:20px;font-size:11px;color:#111;text-align:center;">5</div>
<div style="left:925.5px;top:681.5px;width:13.1px;height:20px;background:#f0f0f0;border-right:1px solid #a0a0a0;border-bottom:1px solid #a0a0a0;border-top:1px solid #fdfdfd;box-sizing:border-box;"></div>
<div class="t" style="left:925.5px;top:680.7px;width:12.1px;height:20px;line-height:20px;font-size:11px;color:#111;text-align:center;">6</div>
<div style="left:938.6px;top:681.5px;width:13px;height:20px;background:#f0f0f0;border-right:1px solid #a0a0a0;border-bottom:1px solid #a0a0a0;border-top:1px solid #fdfdfd;box-sizing:border-box;"></div>
<div class="t" style="left:938.6px;top:680.7px;width:12px;height:20px;line-height:20px;font-size:11px;color:#111;text-align:center;">7</div>
<div style="left:951.6px;top:681.5px;width:13.1px;height:20px;background:#f0f0f0;border-right:1px solid #a0a0a0;border-bottom:1px solid #a0a0a0;border-top:1px solid #fdfdfd;box-sizing:border-box;"></div>
<div class="t" style="left:951.6px;top:680.7px;width:12.1px;height:20px;line-height:20px;font-size:11px;color:#111;text-align:center;">8</div>
<div style="left:964.7px;top:681.5px;width:13px;height:20px;background:#f0f0f0;border-right:1px solid #a0a0a0;border-bottom:1px solid #a0a0a0;border-top:1px solid #fdfdfd;box-sizing:border-box;"></div>
<div class="t" style="left:964.7px;top:680.7px;width:12px;height:20px;line-height:20px;font-size:11px;color:#111;text-align:center;">*</div>
<div style="left:977.7px;top:681.5px;width:70.6px;height:20px;background:#f0f0f0;border-right:1px solid #a0a0a0;border-bottom:1px solid #a0a0a0;border-top:1px solid #fdfdfd;box-sizing:border-box;"></div>
<div class="t" style="left:981.2px;top:680.7px;width:70.6px;height:20px;line-height:20px;font-size:11.5px;color:#111;letter-spacing:-0.25px;">Code</div>
<div style="left:1048.3px;top:681.5px;width:77px;height:20px;background:#f0f0f0;border-right:1px solid #a0a0a0;border-bottom:1px solid #a0a0a0;border-top:1px solid #fdfdfd;box-sizing:border-box;"></div>
<div class="t" style="left:1051.8px;top:680.7px;width:77px;height:20px;line-height:20px;font-size:11.5px;color:#111;letter-spacing:-0.19px;">Code class.</div>
<div style="left:1125.3px;top:681.5px;width:123.1px;height:20px;background:#f0f0f0;border-right:1px solid #a0a0a0;border-bottom:1px solid #a0a0a0;border-top:1px solid #fdfdfd;box-sizing:border-box;"></div>
<div class="t" style="left:1128.8px;top:680.7px;width:123.1px;height:20px;line-height:20px;font-size:11.5px;color:#111;letter-spacing:-0.09px;">Nom</div>
<div style="left:1248.4px;top:681.5px;width:105.6px;height:20px;background:#f0f0f0;border-right:1px solid #a0a0a0;border-bottom:1px solid #a0a0a0;border-top:1px solid #fdfdfd;box-sizing:border-box;"></div>
<div class="t" style="left:1251.9px;top:680.7px;width:105.6px;height:20px;line-height:20px;font-size:11.5px;color:#111;letter-spacing:0.1px;">Identification</div>
<div style="left:1354px;top:681.5px;width:84.3px;height:20px;background:#f0f0f0;border-right:1px solid #a0a0a0;border-bottom:1px solid #a0a0a0;border-top:1px solid #fdfdfd;box-sizing:border-box;"></div>
<div class="t" style="left:1357.5px;top:680.7px;width:84.3px;height:20px;line-height:20px;font-size:11.5px;color:#111;letter-spacing:-0.15px;">Taux horaire</div>
<div style="left:1438.3px;top:681.5px;width:51.3px;height:20px;background:#f0f0f0;border-right:1px solid #a0a0a0;border-bottom:1px solid #a0a0a0;border-top:1px solid #fdfdfd;box-sizing:border-box;"></div>
<div class="t" style="left:1441.8px;top:680.7px;width:51.3px;height:20px;line-height:20px;font-size:11.5px;color:#111;letter-spacing:-0.09px;">Projet</div>
<div style="left:1489.6px;top:681.5px;width:78.8px;height:20px;background:#f0f0f0;border-right:1px solid #a0a0a0;border-bottom:1px solid #a0a0a0;border-top:1px solid #fdfdfd;box-sizing:border-box;"></div>
<div class="t" style="left:1493.1px;top:680.7px;width:78.8px;height:20px;line-height:20px;font-size:11.5px;color:#111;letter-spacing:-0.2px;">Fournisseur</div>
<div style="left:1755px;top:681.5px;width:79.4px;height:20px;background:#f0f0f0;border-right:1px solid #a0a0a0;border-bottom:1px solid #a0a0a0;box-sizing:border-box;"></div>
<div style="left:1834.4px;top:681.5px;width:70.5px;height:20px;background:#f0f0f0;border-right:1px solid #a0a0a0;border-bottom:1px solid #a0a0a0;box-sizing:border-box;"></div>
<div class="t" style="left:1758.5px;top:681px;width:80px;height:20px;line-height:20px;font-size:11.5px;color:#111;letter-spacing:0.11px;">Temps total</div>
<div class="t" style="left:1838.4px;top:681px;width:60px;height:20px;line-height:20px;font-size:11.5px;color:#111;letter-spacing:0.04px;">Total</div>
<div class="t" style="left:1572.3px;top:682px;width:90px;height:20px;line-height:20px;font-size:11px;color:#1414e6;letter-spacing:0.01px;">Heures</div>
<div class="t" style="left:1630px;top:682px;width:90px;height:20px;line-height:20px;font-size:11px;color:#1414e6;letter-spacing:-0.1px;">% Diff.</div>
<div class="t" style="left:1682.2px;top:682px;width:90px;height:20px;line-height:20px;font-size:11px;color:#1414e6;letter-spacing:0.18px;">Temps diff.</div>
<div class="t" style="left:1909.2px;top:682px;width:90px;height:20px;line-height:20px;font-size:11px;color:#e61414;letter-spacing:0.09px;">% Ajust.</div>
<div class="t" style="left:1971px;top:682px;width:90px;height:20px;line-height:20px;font-size:11px;color:#e61414;letter-spacing:0.19px;">Temps ajust.</div>
<div class="t" style="left:2055.3px;top:682px;width:90px;height:20px;line-height:20px;font-size:11px;color:#e61414;letter-spacing:0.07px;">Ajustement $</div>
<div class="t" style="left:2142px;top:682px;width:90px;height:20px;line-height:20px;font-size:11px;color:#e61414;letter-spacing:0.17px;">Temps final</div>
<div class="t" style="left:2221.3px;top:682px;width:90px;height:20px;line-height:20px;font-size:11px;color:#e61414;letter-spacing:0.08px;">Prix final</div>
<div style="left:861.2px;top:701.5px;width:1427.8px;height:20px;background:#ffffff;border-bottom:1px solid #fff;box-sizing:border-box"></div><div style="left:861.2px;top:721.5px;width:1427.8px;height:20px;background:#0078d7;border-bottom:1px solid rgba(255,255,255,.7);box-sizing:border-box"></div><div style="left:861.2px;top:741.5px;width:1427.8px;height:20px;background:#2a5171;border-bottom:1px solid rgba(255,255,255,.7);box-sizing:border-box"></div><div style="left:861.2px;top:761.5px;width:1427.8px;height:20px;background:#376a90;border-bottom:1px solid rgba(255,255,255,.7);box-sizing:border-box"></div><div style="left:861.2px;top:781.5px;width:1427.8px;height:20px;background:#c9cbd9;border-bottom:1px solid rgba(255,255,255,.55);box-sizing:border-box"></div><div style="left:861.2px;top:801.5px;width:1427.8px;height:20px;background:#dadce6;border-bottom:1px solid rgba(255,255,255,.55);box-sizing:border-box"></div><div style="left:861.2px;top:821.5px;width:1427.8px;height:20px;background:#e9eaf0;border-bottom:1px solid rgba(255,255,255,.55);box-sizing:border-box"></div><div style="left:861.2px;top:841.5px;width:1427.8px;height:20px;background:#c9cbd9;border-bottom:1px solid rgba(255,255,255,.55);box-sizing:border-box"></div><div style="left:861.2px;top:861.5px;width:1427.8px;height:20px;background:#dadce6;border-bottom:1px solid rgba(255,255,255,.55);box-sizing:border-box"></div><div style="left:861.2px;top:881.5px;width:1427.8px;height:20px;background:#e9eaf0;border-bottom:1px solid rgba(255,255,255,.55);box-sizing:border-box"></div><div style="left:861.2px;top:901.5px;width:1427.8px;height:20px;background:#e9eaf0;border-bottom:1px solid rgba(255,255,255,.55);box-sizing:border-box"></div><div style="left:861.2px;top:921.5px;width:1427.8px;height:20px;background:#f5f5f9;border-bottom:1px solid rgba(255,255,255,.55);box-sizing:border-box"></div><div style="left:861.2px;top:941.5px;width:1427.8px;height:20px;background:#c9cbd9;border-bottom:1px solid rgba(255,255,255,.55);box-sizing:border-box"></div><div style="left:861.2px;top:961.5px;width:1427.8px;height:20px;background:#dadce6;border-bottom:1px solid rgba(255,255,255,.55);box-sizing:border-box"></div><div style="left:861.2px;top:981.5px;width:1427.8px;height:20px;background:#e9eaf0;border-bottom:1px solid rgba(255,255,255,.55);box-sizing:border-box"></div><div style="left:861.2px;top:1001.5px;width:1427.8px;height:20px;background:#e9eaf0;border-bottom:1px solid rgba(255,255,255,.55);box-sizing:border-box"></div><div style="left:861.2px;top:1021.5px;width:1427.8px;height:20px;background:#f5f5f9;border-bottom:1px solid rgba(255,255,255,.55);box-sizing:border-box"></div><div style="left:861.2px;top:1041.5px;width:1427.8px;height:20px;background:#376a90;border-bottom:1px solid rgba(255,255,255,.7);box-sizing:border-box"></div><div style="left:861.2px;top:1061.5px;width:1427.8px;height:20px;background:#c9cbd9;border-bottom:1px solid rgba(255,255,255,.55);box-sizing:border-box"></div><div style="left:861.2px;top:1081.5px;width:1427.8px;height:20px;background:#dadce6;border-bottom:1px solid rgba(255,255,255,.55);box-sizing:border-box"></div><div style="left:861.2px;top:1101.5px;width:1427.8px;height:20px;background:#e9eaf0;border-bottom:1px solid rgba(255,255,255,.55);box-sizing:border-box"></div><div style="left:861.2px;top:1121.5px;width:1427.8px;height:20px;background:#c9cbd9;border-bottom:1px solid rgba(255,255,255,.55);box-sizing:border-box"></div><div style="left:861.2px;top:1141.5px;width:1427.8px;height:20px;background:#dadce6;border-bottom:1px solid rgba(255,255,255,.55);box-sizing:border-box"></div><div style="left:861.2px;top:1161.5px;width:1427.8px;height:20px;background:#e9eaf0;border-bottom:1px solid rgba(255,255,255,.55);box-sizing:border-box"></div><div style="left:861.2px;top:1181.5px;width:1427.8px;height:20px;background:#376a90;border-bottom:1px solid rgba(255,255,255,.7);box-sizing:border-box"></div><div style="left:861.2px;top:1201.5px;width:1427.8px;height:20px;background:#c9cbd9;border-bottom:1px solid rgba(255,255,255,.55);box-sizing:border-box"></div><div style="left:861.2px;top:1221.5px;width:1427.8px;height:20px;background:#dadce6;border-bottom:1px solid rgba(255,255,255,.55);box-sizing:border-box"></div><div style="left:861.2px;top:1241.5px;width:1427.8px;height:20px;background:#e9eaf0;border-bottom:1px solid rgba(255,255,255,.55);box-sizing:border-box"></div>
<svg style="position:absolute;left:0px;top:0px;overflow:visible" width="2339" height="1364" viewBox="0 0 2339 1364"><g stroke="#000" stroke-width="1" fill="none" shape-rendering="crispEdges"><path d="M867.5 731.5H876.5"/><path d="M867.5 715.5V731.5"/><path d="M880.5 751.5H889.4"/><path d="M880.5 735.5V751.5"/><path d="M893.5 771.5H902.3"/><path d="M893.5 1051.5H902.3"/><path d="M893.5 1191.5H902.3"/><path d="M893.5 755.5V1191.5"/><path d="M906.5 791.5H915.2"/><path d="M906.5 851.5H915.2"/><path d="M906.5 951.5H915.2"/><path d="M906.5 775.5V951.5"/><path d="M919.5 811.5H928.1"/><path d="M919.5 795.5V811.5"/><path d="M932.5 831.5H945.5"/><path d="M932.5 815.5V831.5"/><path d="M919.5 871.5H928.1"/><path d="M919.5 855.5V871.5"/><path d="M932.5 891.5H945.5"/><path d="M932.5 911.5H941"/><path d="M932.5 875.5V911.5"/><path d="M945.5 931.5H958.4"/><path d="M945.5 915.5V931.5"/><path d="M919.5 971.5H928.1"/><path d="M919.5 955.5V971.5"/><path d="M932.5 991.5H945.5"/><path d="M932.5 1011.5H941"/><path d="M932.5 975.5V1011.5"/><path d="M945.5 1031.5H958.4"/><path d="M945.5 1015.5V1031.5"/><path d="M906.5 1071.5H915.2"/><path d="M906.5 1131.5H915.2"/><path d="M906.5 1055.5V1131.5"/><path d="M919.5 1091.5H928.1"/><path d="M919.5 1075.5V1091.5"/><path d="M932.5 1111.5H945.5"/><path d="M932.5 1095.5V1111.5"/><path d="M919.5 1151.5H928.1"/><path d="M919.5 1135.5V1151.5"/><path d="M932.5 1171.5H945.5"/><path d="M932.5 1155.5V1171.5"/><path d="M906.5 1211.5H915.2"/><path d="M906.5 1195.5V1211.5"/><path d="M919.5 1231.5H928.1"/><path d="M919.5 1215.5V1231.5"/><path d="M932.5 1251.5H945.5"/><path d="M932.5 1235.5V1251.5"/></g></svg>
<svg style="position:absolute;left:863px;top:707px;overflow:visible" width="9" height="9" viewBox="0 0 9 9"><rect x=".5" y=".5" width="8" height="8" fill="#fff" stroke="#8a8f98"/><path d="M2.300 4.500H6.700" stroke="#3b57a8" stroke-width="1.100"/></svg>
<svg style="position:absolute;left:876px;top:727px;overflow:visible" width="9" height="9" viewBox="0 0 9 9"><rect x=".5" y=".5" width="8" height="8" fill="#fff" stroke="#8a8f98"/><path d="M2.300 4.500H6.700" stroke="#3b57a8" stroke-width="1.100"/></svg>
<svg style="position:absolute;left:889px;top:747px;overflow:visible" width="9" height="9" viewBox="0 0 9 9"><rect x=".5" y=".5" width="8" height="8" fill="#fff" stroke="#8a8f98"/><path d="M2.300 4.500H6.700" stroke="#3b57a8" stroke-width="1.100"/></svg>
<svg style="position:absolute;left:902px;top:767px;overflow:visible" width="9" height="9" viewBox="0 0 9 9"><rect x=".5" y=".5" width="8" height="8" fill="#fff" stroke="#8a8f98"/><path d="M2.300 4.500H6.700" stroke="#3b57a8" stroke-width="1.100"/></svg>
<svg style="position:absolute;left:915px;top:787px;overflow:visible" width="9" height="9" viewBox="0 0 9 9"><rect x=".5" y=".5" width="8" height="8" fill="#fff" stroke="#8a8f98"/><path d="M2.300 4.500H6.700" stroke="#3b57a8" stroke-width="1.100"/></svg>
<svg style="position:absolute;left:928px;top:807px;overflow:visible" width="9" height="9" viewBox="0 0 9 9"><rect x=".5" y=".5" width="8" height="8" fill="#fff" stroke="#8a8f98"/><path d="M2.300 4.500H6.700" stroke="#3b57a8" stroke-width="1.100"/></svg>
<svg style="position:absolute;left:915px;top:847px;overflow:visible" width="9" height="9" viewBox="0 0 9 9"><rect x=".5" y=".5" width="8" height="8" fill="#fff" stroke="#8a8f98"/><path d="M2.300 4.500H6.700" stroke="#3b57a8" stroke-width="1.100"/></svg>
<svg style="position:absolute;left:928px;top:867px;overflow:visible" width="9" height="9" viewBox="0 0 9 9"><rect x=".5" y=".5" width="8" height="8" fill="#fff" stroke="#8a8f98"/><path d="M2.300 4.500H6.700" stroke="#3b57a8" stroke-width="1.100"/></svg>
<svg style="position:absolute;left:941px;top:907px;overflow:visible" width="9" height="9" viewBox="0 0 9 9"><rect x=".5" y=".5" width="8" height="8" fill="#fff" stroke="#8a8f98"/><path d="M2.300 4.500H6.700" stroke="#3b57a8" stroke-width="1.100"/></svg>
<svg style="position:absolute;left:915px;top:947px;overflow:visible" width="9" height="9" viewBox="0 0 9 9"><rect x=".5" y=".5" width="8" height="8" fill="#fff" stroke="#8a8f98"/><path d="M2.300 4.500H6.700" stroke="#3b57a8" stroke-width="1.100"/></svg>
<svg style="position:absolute;left:928px;top:967px;overflow:visible" width="9" height="9" viewBox="0 0 9 9"><rect x=".5" y=".5" width="8" height="8" fill="#fff" stroke="#8a8f98"/><path d="M2.300 4.500H6.700" stroke="#3b57a8" stroke-width="1.100"/></svg>
<svg style="position:absolute;left:941px;top:1007px;overflow:visible" width="9" height="9" viewBox="0 0 9 9"><rect x=".5" y=".5" width="8" height="8" fill="#fff" stroke="#8a8f98"/><path d="M2.300 4.500H6.700" stroke="#3b57a8" stroke-width="1.100"/></svg>
<svg style="position:absolute;left:902px;top:1047px;overflow:visible" width="9" height="9" viewBox="0 0 9 9"><rect x=".5" y=".5" width="8" height="8" fill="#fff" stroke="#8a8f98"/><path d="M2.300 4.500H6.700" stroke="#3b57a8" stroke-width="1.100"/></svg>
<svg style="position:absolute;left:915px;top:1067px;overflow:visible" width="9" height="9" viewBox="0 0 9 9"><rect x=".5" y=".5" width="8" height="8" fill="#fff" stroke="#8a8f98"/><path d="M2.300 4.500H6.700" stroke="#3b57a8" stroke-width="1.100"/></svg>
<svg style="position:absolute;left:928px;top:1087px;overflow:visible" width="9" height="9" viewBox="0 0 9 9"><rect x=".5" y=".5" width="8" height="8" fill="#fff" stroke="#8a8f98"/><path d="M2.300 4.500H6.700" stroke="#3b57a8" stroke-width="1.100"/></svg>
<svg style="position:absolute;left:915px;top:1127px;overflow:visible" width="9" height="9" viewBox="0 0 9 9"><rect x=".5" y=".5" width="8" height="8" fill="#fff" stroke="#8a8f98"/><path d="M2.300 4.500H6.700" stroke="#3b57a8" stroke-width="1.100"/></svg>
<svg style="position:absolute;left:928px;top:1147px;overflow:visible" width="9" height="9" viewBox="0 0 9 9"><rect x=".5" y=".5" width="8" height="8" fill="#fff" stroke="#8a8f98"/><path d="M2.300 4.500H6.700" stroke="#3b57a8" stroke-width="1.100"/></svg>
<svg style="position:absolute;left:902px;top:1187px;overflow:visible" width="9" height="9" viewBox="0 0 9 9"><rect x=".5" y=".5" width="8" height="8" fill="#fff" stroke="#8a8f98"/><path d="M2.300 4.500H6.700" stroke="#3b57a8" stroke-width="1.100"/></svg>
<svg style="position:absolute;left:915px;top:1207px;overflow:visible" width="9" height="9" viewBox="0 0 9 9"><rect x=".5" y=".5" width="8" height="8" fill="#fff" stroke="#8a8f98"/><path d="M2.300 4.500H6.700" stroke="#3b57a8" stroke-width="1.100"/></svg>
<svg style="position:absolute;left:928px;top:1227px;overflow:visible" width="9" height="9" viewBox="0 0 9 9"><rect x=".5" y=".5" width="8" height="8" fill="#fff" stroke="#8a8f98"/><path d="M2.300 4.500H6.700" stroke="#3b57a8" stroke-width="1.100"/></svg>
<div class="t d" style="left:981.5px;top:701.8px;width:66px;color:#0a0a0a;letter-spacing:-0.28px;">107897</div>
<div class="t d" style="left:1052px;top:701.8px;width:72px;color:#0a0a0a;letter-spacing:-0.17px;">06T</div>
<div class="t d" style="left:1129px;top:701.8px;width:119.2px;color:#0a0a0a;letter-spacing:0.06px;">Charpentier Menuisier</div>
<div class="t d" style="left:1380px;top:701.8px;width:56.8px;color:#0a0a0a;text-align:right;letter-spacing:-0.12px;">58,00 $</div>
<div style="left:1457.7px;top:705.3px;width:13px;height:13px;background:#f4f4f4;border:1px solid #8e8f8f;box-sizing:border-box;background:linear-gradient(135deg,#dcdcdc,#fbfbfb);box-shadow:inset 0 0 0 1px #f4f4f4;"></div>
<div class="t d" style="left:1543.5px;top:701.8px;width:80px;color:#0a0a0a;text-align:right;letter-spacing:-0.17px;">557,67</div>
<div class="t d" style="left:1595px;top:701.8px;width:80px;color:#0a0a0a;text-align:right;letter-spacing:-0.17px;">0,00 %</div>
<div class="t d" style="left:1671.5px;top:701.8px;width:80px;color:#0a0a0a;text-align:right;letter-spacing:-0.17px;">0,00</div>
<div class="t d" style="left:1752.5px;top:701.8px;width:80px;color:#0a0a0a;text-align:right;letter-spacing:-0.17px;">557,67</div>
<div class="t d" style="left:1823.6px;top:701.8px;width:80px;color:#0a0a0a;text-align:right;letter-spacing:-0.17px;">32 345,00 $</div>
<div class="t d" style="left:1884.3px;top:701.8px;width:80px;color:#0a0a0a;text-align:right;letter-spacing:-0.17px;">0,00 %</div>
<div class="t d" style="left:1969.8px;top:701.8px;width:80px;color:#0a0a0a;text-align:right;letter-spacing:-0.17px;">0,00</div>
<div class="t d" style="left:2056px;top:701.8px;width:80px;color:#0a0a0a;text-align:right;letter-spacing:-0.17px;">0,00 $</div>
<div class="t d" style="left:2135.7px;top:701.8px;width:80px;color:#0a0a0a;text-align:right;letter-spacing:-0.17px;">557,67</div>
<div class="t d" style="left:2206.6px;top:701.8px;width:80px;color:#0a0a0a;text-align:right;letter-spacing:-0.17px;">32 345,00 $</div>
<div class="t d" style="left:981.5px;top:721.8px;width:66px;color:#fff;letter-spacing:0.1px;">200622Test</div>
<div class="t d" style="left:1052px;top:721.8px;width:72px;color:#fff;letter-spacing:-0.17px;"></div>
<div class="t d" style="left:1129px;top:721.8px;width:119.2px;color:#fff;letter-spacing:0.06px;">Animalerie</div>
<div class="t d" style="left:1380px;top:721.8px;width:56.8px;color:#fff;text-align:right;letter-spacing:-0.12px;">58,00 $</div>
<div style="left:1457.7px;top:725.3px;width:13px;height:13px;background:#f4f4f4;border:1px solid #8e8f8f;box-sizing:border-box;background:linear-gradient(135deg,#dcdcdc,#fbfbfb);box-shadow:inset 0 0 0 1px #f4f4f4;"></div>
<div class="t d" style="left:1543.5px;top:721.8px;width:80px;color:#fff;text-align:right;letter-spacing:-0.17px;">557,67</div>
<div class="t d" style="left:1595px;top:721.8px;width:80px;color:#fff;text-align:right;letter-spacing:-0.17px;">0,00 %</div>
<div class="t d" style="left:1671.5px;top:721.8px;width:80px;color:#fff;text-align:right;letter-spacing:-0.17px;">0,00</div>
<div class="t d" style="left:1752.5px;top:721.8px;width:80px;color:#fff;text-align:right;letter-spacing:-0.17px;">557,67</div>
<div class="t d" style="left:1823.6px;top:721.8px;width:80px;color:#fff;text-align:right;letter-spacing:-0.17px;">32 345,00 $</div>
<div class="t d" style="left:1884.3px;top:721.8px;width:80px;color:#fff;text-align:right;letter-spacing:-0.17px;">0,00 %</div>
<div class="t d" style="left:1969.8px;top:721.8px;width:80px;color:#fff;text-align:right;letter-spacing:-0.17px;">0,00</div>
<div class="t d" style="left:2056px;top:721.8px;width:80px;color:#fff;text-align:right;letter-spacing:-0.17px;">0,00 $</div>
<div class="t d" style="left:2135.7px;top:721.8px;width:80px;color:#fff;text-align:right;letter-spacing:-0.17px;">557,67</div>
<div class="t d" style="left:2206.6px;top:721.8px;width:80px;color:#fff;text-align:right;letter-spacing:-0.17px;">32 345,00 $</div>
<div class="t d" style="left:981.5px;top:741.8px;width:66px;color:#fff;letter-spacing:-0.28px;">107849</div>
<div class="t d" style="left:1052px;top:741.8px;width:72px;color:#fff;letter-spacing:-0.17px;">00W</div>
<div class="t d" style="left:1129px;top:741.8px;width:119.2px;color:#fff;letter-spacing:0.06px;">Total du projet</div>
<div class="t d" style="left:1252.2px;top:741.8px;width:101.6px;color:#fff;letter-spacing:0.05px;">Montant Forfaitaire</div>
<div class="t d" style="left:1380px;top:741.8px;width:56.8px;color:#fff;text-align:right;letter-spacing:-0.12px;">58,00 $</div>
<div style="left:1457.7px;top:745.3px;width:13px;height:13px;background:#f4f4f4;border:1px solid #8e8f8f;box-sizing:border-box;background:linear-gradient(135deg,#dcdcdc,#fbfbfb);box-shadow:inset 0 0 0 1px #f4f4f4;"></div>
<div class="t d" style="left:1543.5px;top:741.8px;width:80px;color:#fff;text-align:right;letter-spacing:-0.17px;">557,67</div>
<div class="t d" style="left:1595px;top:741.8px;width:80px;color:#fff;text-align:right;letter-spacing:-0.17px;">0,00 %</div>
<div class="t d" style="left:1671.5px;top:741.8px;width:80px;color:#fff;text-align:right;letter-spacing:-0.17px;">0,00</div>
<div class="t d" style="left:1752.5px;top:741.8px;width:80px;color:#fff;text-align:right;letter-spacing:-0.17px;">557,67</div>
<div class="t d" style="left:1823.6px;top:741.8px;width:80px;color:#fff;text-align:right;letter-spacing:-0.17px;">32 345,00 $</div>
<div class="t d" style="left:1884.3px;top:741.8px;width:80px;color:#fff;text-align:right;letter-spacing:-0.17px;">0,00 %</div>
<div class="t d" style="left:1969.8px;top:741.8px;width:80px;color:#fff;text-align:right;letter-spacing:-0.17px;">0,00</div>
<div class="t d" style="left:2056px;top:741.8px;width:80px;color:#fff;text-align:right;letter-spacing:-0.17px;">0,00 $</div>
<div class="t d" style="left:2135.7px;top:741.8px;width:80px;color:#fff;text-align:right;letter-spacing:-0.17px;">557,67</div>
<div class="t d" style="left:2206.6px;top:741.8px;width:80px;color:#fff;text-align:right;letter-spacing:-0.17px;">32 345,00 $</div>
<div class="t d" style="left:981.5px;top:761.8px;width:66px;color:#fff;letter-spacing:-0.28px;">107848</div>
<div class="t d" style="left:1052px;top:761.8px;width:72px;color:#fff;letter-spacing:-0.17px;">06W</div>
<div class="t d" style="left:1129px;top:761.8px;width:119.2px;color:#fff;letter-spacing:0.06px;">06 - Cloison &amp; plafonds</div>
<div class="t d" style="left:1380px;top:761.8px;width:56.8px;color:#fff;text-align:right;letter-spacing:-0.12px;">58,00 $</div>
<div style="left:1457.7px;top:765.3px;width:13px;height:13px;background:#f4f4f4;border:1px solid #8e8f8f;box-sizing:border-box;background:linear-gradient(135deg,#dcdcdc,#fbfbfb);box-shadow:inset 0 0 0 1px #f4f4f4;"></div>
<div class="t d" style="left:1543.5px;top:761.8px;width:80px;color:#fff;text-align:right;letter-spacing:-0.17px;">332,41</div>
<div class="t d" style="left:1595px;top:761.8px;width:80px;color:#fff;text-align:right;letter-spacing:-0.17px;">0,00 %</div>
<div class="t d" style="left:1671.5px;top:761.8px;width:80px;color:#fff;text-align:right;letter-spacing:-0.17px;">0,00</div>
<div class="t d" style="left:1752.5px;top:761.8px;width:80px;color:#fff;text-align:right;letter-spacing:-0.17px;">332,41</div>
<div class="t d" style="left:1823.6px;top:761.8px;width:80px;color:#fff;text-align:right;letter-spacing:-0.17px;">19 280,00 $</div>
<div class="t d" style="left:1884.3px;top:761.8px;width:80px;color:#fff;text-align:right;letter-spacing:-0.17px;">0,00 %</div>
<div class="t d" style="left:1969.8px;top:761.8px;width:80px;color:#fff;text-align:right;letter-spacing:-0.17px;">0,00</div>
<div class="t d" style="left:2056px;top:761.8px;width:80px;color:#fff;text-align:right;letter-spacing:-0.17px;">0,00 $</div>
<div class="t d" style="left:2135.7px;top:761.8px;width:80px;color:#fff;text-align:right;letter-spacing:-0.17px;">332,41</div>
<div class="t d" style="left:2206.6px;top:761.8px;width:80px;color:#fff;text-align:right;letter-spacing:-0.17px;">19 280,00 $</div>
<div class="t d" style="left:981.5px;top:781.8px;width:66px;color:#0a0a0a;letter-spacing:-0.28px;">107821</div>
<div class="t d" style="left:1052px;top:781.8px;width:72px;color:#0a0a0a;letter-spacing:-0.17px;">06A1-A</div>
<div class="t d" style="left:1129px;top:781.8px;width:119.2px;color:#0a0a0a;letter-spacing:0.06px;">Cloison intérieure avec</div>
<div class="t d" style="left:1380px;top:781.8px;width:56.8px;color:#0a0a0a;text-align:right;letter-spacing:-0.12px;">58,00 $</div>
<div style="left:1457.7px;top:785.3px;width:13px;height:13px;background:#f4f4f4;border:1px solid #8e8f8f;box-sizing:border-box;background:linear-gradient(135deg,#dcdcdc,#fbfbfb);box-shadow:inset 0 0 0 1px #f4f4f4;"></div>
<div class="t d" style="left:1543.5px;top:781.8px;width:80px;color:#0a0a0a;text-align:right;letter-spacing:-0.17px;">136,55</div>
<div class="t d" style="left:1595px;top:781.8px;width:80px;color:#0a0a0a;text-align:right;letter-spacing:-0.17px;">0,00 %</div>
<div class="t d" style="left:1671.5px;top:781.8px;width:80px;color:#0a0a0a;text-align:right;letter-spacing:-0.17px;">0,00</div>
<div class="t d" style="left:1752.5px;top:781.8px;width:80px;color:#0a0a0a;text-align:right;letter-spacing:-0.17px;">136,55</div>
<div class="t d" style="left:1823.6px;top:781.8px;width:80px;color:#0a0a0a;text-align:right;letter-spacing:-0.17px;">7 920,00 $</div>
<div class="t d" style="left:1884.3px;top:781.8px;width:80px;color:#0a0a0a;text-align:right;letter-spacing:-0.17px;">0,00 %</div>
<div class="t d" style="left:1969.8px;top:781.8px;width:80px;color:#0a0a0a;text-align:right;letter-spacing:-0.17px;">0,00</div>
<div class="t d" style="left:2056px;top:781.8px;width:80px;color:#0a0a0a;text-align:right;letter-spacing:-0.17px;">0,00 $</div>
<div class="t d" style="left:2135.7px;top:781.8px;width:80px;color:#0a0a0a;text-align:right;letter-spacing:-0.17px;">136,55</div>
<div class="t d" style="left:2206.6px;top:781.8px;width:80px;color:#0a0a0a;text-align:right;letter-spacing:-0.17px;">7 920,00 $</div>
<div class="t d" style="left:981.5px;top:801.8px;width:66px;color:#0a0a0a;letter-spacing:-0.28px;">107819</div>
<div class="t d" style="left:1052px;top:801.8px;width:72px;color:#0a0a0a;letter-spacing:-0.17px;">06A2</div>
<div class="t d" style="left:1129px;top:801.8px;width:119.2px;color:#0a0a0a;letter-spacing:0.06px;">Ossature de bois</div>
<div class="t d" style="left:1380px;top:801.8px;width:56.8px;color:#0a0a0a;text-align:right;letter-spacing:-0.12px;">58,00 $</div>
<div style="left:1457.7px;top:805.3px;width:13px;height:13px;background:#f4f4f4;border:1px solid #8e8f8f;box-sizing:border-box;background:linear-gradient(135deg,#dcdcdc,#fbfbfb);box-shadow:inset 0 0 0 1px #f4f4f4;"></div>
<div class="t d" style="left:1543.5px;top:801.8px;width:80px;color:#0a0a0a;text-align:right;letter-spacing:-0.17px;">136,55</div>
<div class="t d" style="left:1595px;top:801.8px;width:80px;color:#0a0a0a;text-align:right;letter-spacing:-0.17px;">0,00 %</div>
<div class="t d" style="left:1671.5px;top:801.8px;width:80px;color:#0a0a0a;text-align:right;letter-spacing:-0.17px;">0,00</div>
<div class="t d" style="left:1752.5px;top:801.8px;width:80px;color:#0a0a0a;text-align:right;letter-spacing:-0.17px;">136,55</div>
<div class="t d" style="left:1823.6px;top:801.8px;width:80px;color:#0a0a0a;text-align:right;letter-spacing:-0.17px;">7 920,00 $</div>
<div class="t d" style="left:1884.3px;top:801.8px;width:80px;color:#0a0a0a;text-align:right;letter-spacing:-0.17px;">0,00 %</div>
<div class="t d" style="left:1969.8px;top:801.8px;width:80px;color:#0a0a0a;text-align:right;letter-spacing:-0.17px;">0,00</div>
<div class="t d" style="left:2056px;top:801.8px;width:80px;color:#0a0a0a;text-align:right;letter-spacing:-0.17px;">0,00 $</div>
<div class="t d" style="left:2135.7px;top:801.8px;width:80px;color:#0a0a0a;text-align:right;letter-spacing:-0.17px;">136,55</div>
<div class="t d" style="left:2206.6px;top:801.8px;width:80px;color:#0a0a0a;text-align:right;letter-spacing:-0.17px;">7 920,00 $</div>
<div class="t d" style="left:981.5px;top:821.8px;width:66px;color:#0a0a0a;letter-spacing:-0.28px;">107897</div>
<div class="t d" style="left:1052px;top:821.8px;width:72px;color:#0a0a0a;letter-spacing:-0.17px;">06T</div>
<div class="t d" style="left:1129px;top:821.8px;width:119.2px;color:#0a0a0a;letter-spacing:0.06px;">MO - Construction Ossature</div>
<div class="t d" style="left:1380px;top:821.8px;width:56.8px;color:#0a0a0a;text-align:right;letter-spacing:-0.12px;">58,00 $</div>
<div style="left:1457.7px;top:825.3px;width:13px;height:13px;background:#f4f4f4;border:1px solid #8e8f8f;box-sizing:border-box;background:linear-gradient(135deg,#dcdcdc,#fbfbfb);box-shadow:inset 0 0 0 1px #f4f4f4;"></div>
<div class="t d" style="left:1492.8px;top:821.8px;width:75px;color:#0a0a0a;letter-spacing:0.11px;">Taux standard</div>
<div class="t d" style="left:1543.5px;top:821.8px;width:80px;color:#0a0a0a;text-align:right;letter-spacing:-0.17px;">136,55</div>
<div class="t d" style="left:1595px;top:821.8px;width:80px;color:#0a0a0a;text-align:right;letter-spacing:-0.17px;">0,00 %</div>
<div class="t d" style="left:1671.5px;top:821.8px;width:80px;color:#0a0a0a;text-align:right;letter-spacing:-0.17px;">0,00</div>
<div class="t d" style="left:1752.5px;top:821.8px;width:80px;color:#0a0a0a;text-align:right;letter-spacing:-0.17px;">136,55</div>
<div class="t d" style="left:1823.6px;top:821.8px;width:80px;color:#0a0a0a;text-align:right;letter-spacing:-0.17px;">7 920,00 $</div>
<div class="t d" style="left:1884.3px;top:821.8px;width:80px;color:#0a0a0a;text-align:right;letter-spacing:-0.17px;">0,00 %</div>
<div class="t d" style="left:1969.8px;top:821.8px;width:80px;color:#0a0a0a;text-align:right;letter-spacing:-0.17px;">0,00</div>
<div class="t d" style="left:2056px;top:821.8px;width:80px;color:#0a0a0a;text-align:right;letter-spacing:-0.17px;">0,00 $</div>
<div class="t d" style="left:2135.7px;top:821.8px;width:80px;color:#0a0a0a;text-align:right;letter-spacing:-0.17px;">136,55</div>
<div class="t d" style="left:2206.6px;top:821.8px;width:80px;color:#0a0a0a;text-align:right;letter-spacing:-0.17px;">7 920,00 $</div>
<div class="t d" style="left:981.5px;top:841.8px;width:66px;color:#0a0a0a;letter-spacing:-0.28px;">107994</div>
<div class="t d" style="left:1052px;top:841.8px;width:72px;color:#0a0a0a;letter-spacing:-0.17px;">06A1-A</div>
<div class="t d" style="left:1129px;top:841.8px;width:119.2px;color:#0a0a0a;letter-spacing:0.06px;">Mur Porteur Intérieur avec</div>
<div class="t d" style="left:1380px;top:841.8px;width:56.8px;color:#0a0a0a;text-align:right;letter-spacing:-0.12px;">58,00 $</div>
<div style="left:1457.7px;top:845.3px;width:13px;height:13px;background:#f4f4f4;border:1px solid #8e8f8f;box-sizing:border-box;background:linear-gradient(135deg,#dcdcdc,#fbfbfb);box-shadow:inset 0 0 0 1px #f4f4f4;"></div>
<div class="t d" style="left:1543.5px;top:841.8px;width:80px;color:#0a0a0a;text-align:right;letter-spacing:-0.17px;">53,79</div>
<div class="t d" style="left:1595px;top:841.8px;width:80px;color:#0a0a0a;text-align:right;letter-spacing:-0.17px;">0,00 %</div>
<div class="t d" style="left:1671.5px;top:841.8px;width:80px;color:#0a0a0a;text-align:right;letter-spacing:-0.17px;">0,00</div>
<div class="t d" style="left:1752.5px;top:841.8px;width:80px;color:#0a0a0a;text-align:right;letter-spacing:-0.17px;">53,79</div>
<div class="t d" style="left:1823.6px;top:841.8px;width:80px;color:#0a0a0a;text-align:right;letter-spacing:-0.17px;">3 120,00 $</div>
<div class="t d" style="left:1884.3px;top:841.8px;width:80px;color:#0a0a0a;text-align:right;letter-spacing:-0.17px;">0,00 %</div>
<div class="t d" style="left:1969.8px;top:841.8px;width:80px;color:#0a0a0a;text-align:right;letter-spacing:-0.17px;">0,00</div>
<div class="t d" style="left:2056px;top:841.8px;width:80px;color:#0a0a0a;text-align:right;letter-spacing:-0.17px;">0,00 $</div>
<div class="t d" style="left:2135.7px;top:841.8px;width:80px;color:#0a0a0a;text-align:right;letter-spacing:-0.17px;">53,79</div>
<div class="t d" style="left:2206.6px;top:841.8px;width:80px;color:#0a0a0a;text-align:right;letter-spacing:-0.17px;">3 120,00 $</div>
<div class="t d" style="left:981.5px;top:861.8px;width:66px;color:#0a0a0a;letter-spacing:-0.28px;">107819</div>
<div class="t d" style="left:1052px;top:861.8px;width:72px;color:#0a0a0a;letter-spacing:-0.17px;">06A2</div>
<div class="t d" style="left:1129px;top:861.8px;width:119.2px;color:#0a0a0a;letter-spacing:0.06px;">Ossature de bois</div>
<div class="t d" style="left:1380px;top:861.8px;width:56.8px;color:#0a0a0a;text-align:right;letter-spacing:-0.12px;">58,00 $</div>
<div style="left:1457.7px;top:865.3px;width:13px;height:13px;background:#f4f4f4;border:1px solid #8e8f8f;box-sizing:border-box;background:linear-gradient(135deg,#dcdcdc,#fbfbfb);box-shadow:inset 0 0 0 1px #f4f4f4;"></div>
<div class="t d" style="left:1543.5px;top:861.8px;width:80px;color:#0a0a0a;text-align:right;letter-spacing:-0.17px;">53,79</div>
<div class="t d" style="left:1595px;top:861.8px;width:80px;color:#0a0a0a;text-align:right;letter-spacing:-0.17px;">0,00 %</div>
<div class="t d" style="left:1671.5px;top:861.8px;width:80px;color:#0a0a0a;text-align:right;letter-spacing:-0.17px;">0,00</div>
<div class="t d" style="left:1752.5px;top:861.8px;width:80px;color:#0a0a0a;text-align:right;letter-spacing:-0.17px;">53,79</div>
<div class="t d" style="left:1823.6px;top:861.8px;width:80px;color:#0a0a0a;text-align:right;letter-spacing:-0.17px;">3 120,00 $</div>
<div class="t d" style="left:1884.3px;top:861.8px;width:80px;color:#0a0a0a;text-align:right;letter-spacing:-0.17px;">0,00 %</div>
<div class="t d" style="left:1969.8px;top:861.8px;width:80px;color:#0a0a0a;text-align:right;letter-spacing:-0.17px;">0,00</div>
<div class="t d" style="left:2056px;top:861.8px;width:80px;color:#0a0a0a;text-align:right;letter-spacing:-0.17px;">0,00 $</div>
<div class="t d" style="left:2135.7px;top:861.8px;width:80px;color:#0a0a0a;text-align:right;letter-spacing:-0.17px;">53,79</div>
<div class="t d" style="left:2206.6px;top:861.8px;width:80px;color:#0a0a0a;text-align:right;letter-spacing:-0.17px;">3 120,00 $</div>
<div class="t d" style="left:981.5px;top:881.8px;width:66px;color:#0a0a0a;letter-spacing:-0.28px;">107897</div>
<div class="t d" style="left:1052px;top:881.8px;width:72px;color:#0a0a0a;letter-spacing:-0.17px;">06T</div>
<div class="t d" style="left:1129px;top:881.8px;width:119.2px;color:#0a0a0a;letter-spacing:0.06px;">MO - Construction Ossature</div>
<div class="t d" style="left:1380px;top:881.8px;width:56.8px;color:#0a0a0a;text-align:right;letter-spacing:-0.12px;">58,00 $</div>
<div style="left:1457.7px;top:885.3px;width:13px;height:13px;background:#f4f4f4;border:1px solid #8e8f8f;box-sizing:border-box;background:linear-gradient(135deg,#dcdcdc,#fbfbfb);box-shadow:inset 0 0 0 1px #f4f4f4;"></div>
<div class="t d" style="left:1492.8px;top:881.8px;width:75px;color:#0a0a0a;letter-spacing:0.11px;">Taux standard</div>
<div class="t d" style="left:1543.5px;top:881.8px;width:80px;color:#0a0a0a;text-align:right;letter-spacing:-0.17px;">26,90</div>
<div class="t d" style="left:1595px;top:881.8px;width:80px;color:#0a0a0a;text-align:right;letter-spacing:-0.17px;">0,00 %</div>
<div class="t d" style="left:1671.5px;top:881.8px;width:80px;color:#0a0a0a;text-align:right;letter-spacing:-0.17px;">0,00</div>
<div class="t d" style="left:1752.5px;top:881.8px;width:80px;color:#0a0a0a;text-align:right;letter-spacing:-0.17px;">26,90</div>
<div class="t d" style="left:1823.6px;top:881.8px;width:80px;color:#0a0a0a;text-align:right;letter-spacing:-0.17px;">1 560,00 $</div>
<div class="t d" style="left:1884.3px;top:881.8px;width:80px;color:#0a0a0a;text-align:right;letter-spacing:-0.17px;">0,00 %</div>
<div class="t d" style="left:1969.8px;top:881.8px;width:80px;color:#0a0a0a;text-align:right;letter-spacing:-0.17px;">0,00</div>
<div class="t d" style="left:2056px;top:881.8px;width:80px;color:#0a0a0a;text-align:right;letter-spacing:-0.17px;">0,00 $</div>
<div class="t d" style="left:2135.7px;top:881.8px;width:80px;color:#0a0a0a;text-align:right;letter-spacing:-0.17px;">26,90</div>
<div class="t d" style="left:2206.6px;top:881.8px;width:80px;color:#0a0a0a;text-align:right;letter-spacing:-0.17px;">1 560,00 $</div>
<div class="t d" style="left:981.5px;top:901.8px;width:66px;color:#0a0a0a;letter-spacing:-0.28px;">108402</div>
<div class="t d" style="left:1052px;top:901.8px;width:72px;color:#0a0a0a;letter-spacing:-0.17px;">06A2</div>
<div class="t d" style="left:1129px;top:901.8px;width:119.2px;color:#0a0a0a;letter-spacing:0.06px;">Ossature  de bois parapet</div>
<div class="t d" style="left:1380px;top:901.8px;width:56.8px;color:#0a0a0a;text-align:right;letter-spacing:-0.12px;">58,00 $</div>
<div style="left:1457.7px;top:905.3px;width:13px;height:13px;background:#f4f4f4;border:1px solid #8e8f8f;box-sizing:border-box;background:linear-gradient(135deg,#dcdcdc,#fbfbfb);box-shadow:inset 0 0 0 1px #f4f4f4;"></div>
<div class="t d" style="left:1543.5px;top:901.8px;width:80px;color:#0a0a0a;text-align:right;letter-spacing:-0.17px;">26,90</div>
<div class="t d" style="left:1595px;top:901.8px;width:80px;color:#0a0a0a;text-align:right;letter-spacing:-0.17px;">0,00 %</div>
<div class="t d" style="left:1671.5px;top:901.8px;width:80px;color:#0a0a0a;text-align:right;letter-spacing:-0.17px;">0,00</div>
<div class="t d" style="left:1752.5px;top:901.8px;width:80px;color:#0a0a0a;text-align:right;letter-spacing:-0.17px;">26,90</div>
<div class="t d" style="left:1823.6px;top:901.8px;width:80px;color:#0a0a0a;text-align:right;letter-spacing:-0.17px;">1 560,00 $</div>
<div class="t d" style="left:1884.3px;top:901.8px;width:80px;color:#0a0a0a;text-align:right;letter-spacing:-0.17px;">0,00 %</div>
<div class="t d" style="left:1969.8px;top:901.8px;width:80px;color:#0a0a0a;text-align:right;letter-spacing:-0.17px;">0,00</div>
<div class="t d" style="left:2056px;top:901.8px;width:80px;color:#0a0a0a;text-align:right;letter-spacing:-0.17px;">0,00 $</div>
<div class="t d" style="left:2135.7px;top:901.8px;width:80px;color:#0a0a0a;text-align:right;letter-spacing:-0.17px;">26,90</div>
<div class="t d" style="left:2206.6px;top:901.8px;width:80px;color:#0a0a0a;text-align:right;letter-spacing:-0.17px;">1 560,00 $</div>
<div class="t d" style="left:981.5px;top:921.8px;width:66px;color:#0a0a0a;letter-spacing:-0.28px;">107897</div>
<div class="t d" style="left:1052px;top:921.8px;width:72px;color:#0a0a0a;letter-spacing:-0.17px;">06T</div>
<div class="t d" style="left:1129px;top:921.8px;width:119.2px;color:#0a0a0a;letter-spacing:0.06px;">MO - Construction Ossature</div>
<div class="t d" style="left:1380px;top:921.8px;width:56.8px;color:#0a0a0a;text-align:right;letter-spacing:-0.12px;">58,00 $</div>
<div style="left:1457.7px;top:925.3px;width:13px;height:13px;background:#f4f4f4;border:1px solid #8e8f8f;box-sizing:border-box;background:linear-gradient(135deg,#dcdcdc,#fbfbfb);box-shadow:inset 0 0 0 1px #f4f4f4;"></div>
<div class="t d" style="left:1492.8px;top:921.8px;width:75px;color:#0a0a0a;letter-spacing:0.11px;">Taux standard</div>
<div class="t d" style="left:1543.5px;top:921.8px;width:80px;color:#0a0a0a;text-align:right;letter-spacing:-0.17px;">26,90</div>
<div class="t d" style="left:1595px;top:921.8px;width:80px;color:#0a0a0a;text-align:right;letter-spacing:-0.17px;">0,00 %</div>
<div class="t d" style="left:1671.5px;top:921.8px;width:80px;color:#0a0a0a;text-align:right;letter-spacing:-0.17px;">0,00</div>
<div class="t d" style="left:1752.5px;top:921.8px;width:80px;color:#0a0a0a;text-align:right;letter-spacing:-0.17px;">26,90</div>
<div class="t d" style="left:1823.6px;top:921.8px;width:80px;color:#0a0a0a;text-align:right;letter-spacing:-0.17px;">1 560,00 $</div>
<div class="t d" style="left:1884.3px;top:921.8px;width:80px;color:#0a0a0a;text-align:right;letter-spacing:-0.17px;">0,00 %</div>
<div class="t d" style="left:1969.8px;top:921.8px;width:80px;color:#0a0a0a;text-align:right;letter-spacing:-0.17px;">0,00</div>
<div class="t d" style="left:2056px;top:921.8px;width:80px;color:#0a0a0a;text-align:right;letter-spacing:-0.17px;">0,00 $</div>
<div class="t d" style="left:2135.7px;top:921.8px;width:80px;color:#0a0a0a;text-align:right;letter-spacing:-0.17px;">26,90</div>
<div class="t d" style="left:2206.6px;top:921.8px;width:80px;color:#0a0a0a;text-align:right;letter-spacing:-0.17px;">1 560,00 $</div>
<div class="t d" style="left:981.5px;top:941.8px;width:66px;color:#0a0a0a;letter-spacing:-0.28px;">108178</div>
<div class="t d" style="left:1052px;top:941.8px;width:72px;color:#0a0a0a;letter-spacing:-0.17px;">06A1-A</div>
<div class="t d" style="left:1129px;top:941.8px;width:119.2px;color:#0a0a0a;letter-spacing:0.06px;">Mur Sous-sol 2 X 4 Laine</div>
<div class="t d" style="left:1380px;top:941.8px;width:56.8px;color:#0a0a0a;text-align:right;letter-spacing:-0.12px;">58,00 $</div>
<div style="left:1457.7px;top:945.3px;width:13px;height:13px;background:#f4f4f4;border:1px solid #8e8f8f;box-sizing:border-box;background:linear-gradient(135deg,#dcdcdc,#fbfbfb);box-shadow:inset 0 0 0 1px #f4f4f4;"></div>
<div class="t d" style="left:1543.5px;top:941.8px;width:80px;color:#0a0a0a;text-align:right;letter-spacing:-0.17px;">142,07</div>
<div class="t d" style="left:1595px;top:941.8px;width:80px;color:#0a0a0a;text-align:right;letter-spacing:-0.17px;">0,00 %</div>
<div class="t d" style="left:1671.5px;top:941.8px;width:80px;color:#0a0a0a;text-align:right;letter-spacing:-0.17px;">0,00</div>
<div class="t d" style="left:1752.5px;top:941.8px;width:80px;color:#0a0a0a;text-align:right;letter-spacing:-0.17px;">142,07</div>
<div class="t d" style="left:1823.6px;top:941.8px;width:80px;color:#0a0a0a;text-align:right;letter-spacing:-0.17px;">8 240,00 $</div>
<div class="t d" style="left:1884.3px;top:941.8px;width:80px;color:#0a0a0a;text-align:right;letter-spacing:-0.17px;">0,00 %</div>
<div class="t d" style="left:1969.8px;top:941.8px;width:80px;color:#0a0a0a;text-align:right;letter-spacing:-0.17px;">0,00</div>
<div class="t d" style="left:2056px;top:941.8px;width:80px;color:#0a0a0a;text-align:right;letter-spacing:-0.17px;">0,00 $</div>
<div class="t d" style="left:2135.7px;top:941.8px;width:80px;color:#0a0a0a;text-align:right;letter-spacing:-0.17px;">142,07</div>
<div class="t d" style="left:2206.6px;top:941.8px;width:80px;color:#0a0a0a;text-align:right;letter-spacing:-0.17px;">8 240,00 $</div>
<div class="t d" style="left:981.5px;top:961.8px;width:66px;color:#0a0a0a;letter-spacing:-0.28px;">107819</div>
<div class="t d" style="left:1052px;top:961.8px;width:72px;color:#0a0a0a;letter-spacing:-0.17px;">06A2</div>
<div class="t d" style="left:1129px;top:961.8px;width:119.2px;color:#0a0a0a;letter-spacing:0.06px;">Ossature de bois</div>
<div class="t d" style="left:1380px;top:961.8px;width:56.8px;color:#0a0a0a;text-align:right;letter-spacing:-0.12px;">58,00 $</div>
<div style="left:1457.7px;top:965.3px;width:13px;height:13px;background:#f4f4f4;border:1px solid #8e8f8f;box-sizing:border-box;background:linear-gradient(135deg,#dcdcdc,#fbfbfb);box-shadow:inset 0 0 0 1px #f4f4f4;"></div>
<div class="t d" style="left:1543.5px;top:961.8px;width:80px;color:#0a0a0a;text-align:right;letter-spacing:-0.17px;">142,07</div>
<div class="t d" style="left:1595px;top:961.8px;width:80px;color:#0a0a0a;text-align:right;letter-spacing:-0.17px;">0,00 %</div>
<div class="t d" style="left:1671.5px;top:961.8px;width:80px;color:#0a0a0a;text-align:right;letter-spacing:-0.17px;">0,00</div>
<div class="t d" style="left:1752.5px;top:961.8px;width:80px;color:#0a0a0a;text-align:right;letter-spacing:-0.17px;">142,07</div>
<div class="t d" style="left:1823.6px;top:961.8px;width:80px;color:#0a0a0a;text-align:right;letter-spacing:-0.17px;">8 240,00 $</div>
<div class="t d" style="left:1884.3px;top:961.8px;width:80px;color:#0a0a0a;text-align:right;letter-spacing:-0.17px;">0,00 %</div>
<div class="t d" style="left:1969.8px;top:961.8px;width:80px;color:#0a0a0a;text-align:right;letter-spacing:-0.17px;">0,00</div>
<div class="t d" style="left:2056px;top:961.8px;width:80px;color:#0a0a0a;text-align:right;letter-spacing:-0.17px;">0,00 $</div>
<div class="t d" style="left:2135.7px;top:961.8px;width:80px;color:#0a0a0a;text-align:right;letter-spacing:-0.17px;">142,07</div>
<div class="t d" style="left:2206.6px;top:961.8px;width:80px;color:#0a0a0a;text-align:right;letter-spacing:-0.17px;">8 240,00 $</div>
<div class="t d" style="left:981.5px;top:981.8px;width:66px;color:#0a0a0a;letter-spacing:-0.28px;">107897</div>
<div class="t d" style="left:1052px;top:981.8px;width:72px;color:#0a0a0a;letter-spacing:-0.17px;">06T</div>
<div class="t d" style="left:1129px;top:981.8px;width:119.2px;color:#0a0a0a;letter-spacing:0.06px;">MO - Construction Ossature</div>
<div class="t d" style="left:1380px;top:981.8px;width:56.8px;color:#0a0a0a;text-align:right;letter-spacing:-0.12px;">58,00 $</div>
<div style="left:1457.7px;top:985.3px;width:13px;height:13px;background:#f4f4f4;border:1px solid #8e8f8f;box-sizing:border-box;background:linear-gradient(135deg,#dcdcdc,#fbfbfb);box-shadow:inset 0 0 0 1px #f4f4f4;"></div>
<div class="t d" style="left:1492.8px;top:981.8px;width:75px;color:#0a0a0a;letter-spacing:0.11px;">Taux standard</div>
<div class="t d" style="left:1543.5px;top:981.8px;width:80px;color:#0a0a0a;text-align:right;letter-spacing:-0.17px;">71,03</div>
<div class="t d" style="left:1595px;top:981.8px;width:80px;color:#0a0a0a;text-align:right;letter-spacing:-0.17px;">0,00 %</div>
<div class="t d" style="left:1671.5px;top:981.8px;width:80px;color:#0a0a0a;text-align:right;letter-spacing:-0.17px;">0,00</div>
<div class="t d" style="left:1752.5px;top:981.8px;width:80px;color:#0a0a0a;text-align:right;letter-spacing:-0.17px;">71,03</div>
<div class="t d" style="left:1823.6px;top:981.8px;width:80px;color:#0a0a0a;text-align:right;letter-spacing:-0.17px;">4 120,00 $</div>
<div class="t d" style="left:1884.3px;top:981.8px;width:80px;color:#0a0a0a;text-align:right;letter-spacing:-0.17px;">0,00 %</div>
<div class="t d" style="left:1969.8px;top:981.8px;width:80px;color:#0a0a0a;text-align:right;letter-spacing:-0.17px;">0,00</div>
<div class="t d" style="left:2056px;top:981.8px;width:80px;color:#0a0a0a;text-align:right;letter-spacing:-0.17px;">0,00 $</div>
<div class="t d" style="left:2135.7px;top:981.8px;width:80px;color:#0a0a0a;text-align:right;letter-spacing:-0.17px;">71,03</div>
<div class="t d" style="left:2206.6px;top:981.8px;width:80px;color:#0a0a0a;text-align:right;letter-spacing:-0.17px;">4 120,00 $</div>
<div class="t d" style="left:981.5px;top:1001.8px;width:66px;color:#0a0a0a;letter-spacing:-0.28px;">108402</div>
<div class="t d" style="left:1052px;top:1001.8px;width:72px;color:#0a0a0a;letter-spacing:-0.17px;">06A2</div>
<div class="t d" style="left:1129px;top:1001.8px;width:119.2px;color:#0a0a0a;letter-spacing:0.06px;">Ossature  de bois parapet</div>
<div class="t d" style="left:1380px;top:1001.8px;width:56.8px;color:#0a0a0a;text-align:right;letter-spacing:-0.12px;">58,00 $</div>
<div style="left:1457.7px;top:1005.3px;width:13px;height:13px;background:#f4f4f4;border:1px solid #8e8f8f;box-sizing:border-box;background:linear-gradient(135deg,#dcdcdc,#fbfbfb);box-shadow:inset 0 0 0 1px #f4f4f4;"></div>
<div class="t d" style="left:1543.5px;top:1001.8px;width:80px;color:#0a0a0a;text-align:right;letter-spacing:-0.17px;">71,03</div>
<div class="t d" style="left:1595px;top:1001.8px;width:80px;color:#0a0a0a;text-align:right;letter-spacing:-0.17px;">0,00 %</div>
<div class="t d" style="left:1671.5px;top:1001.8px;width:80px;color:#0a0a0a;text-align:right;letter-spacing:-0.17px;">0,00</div>
<div class="t d" style="left:1752.5px;top:1001.8px;width:80px;color:#0a0a0a;text-align:right;letter-spacing:-0.17px;">71,03</div>
<div class="t d" style="left:1823.6px;top:1001.8px;width:80px;color:#0a0a0a;text-align:right;letter-spacing:-0.17px;">4 120,00 $</div>
<div class="t d" style="left:1884.3px;top:1001.8px;width:80px;color:#0a0a0a;text-align:right;letter-spacing:-0.17px;">0,00 %</div>
<div class="t d" style="left:1969.8px;top:1001.8px;width:80px;color:#0a0a0a;text-align:right;letter-spacing:-0.17px;">0,00</div>
<div class="t d" style="left:2056px;top:1001.8px;width:80px;color:#0a0a0a;text-align:right;letter-spacing:-0.17px;">0,00 $</div>
<div class="t d" style="left:2135.7px;top:1001.8px;width:80px;color:#0a0a0a;text-align:right;letter-spacing:-0.17px;">71,03</div>
<div class="t d" style="left:2206.6px;top:1001.8px;width:80px;color:#0a0a0a;text-align:right;letter-spacing:-0.17px;">4 120,00 $</div>
<div class="t d" style="left:981.5px;top:1021.8px;width:66px;color:#0a0a0a;letter-spacing:-0.28px;">107897</div>
<div class="t d" style="left:1052px;top:1021.8px;width:72px;color:#0a0a0a;letter-spacing:-0.17px;">06T</div>
<div class="t d" style="left:1129px;top:1021.8px;width:119.2px;color:#0a0a0a;letter-spacing:0.06px;">MO - Construction Ossature</div>
<div class="t d" style="left:1380px;top:1021.8px;width:56.8px;color:#0a0a0a;text-align:right;letter-spacing:-0.12px;">58,00 $</div>
<div style="left:1457.7px;top:1025.3px;width:13px;height:13px;background:#f4f4f4;border:1px solid #8e8f8f;box-sizing:border-box;background:linear-gradient(135deg,#dcdcdc,#fbfbfb);box-shadow:inset 0 0 0 1px #f4f4f4;"></div>
<div class="t d" style="left:1492.8px;top:1021.8px;width:75px;color:#0a0a0a;letter-spacing:0.11px;">Taux standard</div>
<div class="t d" style="left:1543.5px;top:1021.8px;width:80px;color:#0a0a0a;text-align:right;letter-spacing:-0.17px;">71,03</div>
<div class="t d" style="left:1595px;top:1021.8px;width:80px;color:#0a0a0a;text-align:right;letter-spacing:-0.17px;">0,00 %</div>
<div class="t d" style="left:1671.5px;top:1021.8px;width:80px;color:#0a0a0a;text-align:right;letter-spacing:-0.17px;">0,00</div>
<div class="t d" style="left:1752.5px;top:1021.8px;width:80px;color:#0a0a0a;text-align:right;letter-spacing:-0.17px;">71,03</div>
<div class="t d" style="left:1823.6px;top:1021.8px;width:80px;color:#0a0a0a;text-align:right;letter-spacing:-0.17px;">4 120,00 $</div>
<div class="t d" style="left:1884.3px;top:1021.8px;width:80px;color:#0a0a0a;text-align:right;letter-spacing:-0.17px;">0,00 %</div>
<div class="t d" style="left:1969.8px;top:1021.8px;width:80px;color:#0a0a0a;text-align:right;letter-spacing:-0.17px;">0,00</div>
<div class="t d" style="left:2056px;top:1021.8px;width:80px;color:#0a0a0a;text-align:right;letter-spacing:-0.17px;">0,00 $</div>
<div class="t d" style="left:2135.7px;top:1021.8px;width:80px;color:#0a0a0a;text-align:right;letter-spacing:-0.17px;">71,03</div>
<div class="t d" style="left:2206.6px;top:1021.8px;width:80px;color:#0a0a0a;text-align:right;letter-spacing:-0.17px;">4 120,00 $</div>
<div class="t d" style="left:981.5px;top:1041.8px;width:66px;color:#fff;letter-spacing:-0.28px;">103857</div>
<div class="t d" style="left:1052px;top:1041.8px;width:72px;color:#fff;letter-spacing:-0.17px;">06W</div>
<div class="t d" style="left:1129px;top:1041.8px;width:119.2px;color:#fff;letter-spacing:0.06px;">06 - Mur Extérieur</div>
<div class="t d" style="left:1380px;top:1041.8px;width:56.8px;color:#fff;text-align:right;letter-spacing:-0.12px;">58,00 $</div>
<div style="left:1457.7px;top:1045.3px;width:13px;height:13px;background:#f4f4f4;border:1px solid #8e8f8f;box-sizing:border-box;background:linear-gradient(135deg,#dcdcdc,#fbfbfb);box-shadow:inset 0 0 0 1px #f4f4f4;"></div>
<div class="t d" style="left:1543.5px;top:1041.8px;width:80px;color:#fff;text-align:right;letter-spacing:-0.17px;">209,48</div>
<div class="t d" style="left:1595px;top:1041.8px;width:80px;color:#fff;text-align:right;letter-spacing:-0.17px;">0,00 %</div>
<div class="t d" style="left:1671.5px;top:1041.8px;width:80px;color:#fff;text-align:right;letter-spacing:-0.17px;">0,00</div>
<div class="t d" style="left:1752.5px;top:1041.8px;width:80px;color:#fff;text-align:right;letter-spacing:-0.17px;">209,48</div>
<div class="t d" style="left:1823.6px;top:1041.8px;width:80px;color:#fff;text-align:right;letter-spacing:-0.17px;">12 150,00 $</div>
<div class="t d" style="left:1884.3px;top:1041.8px;width:80px;color:#fff;text-align:right;letter-spacing:-0.17px;">0,00 %</div>
<div class="t d" style="left:1969.8px;top:1041.8px;width:80px;color:#fff;text-align:right;letter-spacing:-0.17px;">0,00</div>
<div class="t d" style="left:2056px;top:1041.8px;width:80px;color:#fff;text-align:right;letter-spacing:-0.17px;">0,00 $</div>
<div class="t d" style="left:2135.7px;top:1041.8px;width:80px;color:#fff;text-align:right;letter-spacing:-0.17px;">209,48</div>
<div class="t d" style="left:2206.6px;top:1041.8px;width:80px;color:#fff;text-align:right;letter-spacing:-0.17px;">12 150,00 $</div>
<div class="t d" style="left:981.5px;top:1061.8px;width:66px;color:#0a0a0a;letter-spacing:-0.28px;">107813</div>
<div class="t d" style="left:1052px;top:1061.8px;width:72px;color:#0a0a0a;letter-spacing:-0.17px;">06A1</div>
<div class="t d" style="left:1129px;top:1061.8px;width:119.2px;color:#0a0a0a;letter-spacing:0.06px;">Mur extérieur avec DIM</div>
<div class="t d" style="left:1380px;top:1061.8px;width:56.8px;color:#0a0a0a;text-align:right;letter-spacing:-0.12px;">58,00 $</div>
<div style="left:1457.7px;top:1065.3px;width:13px;height:13px;background:#f4f4f4;border:1px solid #8e8f8f;box-sizing:border-box;background:linear-gradient(135deg,#dcdcdc,#fbfbfb);box-shadow:inset 0 0 0 1px #f4f4f4;"></div>
<div class="t d" style="left:1543.5px;top:1061.8px;width:80px;color:#0a0a0a;text-align:right;letter-spacing:-0.17px;">201,72</div>
<div class="t d" style="left:1595px;top:1061.8px;width:80px;color:#0a0a0a;text-align:right;letter-spacing:-0.17px;">0,00 %</div>
<div class="t d" style="left:1671.5px;top:1061.8px;width:80px;color:#0a0a0a;text-align:right;letter-spacing:-0.17px;">0,00</div>
<div class="t d" style="left:1752.5px;top:1061.8px;width:80px;color:#0a0a0a;text-align:right;letter-spacing:-0.17px;">201,72</div>
<div class="t d" style="left:1823.6px;top:1061.8px;width:80px;color:#0a0a0a;text-align:right;letter-spacing:-0.17px;">11 700,00 $</div>
<div class="t d" style="left:1884.3px;top:1061.8px;width:80px;color:#0a0a0a;text-align:right;letter-spacing:-0.17px;">0,00 %</div>
<div class="t d" style="left:1969.8px;top:1061.8px;width:80px;color:#0a0a0a;text-align:right;letter-spacing:-0.17px;">0,00</div>
<div class="t d" style="left:2056px;top:1061.8px;width:80px;color:#0a0a0a;text-align:right;letter-spacing:-0.17px;">0,00 $</div>
<div class="t d" style="left:2135.7px;top:1061.8px;width:80px;color:#0a0a0a;text-align:right;letter-spacing:-0.17px;">201,72</div>
<div class="t d" style="left:2206.6px;top:1061.8px;width:80px;color:#0a0a0a;text-align:right;letter-spacing:-0.17px;">11 700,00 $</div>
<div class="t d" style="left:981.5px;top:1081.8px;width:66px;color:#0a0a0a;letter-spacing:-0.28px;">107819</div>
<div class="t d" style="left:1052px;top:1081.8px;width:72px;color:#0a0a0a;letter-spacing:-0.17px;">06A2</div>
<div class="t d" style="left:1129px;top:1081.8px;width:119.2px;color:#0a0a0a;letter-spacing:0.06px;">Ossature de bois</div>
<div class="t d" style="left:1380px;top:1081.8px;width:56.8px;color:#0a0a0a;text-align:right;letter-spacing:-0.12px;">58,00 $</div>
<div style="left:1457.7px;top:1085.3px;width:13px;height:13px;background:#f4f4f4;border:1px solid #8e8f8f;box-sizing:border-box;background:linear-gradient(135deg,#dcdcdc,#fbfbfb);box-shadow:inset 0 0 0 1px #f4f4f4;"></div>
<div class="t d" style="left:1543.5px;top:1081.8px;width:80px;color:#0a0a0a;text-align:right;letter-spacing:-0.17px;">201,72</div>
<div class="t d" style="left:1595px;top:1081.8px;width:80px;color:#0a0a0a;text-align:right;letter-spacing:-0.17px;">0,00 %</div>
<div class="t d" style="left:1671.5px;top:1081.8px;width:80px;color:#0a0a0a;text-align:right;letter-spacing:-0.17px;">0,00</div>
<div class="t d" style="left:1752.5px;top:1081.8px;width:80px;color:#0a0a0a;text-align:right;letter-spacing:-0.17px;">201,72</div>
<div class="t d" style="left:1823.6px;top:1081.8px;width:80px;color:#0a0a0a;text-align:right;letter-spacing:-0.17px;">11 700,00 $</div>
<div class="t d" style="left:1884.3px;top:1081.8px;width:80px;color:#0a0a0a;text-align:right;letter-spacing:-0.17px;">0,00 %</div>
<div class="t d" style="left:1969.8px;top:1081.8px;width:80px;color:#0a0a0a;text-align:right;letter-spacing:-0.17px;">0,00</div>
<div class="t d" style="left:2056px;top:1081.8px;width:80px;color:#0a0a0a;text-align:right;letter-spacing:-0.17px;">0,00 $</div>
<div class="t d" style="left:2135.7px;top:1081.8px;width:80px;color:#0a0a0a;text-align:right;letter-spacing:-0.17px;">201,72</div>
<div class="t d" style="left:2206.6px;top:1081.8px;width:80px;color:#0a0a0a;text-align:right;letter-spacing:-0.17px;">11 700,00 $</div>
<div class="t d" style="left:981.5px;top:1101.8px;width:66px;color:#0a0a0a;letter-spacing:-0.28px;">107897</div>
<div class="t d" style="left:1052px;top:1101.8px;width:72px;color:#0a0a0a;letter-spacing:-0.17px;">06T</div>
<div class="t d" style="left:1129px;top:1101.8px;width:119.2px;color:#0a0a0a;letter-spacing:0.06px;">MO - Construction Ossature</div>
<div class="t d" style="left:1380px;top:1101.8px;width:56.8px;color:#0a0a0a;text-align:right;letter-spacing:-0.12px;">58,00 $</div>
<div style="left:1457.7px;top:1105.3px;width:13px;height:13px;background:#f4f4f4;border:1px solid #8e8f8f;box-sizing:border-box;background:linear-gradient(135deg,#dcdcdc,#fbfbfb);box-shadow:inset 0 0 0 1px #f4f4f4;"></div>
<div class="t d" style="left:1492.8px;top:1101.8px;width:75px;color:#0a0a0a;letter-spacing:0.11px;">Taux standard</div>
<div class="t d" style="left:1543.5px;top:1101.8px;width:80px;color:#0a0a0a;text-align:right;letter-spacing:-0.17px;">201,72</div>
<div class="t d" style="left:1595px;top:1101.8px;width:80px;color:#0a0a0a;text-align:right;letter-spacing:-0.17px;">0,00 %</div>
<div class="t d" style="left:1671.5px;top:1101.8px;width:80px;color:#0a0a0a;text-align:right;letter-spacing:-0.17px;">0,00</div>
<div class="t d" style="left:1752.5px;top:1101.8px;width:80px;color:#0a0a0a;text-align:right;letter-spacing:-0.17px;">201,72</div>
<div class="t d" style="left:1823.6px;top:1101.8px;width:80px;color:#0a0a0a;text-align:right;letter-spacing:-0.17px;">11 700,00 $</div>
<div class="t d" style="left:1884.3px;top:1101.8px;width:80px;color:#0a0a0a;text-align:right;letter-spacing:-0.17px;">0,00 %</div>
<div class="t d" style="left:1969.8px;top:1101.8px;width:80px;color:#0a0a0a;text-align:right;letter-spacing:-0.17px;">0,00</div>
<div class="t d" style="left:2056px;top:1101.8px;width:80px;color:#0a0a0a;text-align:right;letter-spacing:-0.17px;">0,00 $</div>
<div class="t d" style="left:2135.7px;top:1101.8px;width:80px;color:#0a0a0a;text-align:right;letter-spacing:-0.17px;">201,72</div>
<div class="t d" style="left:2206.6px;top:1101.8px;width:80px;color:#0a0a0a;text-align:right;letter-spacing:-0.17px;">11 700,00 $</div>
<div class="t d" style="left:981.5px;top:1121.8px;width:66px;color:#0a0a0a;letter-spacing:-0.28px;">108399</div>
<div class="t d" style="left:1052px;top:1121.8px;width:72px;color:#0a0a0a;letter-spacing:-0.17px;">06A1</div>
<div class="t d" style="left:1129px;top:1121.8px;width:119.2px;color:#0a0a0a;letter-spacing:0.06px;">Parapet bois traité DIM</div>
<div class="t d" style="left:1252.2px;top:1121.8px;width:101.6px;color:#0a0a0a;letter-spacing:0.05px;">Boitier coupe 1 plan ..</div>
<div class="t d" style="left:1380px;top:1121.8px;width:56.8px;color:#0a0a0a;text-align:right;letter-spacing:-0.12px;">58,00 $</div>
<div style="left:1457.7px;top:1125.3px;width:13px;height:13px;background:#f4f4f4;border:1px solid #8e8f8f;box-sizing:border-box;background:linear-gradient(135deg,#dcdcdc,#fbfbfb);box-shadow:inset 0 0 0 1px #f4f4f4;"></div>
<div class="t d" style="left:1543.5px;top:1121.8px;width:80px;color:#0a0a0a;text-align:right;letter-spacing:-0.17px;">7,76</div>
<div class="t d" style="left:1595px;top:1121.8px;width:80px;color:#0a0a0a;text-align:right;letter-spacing:-0.17px;">0,00 %</div>
<div class="t d" style="left:1671.5px;top:1121.8px;width:80px;color:#0a0a0a;text-align:right;letter-spacing:-0.17px;">0,00</div>
<div class="t d" style="left:1752.5px;top:1121.8px;width:80px;color:#0a0a0a;text-align:right;letter-spacing:-0.17px;">7,76</div>
<div class="t d" style="left:1823.6px;top:1121.8px;width:80px;color:#0a0a0a;text-align:right;letter-spacing:-0.17px;">450,00 $</div>
<div class="t d" style="left:1884.3px;top:1121.8px;width:80px;color:#0a0a0a;text-align:right;letter-spacing:-0.17px;">0,00 %</div>
<div class="t d" style="left:1969.8px;top:1121.8px;width:80px;color:#0a0a0a;text-align:right;letter-spacing:-0.17px;">0,00</div>
<div class="t d" style="left:2056px;top:1121.8px;width:80px;color:#0a0a0a;text-align:right;letter-spacing:-0.17px;">0,00 $</div>
<div class="t d" style="left:2135.7px;top:1121.8px;width:80px;color:#0a0a0a;text-align:right;letter-spacing:-0.17px;">7,76</div>
<div class="t d" style="left:2206.6px;top:1121.8px;width:80px;color:#0a0a0a;text-align:right;letter-spacing:-0.17px;">450,00 $</div>
<div class="t d" style="left:981.5px;top:1141.8px;width:66px;color:#0a0a0a;letter-spacing:-0.28px;">108402</div>
<div class="t d" style="left:1052px;top:1141.8px;width:72px;color:#0a0a0a;letter-spacing:-0.17px;">06A2</div>
<div class="t d" style="left:1129px;top:1141.8px;width:119.2px;color:#0a0a0a;letter-spacing:0.06px;">Ossature  de bois parapet</div>
<div class="t d" style="left:1380px;top:1141.8px;width:56.8px;color:#0a0a0a;text-align:right;letter-spacing:-0.12px;">58,00 $</div>
<div style="left:1457.7px;top:1145.3px;width:13px;height:13px;background:#f4f4f4;border:1px solid #8e8f8f;box-sizing:border-box;background:linear-gradient(135deg,#dcdcdc,#fbfbfb);box-shadow:inset 0 0 0 1px #f4f4f4;"></div>
<div class="t d" style="left:1543.5px;top:1141.8px;width:80px;color:#0a0a0a;text-align:right;letter-spacing:-0.17px;">7,76</div>
<div class="t d" style="left:1595px;top:1141.8px;width:80px;color:#0a0a0a;text-align:right;letter-spacing:-0.17px;">0,00 %</div>
<div class="t d" style="left:1671.5px;top:1141.8px;width:80px;color:#0a0a0a;text-align:right;letter-spacing:-0.17px;">0,00</div>
<div class="t d" style="left:1752.5px;top:1141.8px;width:80px;color:#0a0a0a;text-align:right;letter-spacing:-0.17px;">7,76</div>
<div class="t d" style="left:1823.6px;top:1141.8px;width:80px;color:#0a0a0a;text-align:right;letter-spacing:-0.17px;">450,00 $</div>
<div class="t d" style="left:1884.3px;top:1141.8px;width:80px;color:#0a0a0a;text-align:right;letter-spacing:-0.17px;">0,00 %</div>
<div class="t d" style="left:1969.8px;top:1141.8px;width:80px;color:#0a0a0a;text-align:right;letter-spacing:-0.17px;">0,00</div>
<div class="t d" style="left:2056px;top:1141.8px;width:80px;color:#0a0a0a;text-align:right;letter-spacing:-0.17px;">0,00 $</div>
<div class="t d" style="left:2135.7px;top:1141.8px;width:80px;color:#0a0a0a;text-align:right;letter-spacing:-0.17px;">7,76</div>
<div class="t d" style="left:2206.6px;top:1141.8px;width:80px;color:#0a0a0a;text-align:right;letter-spacing:-0.17px;">450,00 $</div>
<div class="t d" style="left:981.5px;top:1161.8px;width:66px;color:#0a0a0a;letter-spacing:-0.28px;">107897</div>
<div class="t d" style="left:1052px;top:1161.8px;width:72px;color:#0a0a0a;letter-spacing:-0.17px;">06T</div>
<div class="t d" style="left:1129px;top:1161.8px;width:119.2px;color:#0a0a0a;letter-spacing:0.06px;">MO - Construction Ossature</div>
<div class="t d" style="left:1380px;top:1161.8px;width:56.8px;color:#0a0a0a;text-align:right;letter-spacing:-0.12px;">58,00 $</div>
<div style="left:1457.7px;top:1165.3px;width:13px;height:13px;background:#f4f4f4;border:1px solid #8e8f8f;box-sizing:border-box;background:linear-gradient(135deg,#dcdcdc,#fbfbfb);box-shadow:inset 0 0 0 1px #f4f4f4;"></div>
<div class="t d" style="left:1492.8px;top:1161.8px;width:75px;color:#0a0a0a;letter-spacing:0.11px;">Taux standard</div>
<div class="t d" style="left:1543.5px;top:1161.8px;width:80px;color:#0a0a0a;text-align:right;letter-spacing:-0.17px;">7,76</div>
<div class="t d" style="left:1595px;top:1161.8px;width:80px;color:#0a0a0a;text-align:right;letter-spacing:-0.17px;">0,00 %</div>
<div class="t d" style="left:1671.5px;top:1161.8px;width:80px;color:#0a0a0a;text-align:right;letter-spacing:-0.17px;">0,00</div>
<div class="t d" style="left:1752.5px;top:1161.8px;width:80px;color:#0a0a0a;text-align:right;letter-spacing:-0.17px;">7,76</div>
<div class="t d" style="left:1823.6px;top:1161.8px;width:80px;color:#0a0a0a;text-align:right;letter-spacing:-0.17px;">450,00 $</div>
<div class="t d" style="left:1884.3px;top:1161.8px;width:80px;color:#0a0a0a;text-align:right;letter-spacing:-0.17px;">0,00 %</div>
<div class="t d" style="left:1969.8px;top:1161.8px;width:80px;color:#0a0a0a;text-align:right;letter-spacing:-0.17px;">0,00</div>
<div class="t d" style="left:2056px;top:1161.8px;width:80px;color:#0a0a0a;text-align:right;letter-spacing:-0.17px;">0,00 $</div>
<div class="t d" style="left:2135.7px;top:1161.8px;width:80px;color:#0a0a0a;text-align:right;letter-spacing:-0.17px;">7,76</div>
<div class="t d" style="left:2206.6px;top:1161.8px;width:80px;color:#0a0a0a;text-align:right;letter-spacing:-0.17px;">450,00 $</div>
<div class="t d" style="left:981.5px;top:1181.8px;width:66px;color:#fff;letter-spacing:-0.28px;">103860</div>
<div class="t d" style="left:1052px;top:1181.8px;width:72px;color:#fff;letter-spacing:-0.17px;">07W</div>
<div class="t d" style="left:1129px;top:1181.8px;width:119.2px;color:#fff;letter-spacing:0.06px;">07 - Toiture et Bord de Toit</div>
<div class="t d" style="left:1380px;top:1181.8px;width:56.8px;color:#fff;text-align:right;letter-spacing:-0.12px;">58,00 $</div>
<div style="left:1457.7px;top:1185.3px;width:13px;height:13px;background:#f4f4f4;border:1px solid #8e8f8f;box-sizing:border-box;background:linear-gradient(135deg,#dcdcdc,#fbfbfb);box-shadow:inset 0 0 0 1px #f4f4f4;"></div>
<div class="t d" style="left:1543.5px;top:1181.8px;width:80px;color:#fff;text-align:right;letter-spacing:-0.17px;">15,78</div>
<div class="t d" style="left:1595px;top:1181.8px;width:80px;color:#fff;text-align:right;letter-spacing:-0.17px;">0,00 %</div>
<div class="t d" style="left:1671.5px;top:1181.8px;width:80px;color:#fff;text-align:right;letter-spacing:-0.17px;">0,00</div>
<div class="t d" style="left:1752.5px;top:1181.8px;width:80px;color:#fff;text-align:right;letter-spacing:-0.17px;">15,78</div>
<div class="t d" style="left:1823.6px;top:1181.8px;width:80px;color:#fff;text-align:right;letter-spacing:-0.17px;">915,00 $</div>
<div class="t d" style="left:1884.3px;top:1181.8px;width:80px;color:#fff;text-align:right;letter-spacing:-0.17px;">0,00 %</div>
<div class="t d" style="left:1969.8px;top:1181.8px;width:80px;color:#fff;text-align:right;letter-spacing:-0.17px;">0,00</div>
<div class="t d" style="left:2056px;top:1181.8px;width:80px;color:#fff;text-align:right;letter-spacing:-0.17px;">0,00 $</div>
<div class="t d" style="left:2135.7px;top:1181.8px;width:80px;color:#fff;text-align:right;letter-spacing:-0.17px;">15,78</div>
<div class="t d" style="left:2206.6px;top:1181.8px;width:80px;color:#fff;text-align:right;letter-spacing:-0.17px;">915,00 $</div>
<div class="t d" style="left:981.5px;top:1201.8px;width:66px;color:#0a0a0a;letter-spacing:-0.28px;">108399</div>
<div class="t d" style="left:1052px;top:1201.8px;width:72px;color:#0a0a0a;letter-spacing:-0.17px;">06A1</div>
<div class="t d" style="left:1129px;top:1201.8px;width:119.2px;color:#0a0a0a;letter-spacing:0.06px;">Parapet bois traité DIM</div>
<div class="t d" style="left:1252.2px;top:1201.8px;width:101.6px;color:#0a0a0a;letter-spacing:0.05px;">Périmètre du toit</div>
<div class="t d" style="left:1380px;top:1201.8px;width:56.8px;color:#0a0a0a;text-align:right;letter-spacing:-0.12px;">58,00 $</div>
<div style="left:1457.7px;top:1205.3px;width:13px;height:13px;background:#f4f4f4;border:1px solid #8e8f8f;box-sizing:border-box;background:linear-gradient(135deg,#dcdcdc,#fbfbfb);box-shadow:inset 0 0 0 1px #f4f4f4;"></div>
<div class="t d" style="left:1543.5px;top:1201.8px;width:80px;color:#0a0a0a;text-align:right;letter-spacing:-0.17px;">15,78</div>
<div class="t d" style="left:1595px;top:1201.8px;width:80px;color:#0a0a0a;text-align:right;letter-spacing:-0.17px;">0,00 %</div>
<div class="t d" style="left:1671.5px;top:1201.8px;width:80px;color:#0a0a0a;text-align:right;letter-spacing:-0.17px;">0,00</div>
<div class="t d" style="left:1752.5px;top:1201.8px;width:80px;color:#0a0a0a;text-align:right;letter-spacing:-0.17px;">15,78</div>
<div class="t d" style="left:1823.6px;top:1201.8px;width:80px;color:#0a0a0a;text-align:right;letter-spacing:-0.17px;">915,00 $</div>
<div class="t d" style="left:1884.3px;top:1201.8px;width:80px;color:#0a0a0a;text-align:right;letter-spacing:-0.17px;">0,00 %</div>
<div class="t d" style="left:1969.8px;top:1201.8px;width:80px;color:#0a0a0a;text-align:right;letter-spacing:-0.17px;">0,00</div>
<div class="t d" style="left:2056px;top:1201.8px;width:80px;color:#0a0a0a;text-align:right;letter-spacing:-0.17px;">0,00 $</div>
<div class="t d" style="left:2135.7px;top:1201.8px;width:80px;color:#0a0a0a;text-align:right;letter-spacing:-0.17px;">15,78</div>
<div class="t d" style="left:2206.6px;top:1201.8px;width:80px;color:#0a0a0a;text-align:right;letter-spacing:-0.17px;">915,00 $</div>
<div class="t d" style="left:981.5px;top:1221.8px;width:66px;color:#0a0a0a;letter-spacing:-0.28px;">108414</div>
<div class="t d" style="left:1052px;top:1221.8px;width:72px;color:#0a0a0a;letter-spacing:-0.17px;">06A2</div>
<div class="t d" style="left:1129px;top:1221.8px;width:119.2px;color:#0a0a0a;letter-spacing:0.06px;">Ossature  de bois parapet</div>
<div class="t d" style="left:1380px;top:1221.8px;width:56.8px;color:#0a0a0a;text-align:right;letter-spacing:-0.12px;">58,00 $</div>
<div style="left:1457.7px;top:1225.3px;width:13px;height:13px;background:#f4f4f4;border:1px solid #8e8f8f;box-sizing:border-box;background:linear-gradient(135deg,#dcdcdc,#fbfbfb);box-shadow:inset 0 0 0 1px #f4f4f4;"></div>
<div class="t d" style="left:1543.5px;top:1221.8px;width:80px;color:#0a0a0a;text-align:right;letter-spacing:-0.17px;">15,78</div>
<div class="t d" style="left:1595px;top:1221.8px;width:80px;color:#0a0a0a;text-align:right;letter-spacing:-0.17px;">0,00 %</div>
<div class="t d" style="left:1671.5px;top:1221.8px;width:80px;color:#0a0a0a;text-align:right;letter-spacing:-0.17px;">0,00</div>
<div class="t d" style="left:1752.5px;top:1221.8px;width:80px;color:#0a0a0a;text-align:right;letter-spacing:-0.17px;">15,78</div>
<div class="t d" style="left:1823.6px;top:1221.8px;width:80px;color:#0a0a0a;text-align:right;letter-spacing:-0.17px;">915,00 $</div>
<div class="t d" style="left:1884.3px;top:1221.8px;width:80px;color:#0a0a0a;text-align:right;letter-spacing:-0.17px;">0,00 %</div>
<div class="t d" style="left:1969.8px;top:1221.8px;width:80px;color:#0a0a0a;text-align:right;letter-spacing:-0.17px;">0,00</div>
<div class="t d" style="left:2056px;top:1221.8px;width:80px;color:#0a0a0a;text-align:right;letter-spacing:-0.17px;">0,00 $</div>
<div class="t d" style="left:2135.7px;top:1221.8px;width:80px;color:#0a0a0a;text-align:right;letter-spacing:-0.17px;">15,78</div>
<div class="t d" style="left:2206.6px;top:1221.8px;width:80px;color:#0a0a0a;text-align:right;letter-spacing:-0.17px;">915,00 $</div>
<div class="t d" style="left:981.5px;top:1241.8px;width:66px;color:#0a0a0a;letter-spacing:-0.28px;">107897</div>
<div class="t d" style="left:1052px;top:1241.8px;width:72px;color:#0a0a0a;letter-spacing:-0.17px;">06T</div>
<div class="t d" style="left:1129px;top:1241.8px;width:119.2px;color:#0a0a0a;letter-spacing:0.06px;">MO - Construction Ossature</div>
<div class="t d" style="left:1380px;top:1241.8px;width:56.8px;color:#0a0a0a;text-align:right;letter-spacing:-0.12px;">58,00 $</div>
<div style="left:1457.7px;top:1245.3px;width:13px;height:13px;background:#f4f4f4;border:1px solid #8e8f8f;box-sizing:border-box;background:linear-gradient(135deg,#dcdcdc,#fbfbfb);box-shadow:inset 0 0 0 1px #f4f4f4;"></div>
<div class="t d" style="left:1492.8px;top:1241.8px;width:75px;color:#0a0a0a;letter-spacing:0.11px;">Taux standard</div>
<div class="t d" style="left:1543.5px;top:1241.8px;width:80px;color:#0a0a0a;text-align:right;letter-spacing:-0.17px;">15,78</div>
<div class="t d" style="left:1595px;top:1241.8px;width:80px;color:#0a0a0a;text-align:right;letter-spacing:-0.17px;">0,00 %</div>
<div class="t d" style="left:1671.5px;top:1241.8px;width:80px;color:#0a0a0a;text-align:right;letter-spacing:-0.17px;">0,00</div>
<div class="t d" style="left:1752.5px;top:1241.8px;width:80px;color:#0a0a0a;text-align:right;letter-spacing:-0.17px;">15,78</div>
<div class="t d" style="left:1823.6px;top:1241.8px;width:80px;color:#0a0a0a;text-align:right;letter-spacing:-0.17px;">915,00 $</div>
<div class="t d" style="left:1884.3px;top:1241.8px;width:80px;color:#0a0a0a;text-align:right;letter-spacing:-0.17px;">0,00 %</div>
<div class="t d" style="left:1969.8px;top:1241.8px;width:80px;color:#0a0a0a;text-align:right;letter-spacing:-0.17px;">0,00</div>
<div class="t d" style="left:2056px;top:1241.8px;width:80px;color:#0a0a0a;text-align:right;letter-spacing:-0.17px;">0,00 $</div>
<div class="t d" style="left:2135.7px;top:1241.8px;width:80px;color:#0a0a0a;text-align:right;letter-spacing:-0.17px;">15,78</div>
<div class="t d" style="left:2206.6px;top:1241.8px;width:80px;color:#0a0a0a;text-align:right;letter-spacing:-0.17px;">915,00 $</div>
<div style="left:1626.2px;top:722.3px;width:52.8px;height:18.5px;background:#c9ccd9;border:1px dotted #222;box-sizing:border-box;"></div>
<div class="t" style="left:1595px;top:721.8px;width:80px;height:20px;line-height:20px;font-size:11px;color:#111;text-align:right;letter-spacing:-0.17px;">0,00 %</div>
<svg style="position:absolute;left:0px;top:0px;overflow:visible" width="2339" height="1364" viewBox="0 0 2339 1364"><defs><filter id="sh" x="-20%" y="-20%" width="150%" height="150%"><feDropShadow dx="2.400" dy="2.400" stdDeviation="1.700" flood-color="#000" flood-opacity=".42"/></filter></defs><g filter="url(#sh)"><rect x="101.4" y="173.4" width="146.4" height="23.8" fill="none" stroke="#8b0c0c" stroke-width="2.400"/><rect x="102.4" y="236.2" width="84.4" height="23.9" fill="none" stroke="#8b0c0c" stroke-width="2.400"/><rect x="1398.1" y="701.4" width="42.7" height="559.4" fill="none" stroke="#8b0c0c" stroke-width="2.400"/><rect x="1583.1" y="700.7" width="45.4" height="560.1" fill="none" stroke="#8b0c0c" stroke-width="2.400"/><rect x="1637.6" y="700.4" width="45.3" height="560.4" fill="none" stroke="#8b0c0c" stroke-width="2.400"/><rect x="1790.5" y="702.5" width="52" height="558.3" fill="none" stroke="#8b0c0c" stroke-width="2.400"/><path d="M264.57 208.41L257.83 203.93" stroke="#8b0c0c" stroke-width="1.6" fill="none"/><path d="M249.5 198.4L260.71 201.4L256.62 207.57z" fill="#8b0c0c"/><path d="M56.41 264.04L91.37 259.8" stroke="#8b0c0c" stroke-width="1.6" fill="none"/><path d="M101.3 258.6L90.83 263.6L89.93 256.25z" fill="#8b0c0c"/><path d="M856.65 289.34L818.83 359.69" stroke="#8b0c0c" stroke-width="1.6" fill="none"/><path d="M814.1 368.5L816.05 357.06L822.57 360.56z" fill="#8b0c0c"/><path d="M870.27 286.51L940.85 365.73" stroke="#8b0c0c" stroke-width="1.6" fill="none"/><path d="M947.5 373.2L937.42 367.45L942.95 362.53z" fill="#8b0c0c"/><path d="M1350.18 218.91L612.99 696.36" stroke="#8b0c0c" stroke-width="1.6" fill="none"/><path d="M604.6 701.8L611.82 692.71L615.84 698.93z" fill="#8b0c0c"/><path d="M868.14 929.35L101.78 389.86" stroke="#8b0c0c" stroke-width="1.6" fill="none"/><path d="M93.6 384.1L104.72 387.41L100.46 393.46z" fill="#8b0c0c"/><path d="M1620.31 641.7L1448.43 696.18" stroke="#8b0c0c" stroke-width="1.6" fill="none"/><path d="M1438.9 699.2L1448.27 692.35L1450.5 699.4z" fill="#8b0c0c"/><path d="M1629.73 648.47L1618.37 689.56" stroke="#8b0c0c" stroke-width="1.6" fill="none"/><path d="M1615.7 699.2L1615.07 687.61L1622.2 689.58z" fill="#8b0c0c"/><path d="M1637.44 646.75L1655.01 689.65" stroke="#8b0c0c" stroke-width="1.6" fill="none"/><path d="M1658.8 698.9L1651.21 690.12L1658.06 687.32z" fill="#8b0c0c"/><path d="M1644.03 636.19L1805.66 698.03" stroke="#8b0c0c" stroke-width="1.6" fill="none"/><path d="M1815 701.6L1803.4 701.12L1806.05 694.21z" fill="#8b0c0c"/><circle cx="274.5" cy="216.6" r="14.600" fill="#8b0c0c"/><circle cx="45.5" cy="267.6" r="14.600" fill="#8b0c0c"/><circle cx="861.5" cy="276.5" r="14.600" fill="#8b0c0c"/><circle cx="1357.7" cy="207.5" r="14.600" fill="#8b0c0c"/><circle cx="878.6" cy="936.4" r="14.600" fill="#8b0c0c"/><circle cx="1631.5" cy="634.2" r="14.600" fill="#8b0c0c"/></g><text x="274.5" y="222.5" font-family="Liberation Sans,sans-serif" font-size="16.500" fill="#fff" text-anchor="middle">1</text><text x="45.5" y="273.5" font-family="Liberation Sans,sans-serif" font-size="16.500" fill="#fff" text-anchor="middle">2</text><text x="861.5" y="282.4" font-family="Liberation Sans,sans-serif" font-size="16.500" fill="#fff" text-anchor="middle">3</text><text x="1357.7" y="213.4" font-family="Liberation Sans,sans-serif" font-size="16.500" fill="#fff" text-anchor="middle">4</text><text x="878.6" y="942.3" font-family="Liberation Sans,sans-serif" font-size="16.500" fill="#fff" text-anchor="middle">5</text><text x="1631.5" y="640.1" font-family="Liberation Sans,sans-serif" font-size="16.500" fill="#fff" text-anchor="middle">6</text><path d="M35 1227v16.500l3.800-3.600 2.600 6 2.300-1-2.600-5.900h5.200z" fill="#fff" stroke="#000" stroke-width="1"/></svg>
</div></body></html>
